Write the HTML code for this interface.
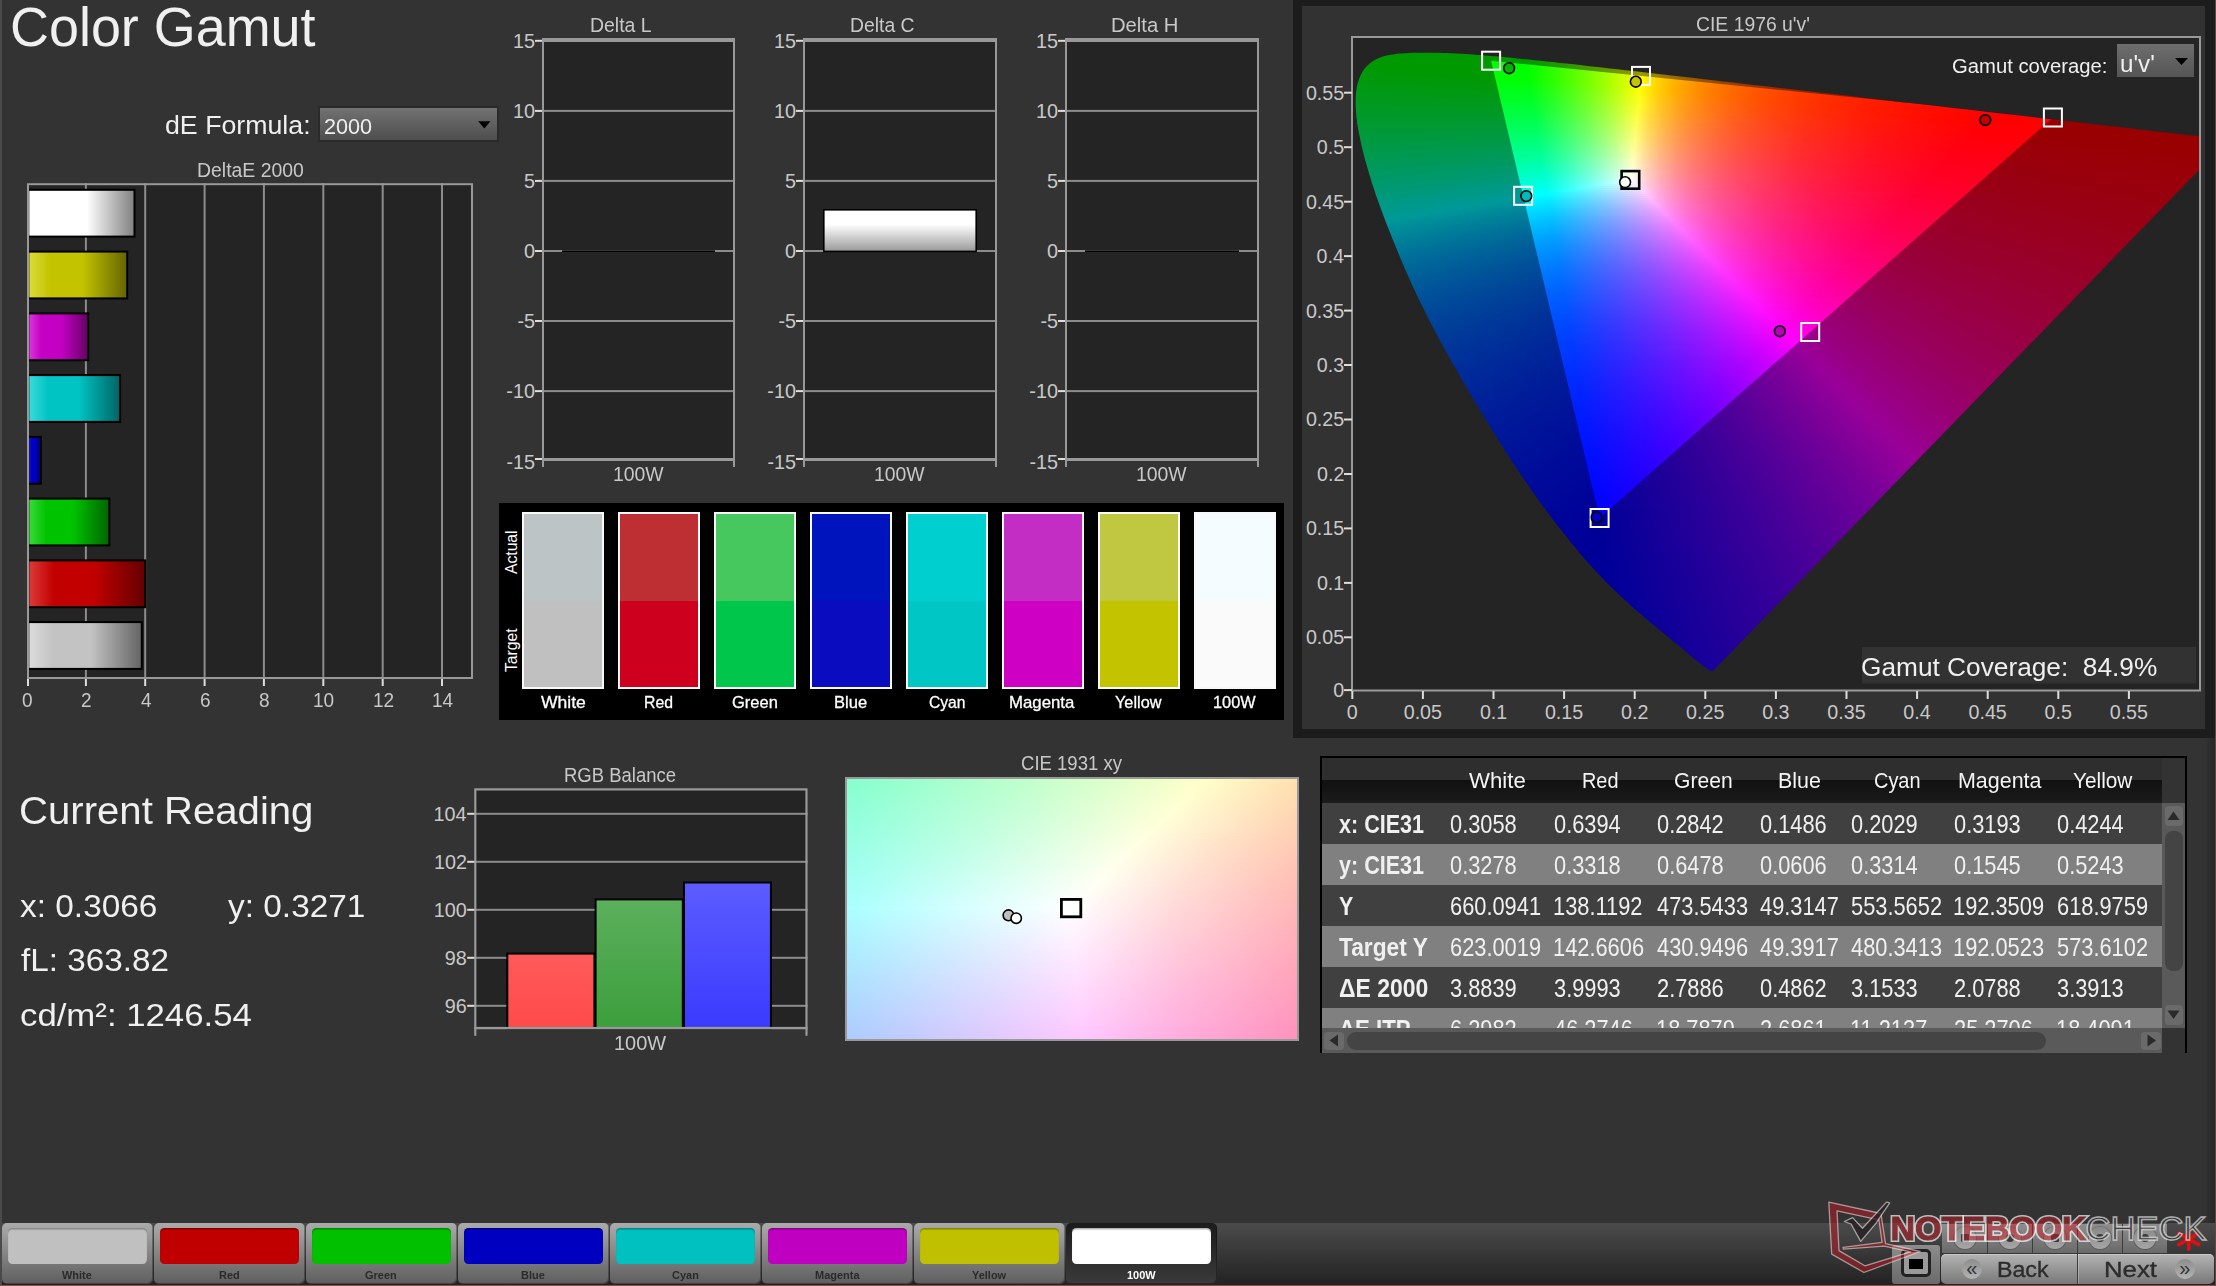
<!DOCTYPE html>
<html><head><meta charset="utf-8"><title>Color Gamut</title>
<style>
html,body{margin:0;padding:0;background:#333;}
body{width:2216px;height:1286px;overflow:hidden;position:relative;font-family:"Liberation Sans",sans-serif;}
.t{position:absolute;white-space:nowrap;line-height:1;transform-origin:0 0;}
.b{position:absolute;box-sizing:border-box;}
svg{position:absolute;left:0;top:0;overflow:visible;}
</style></head><body>
<div class="b" style="left:0px;top:0px;width:1.6px;height:1286px;background:#4a4a4a;"></div>
<div class="t" style="left:10.3px;top:0px;font-size:55.0px;color:#f0f0f0;transform:scaleX(0.980);">Color Gamut</div>
<div class="t" style="left:164.7px;top:112px;font-size:26.4px;color:#f0f0f0;transform:scaleX(1.013);">dE Formula:</div>
<div class="b" style="left:318px;top:106px;width:180.5px;height:36px;background:linear-gradient(#727272,#4e4e4e);border:2px solid #2a2a2a;"></div>
<div class="t" style="left:324.4px;top:116px;font-size:22.6px;color:#f0f0f0;transform:scaleX(0.956);">2000</div>
<svg width="2216" height="1286"><path d="M478.2 121.3h12.2l-6.1 7.2z" fill="#000"/></svg>
<div class="t" style="left:196.8px;top:161px;font-size:19.6px;color:#c8c8c8;transform:scaleX(0.991);">DeltaE 2000</div>
<svg width="2216" height="1286"><rect x="27.0" y="183.2" width="445.0" height="493.8" fill="#242424"/><rect x="84.9" y="183.2" width="2" height="493.8" fill="#8c8c8c"/><rect x="144.2" y="183.2" width="2" height="493.8" fill="#8c8c8c"/><rect x="203.6" y="183.2" width="2" height="493.8" fill="#8c8c8c"/><rect x="262.9" y="183.2" width="2" height="493.8" fill="#8c8c8c"/><rect x="322.3" y="183.2" width="2" height="493.8" fill="#8c8c8c"/><rect x="381.7" y="183.2" width="2" height="493.8" fill="#8c8c8c"/><rect x="441.0" y="183.2" width="2" height="493.8" fill="#8c8c8c"/><rect x="27.0" y="678.0" width="2" height="8" fill="#ddd"/><rect x="84.9" y="678.0" width="2" height="8" fill="#ddd"/><rect x="144.2" y="678.0" width="2" height="8" fill="#ddd"/><rect x="203.6" y="678.0" width="2" height="8" fill="#ddd"/><rect x="262.9" y="678.0" width="2" height="8" fill="#ddd"/><rect x="322.3" y="678.0" width="2" height="8" fill="#ddd"/><rect x="381.7" y="678.0" width="2" height="8" fill="#ddd"/><rect x="441.0" y="678.0" width="2" height="8" fill="#ddd"/><defs><linearGradient id="bg0"><stop offset="0" stop-color="#ffffff"/><stop offset=".22" stop-color="#ffffff"/><stop offset=".55" stop-color="#ffffff"/><stop offset="1" stop-color="#808080"/></linearGradient><linearGradient id="bg1"><stop offset="0" stop-color="#dcdc3c"/><stop offset=".22" stop-color="#c3c300"/><stop offset=".55" stop-color="#c3c300"/><stop offset="1" stop-color="#646400"/></linearGradient><linearGradient id="bg2"><stop offset="0" stop-color="#dc3cdc"/><stop offset=".22" stop-color="#c300c3"/><stop offset=".55" stop-color="#c300c3"/><stop offset="1" stop-color="#640064"/></linearGradient><linearGradient id="bg3"><stop offset="0" stop-color="#3cdcdc"/><stop offset=".22" stop-color="#00c3c3"/><stop offset=".55" stop-color="#00c3c3"/><stop offset="1" stop-color="#006464"/></linearGradient><linearGradient id="bg4"><stop offset="0" stop-color="#3c3cdc"/><stop offset=".22" stop-color="#0000c3"/><stop offset=".55" stop-color="#0000c3"/><stop offset="1" stop-color="#000064"/></linearGradient><linearGradient id="bg5"><stop offset="0" stop-color="#3cdc3c"/><stop offset=".22" stop-color="#00c300"/><stop offset=".55" stop-color="#00c300"/><stop offset="1" stop-color="#006400"/></linearGradient><linearGradient id="bg6"><stop offset="0" stop-color="#dc3c3c"/><stop offset=".22" stop-color="#c30000"/><stop offset=".55" stop-color="#c30000"/><stop offset="1" stop-color="#640000"/></linearGradient><linearGradient id="bg7"><stop offset="0" stop-color="#dcdcdc"/><stop offset=".22" stop-color="#c3c3c3"/><stop offset=".55" stop-color="#c3c3c3"/><stop offset="1" stop-color="#646464"/></linearGradient></defs><rect x="28.3" y="189.8" width="106.2" height="46.8" fill="url(#bg0)" stroke="#000" stroke-width="2"/><rect x="28.3" y="251.6" width="98.9" height="46.8" fill="url(#bg1)" stroke="#000" stroke-width="2"/><rect x="28.3" y="313.4" width="59.9" height="46.8" fill="url(#bg2)" stroke="#000" stroke-width="2"/><rect x="28.3" y="375.1" width="91.8" height="46.8" fill="url(#bg3)" stroke="#000" stroke-width="2"/><rect x="28.3" y="436.9" width="12.6" height="46.8" fill="url(#bg4)" stroke="#000" stroke-width="2"/><rect x="28.3" y="498.6" width="81.0" height="46.8" fill="url(#bg5)" stroke="#000" stroke-width="2"/><rect x="28.3" y="560.4" width="116.9" height="46.8" fill="url(#bg6)" stroke="#000" stroke-width="2"/><rect x="28.3" y="622.1" width="113.5" height="46.8" fill="url(#bg7)" stroke="#000" stroke-width="2"/><rect x="28.0" y="184.2" width="444.0" height="493.8" fill="none" stroke="#999" stroke-width="2"/></svg>
<div class="t" style="left:22.0px;top:690px;font-size:20.0px;color:#c8c8c8;transform:scaleX(0.950);">0</div>
<div class="t" style="left:81.4px;top:690px;font-size:20.0px;color:#c8c8c8;transform:scaleX(0.950);">2</div>
<div class="t" style="left:140.8px;top:690px;font-size:20.0px;color:#c8c8c8;transform:scaleX(0.950);">4</div>
<div class="t" style="left:200.0px;top:690px;font-size:20.0px;color:#c8c8c8;transform:scaleX(0.950);">6</div>
<div class="t" style="left:259.4px;top:690px;font-size:20.0px;color:#c8c8c8;transform:scaleX(0.950);">8</div>
<div class="t" style="left:313.2px;top:690px;font-size:20.0px;color:#c8c8c8;transform:scaleX(0.950);">10</div>
<div class="t" style="left:372.7px;top:690px;font-size:20.0px;color:#c8c8c8;transform:scaleX(0.950);">12</div>
<div class="t" style="left:431.8px;top:690px;font-size:20.0px;color:#c8c8c8;transform:scaleX(0.950);">14</div>
<svg width="2216" height="1286"><rect x="542.0" y="38.0" width="193.0" height="423.0" fill="#242424"/><rect x="535.0" y="39.8" width="8" height="2" fill="#ddd"/><rect x="542.0" y="109.9" width="193.0" height="2" fill="#8c8c8c"/><rect x="535.0" y="109.9" width="8" height="2" fill="#ddd"/><rect x="542.0" y="179.9" width="193.0" height="2" fill="#8c8c8c"/><rect x="535.0" y="179.9" width="8" height="2" fill="#ddd"/><rect x="542.0" y="250.0" width="193.0" height="2" fill="#8c8c8c"/><rect x="535.0" y="250.0" width="8" height="2" fill="#ddd"/><rect x="542.0" y="320.0" width="193.0" height="2" fill="#8c8c8c"/><rect x="535.0" y="320.0" width="8" height="2" fill="#ddd"/><rect x="542.0" y="390.1" width="193.0" height="2" fill="#8c8c8c"/><rect x="535.0" y="390.1" width="8" height="2" fill="#ddd"/><rect x="535.0" y="458.0" width="8" height="2" fill="#ddd"/><rect x="562.0" y="250.4" width="153.0" height="1.6" fill="#000"/><path d="M543.0 467.0V40.0H734.0V467.0" fill="none" stroke="#999" stroke-width="2"/><rect x="542.0" y="38.0" width="193.0" height="4" fill="#999"/><rect x="542.0" y="458.0" width="193.0" height="3" fill="#999"/></svg>
<div class="t" style="left:589.9px;top:16px;font-size:19.7px;color:#c8c8c8;transform:scaleX(0.988);">Delta L</div>
<div class="t" style="left:612.5px;top:464px;font-size:20.0px;color:#c8c8c8;transform:scaleX(0.970);">100W</div>
<div class="t" style="left:513.0px;top:32px;font-size:19.8px;color:#c8c8c8;">15</div>
<div class="t" style="left:512.9px;top:102px;font-size:19.8px;color:#c8c8c8;">10</div>
<div class="t" style="left:524.0px;top:172px;font-size:19.8px;color:#c8c8c8;">5</div>
<div class="t" style="left:523.9px;top:242px;font-size:19.8px;color:#c8c8c8;">0</div>
<div class="t" style="left:517.4px;top:312px;font-size:19.8px;color:#c8c8c8;">-5</div>
<div class="t" style="left:506.3px;top:382px;font-size:19.8px;color:#c8c8c8;">-10</div>
<div class="t" style="left:506.4px;top:453px;font-size:19.8px;color:#c8c8c8;">-15</div>
<svg width="2216" height="1286"><rect x="803.0" y="38.0" width="194.0" height="423.0" fill="#242424"/><rect x="796.0" y="39.8" width="8" height="2" fill="#ddd"/><rect x="803.0" y="109.9" width="194.0" height="2" fill="#8c8c8c"/><rect x="796.0" y="109.9" width="8" height="2" fill="#ddd"/><rect x="803.0" y="179.9" width="194.0" height="2" fill="#8c8c8c"/><rect x="796.0" y="179.9" width="8" height="2" fill="#ddd"/><rect x="803.0" y="250.0" width="194.0" height="2" fill="#8c8c8c"/><rect x="796.0" y="250.0" width="8" height="2" fill="#ddd"/><rect x="803.0" y="320.0" width="194.0" height="2" fill="#8c8c8c"/><rect x="796.0" y="320.0" width="8" height="2" fill="#ddd"/><rect x="803.0" y="390.1" width="194.0" height="2" fill="#8c8c8c"/><rect x="796.0" y="390.1" width="8" height="2" fill="#ddd"/><rect x="796.0" y="458.0" width="8" height="2" fill="#ddd"/><defs><linearGradient id="dcg" x1="0" y1="0" x2="0" y2="1"><stop offset="0" stop-color="#fff"/><stop offset=".35" stop-color="#fff"/><stop offset="1" stop-color="#999"/></linearGradient></defs><rect x="823.8" y="209.8" width="152.4" height="41.6" fill="url(#dcg)" stroke="#000" stroke-width="1.6"/><path d="M804.0 467.0V40.0H996.0V467.0" fill="none" stroke="#999" stroke-width="2"/><rect x="803.0" y="38.0" width="194.0" height="4" fill="#999"/><rect x="803.0" y="458.0" width="194.0" height="3" fill="#999"/></svg>
<div class="t" style="left:850.1px;top:16px;font-size:19.7px;color:#c8c8c8;transform:scaleX(0.982);">Delta C</div>
<div class="t" style="left:874.0px;top:464px;font-size:20.0px;color:#c8c8c8;transform:scaleX(0.970);">100W</div>
<div class="t" style="left:774.0px;top:32px;font-size:19.8px;color:#c8c8c8;">15</div>
<div class="t" style="left:773.9px;top:102px;font-size:19.8px;color:#c8c8c8;">10</div>
<div class="t" style="left:785.0px;top:172px;font-size:19.8px;color:#c8c8c8;">5</div>
<div class="t" style="left:784.9px;top:242px;font-size:19.8px;color:#c8c8c8;">0</div>
<div class="t" style="left:778.4px;top:312px;font-size:19.8px;color:#c8c8c8;">-5</div>
<div class="t" style="left:767.3px;top:382px;font-size:19.8px;color:#c8c8c8;">-10</div>
<div class="t" style="left:767.4px;top:453px;font-size:19.8px;color:#c8c8c8;">-15</div>
<svg width="2216" height="1286"><rect x="1065.0" y="38.0" width="194.0" height="423.0" fill="#242424"/><rect x="1058.0" y="39.8" width="8" height="2" fill="#ddd"/><rect x="1065.0" y="109.9" width="194.0" height="2" fill="#8c8c8c"/><rect x="1058.0" y="109.9" width="8" height="2" fill="#ddd"/><rect x="1065.0" y="179.9" width="194.0" height="2" fill="#8c8c8c"/><rect x="1058.0" y="179.9" width="8" height="2" fill="#ddd"/><rect x="1065.0" y="250.0" width="194.0" height="2" fill="#8c8c8c"/><rect x="1058.0" y="250.0" width="8" height="2" fill="#ddd"/><rect x="1065.0" y="320.0" width="194.0" height="2" fill="#8c8c8c"/><rect x="1058.0" y="320.0" width="8" height="2" fill="#ddd"/><rect x="1065.0" y="390.1" width="194.0" height="2" fill="#8c8c8c"/><rect x="1058.0" y="390.1" width="8" height="2" fill="#ddd"/><rect x="1058.0" y="458.0" width="8" height="2" fill="#ddd"/><rect x="1085.0" y="250.4" width="154.0" height="1.6" fill="#000"/><path d="M1066.0 467.0V40.0H1258.0V467.0" fill="none" stroke="#999" stroke-width="2"/><rect x="1065.0" y="38.0" width="194.0" height="4" fill="#999"/><rect x="1065.0" y="458.0" width="194.0" height="3" fill="#999"/></svg>
<div class="t" style="left:1111.0px;top:16px;font-size:19.7px;color:#c8c8c8;transform:scaleX(1.028);">Delta H</div>
<div class="t" style="left:1136.0px;top:464px;font-size:20.0px;color:#c8c8c8;transform:scaleX(0.970);">100W</div>
<div class="t" style="left:1036.0px;top:32px;font-size:19.8px;color:#c8c8c8;">15</div>
<div class="t" style="left:1035.9px;top:102px;font-size:19.8px;color:#c8c8c8;">10</div>
<div class="t" style="left:1047.0px;top:172px;font-size:19.8px;color:#c8c8c8;">5</div>
<div class="t" style="left:1046.9px;top:242px;font-size:19.8px;color:#c8c8c8;">0</div>
<div class="t" style="left:1040.4px;top:312px;font-size:19.8px;color:#c8c8c8;">-5</div>
<div class="t" style="left:1029.3px;top:382px;font-size:19.8px;color:#c8c8c8;">-10</div>
<div class="t" style="left:1029.4px;top:453px;font-size:19.8px;color:#c8c8c8;">-15</div>
<div class="b" style="left:499px;top:503px;width:785px;height:216.5px;background:#000;"></div>
<div class="b" style="left:522.0px;top:512px;width:82.3px;height:177px;background:linear-gradient(#bdc4c6 0,#bdc4c6 50.3%,#c0c0c0 50.3%,#c0c0c0 100%);border:2px solid #f8f8f8;"></div>
<div class="t" style="left:541.0px;top:694px;font-size:17.0px;color:#fff;transform:scaleX(1.031);-webkit-text-stroke:.3px #fff;">White</div>
<div class="b" style="left:617.9px;top:512px;width:82.3px;height:177px;background:linear-gradient(#be2f34 0,#be2f34 50.3%,#cd001e 50.3%,#cd001e 100%);border:2px solid #f8f8f8;"></div>
<div class="t" style="left:644.3px;top:694px;font-size:17.0px;color:#fff;transform:scaleX(0.930);-webkit-text-stroke:.3px #fff;">Red</div>
<div class="b" style="left:713.9px;top:512px;width:82.3px;height:177px;background:linear-gradient(#46c85f 0,#46c85f 50.3%,#00c64b 50.3%,#00c64b 100%);border:2px solid #f8f8f8;"></div>
<div class="t" style="left:732.1px;top:694px;font-size:17.0px;color:#fff;transform:scaleX(0.970);-webkit-text-stroke:.3px #fff;">Green</div>
<div class="b" style="left:809.8px;top:512px;width:82.3px;height:177px;background:linear-gradient(#0014be 0,#0014be 50.3%,#0a0cc0 50.3%,#0a0cc0 100%);border:2px solid #f8f8f8;"></div>
<div class="t" style="left:833.9px;top:694px;font-size:17.0px;color:#fff;transform:scaleX(0.975);-webkit-text-stroke:.3px #fff;">Blue</div>
<div class="b" style="left:905.7px;top:512px;width:82.3px;height:177px;background:linear-gradient(#00cfcf 0,#00cfcf 50.3%,#00c6c6 50.3%,#00c6c6 100%);border:2px solid #f8f8f8;"></div>
<div class="t" style="left:928.6px;top:694px;font-size:17.0px;color:#fff;transform:scaleX(0.920);-webkit-text-stroke:.3px #fff;">Cyan</div>
<div class="b" style="left:1001.7px;top:512px;width:82.3px;height:177px;background:linear-gradient(#c32dc3 0,#c32dc3 50.3%,#cd00c3 50.3%,#cd00c3 100%);border:2px solid #f8f8f8;"></div>
<div class="t" style="left:1009.3px;top:694px;font-size:17.0px;color:#fff;transform:scaleX(0.988);-webkit-text-stroke:.3px #fff;">Magenta</div>
<div class="b" style="left:1097.6px;top:512px;width:82.3px;height:177px;background:linear-gradient(#c0c841 0,#c0c841 50.3%,#c3c300 50.3%,#c3c300 100%);border:2px solid #f8f8f8;"></div>
<div class="t" style="left:1115.1px;top:694px;font-size:17.0px;color:#fff;transform:scaleX(0.957);-webkit-text-stroke:.3px #fff;">Yellow</div>
<div class="b" style="left:1193.5px;top:512px;width:82.3px;height:177px;background:linear-gradient(#f5fcff 0,#f5fcff 50.3%,#fafafa 50.3%,#fafafa 100%);border:2px solid #f8f8f8;"></div>
<div class="t" style="left:1212.6px;top:694px;font-size:17.0px;color:#fff;transform:scaleX(0.959);-webkit-text-stroke:.3px #fff;">100W</div>
<div class="t" style="left:0.0px;top:-14px;font-size:16.5px;color:#fff;transform:scaleX(0.950);left:502.5px;top:573.5px;transform:rotate(-90deg) scaleX(.95);transform-origin:0 0;">Actual</div>
<div class="t" style="left:-0.3px;top:-14px;font-size:16.5px;color:#fff;transform:scaleX(0.950);left:502.5px;top:671.5px;transform:rotate(-90deg) scaleX(.95);transform-origin:0 0;">Target</div>
<div class="b" style="left:1293px;top:0px;width:921.5px;height:737.5px;background:#1c1c1c;"></div>
<div class="b" style="left:1302px;top:6px;width:903px;height:722.5px;background:#323232;"></div>
<div class="b" style="left:2205px;top:737.5px;width:9.5px;height:486px;background:linear-gradient(90deg,#333,#262626);"></div>
<div class="b" style="left:2214.5px;top:0px;width:1.5px;height:1286px;background:#74403a;"></div>
<svg width="2216" height="1286"><rect x="1351" y="36" width="850" height="655" fill="#242424"/><defs><clipPath id="uvc"><rect x="1353" y="38" width="846" height="651"/></clipPath><clipPath id="uvl" clip-path="url(#uvc)"><polygon points="1714.5,671.9 1714.5,671.8 1714.4,671.8 1714.4,671.8 1714.3,671.9 1714.3,672.0 1714.2,672.0 1714.2,672.1 1714.1,672.2 1714.0,672.3 1713.9,672.3 1713.8,672.3 1713.7,672.3 1713.6,672.3 1713.5,672.3 1713.4,672.3 1713.3,672.4 1713.2,672.5 1713.1,672.6 1712.9,672.7 1712.8,672.7 1712.7,672.7 1712.5,672.7 1712.3,672.7 1712.2,672.6 1712.0,672.6 1711.8,672.6 1711.6,672.6 1711.3,672.7 1711.1,672.7 1710.9,672.7 1710.6,672.7 1710.4,672.7 1710.1,672.6 1709.7,672.5 1709.3,672.3 1708.8,672.1 1708.3,671.7 1707.6,671.4 1706.9,670.9 1706.1,670.4 1705.3,669.8 1704.4,669.2 1703.5,668.5 1702.5,667.8 1701.5,667.0 1700.3,666.1 1699.1,665.1 1697.7,664.0 1696.2,662.8 1694.6,661.5 1693.0,660.1 1691.2,658.6 1689.4,657.1 1687.5,655.5 1685.5,653.7 1683.4,652.0 1681.3,650.1 1679.0,648.2 1676.5,646.2 1673.9,644.1 1671.2,641.8 1668.2,639.4 1665.1,636.8 1661.8,634.1 1658.4,631.3 1654.9,628.4 1651.2,625.4 1647.5,622.3 1643.5,618.9 1639.4,615.4 1635.0,611.6 1630.4,607.5 1625.7,603.2 1620.7,598.7 1615.7,593.9 1610.5,588.9 1605.0,583.5 1599.3,577.6 1593.2,571.0 1586.6,563.7 1579.5,555.6 1572.1,546.6 1564.2,536.9 1556.1,526.5 1547.7,515.5 1539.0,503.7 1530.1,491.2 1520.9,478.0 1511.6,464.0 1502.1,449.4 1492.5,434.1 1482.8,418.3 1473.0,402.2 1463.3,385.7 1453.7,369.0 1444.2,352.2 1435.1,335.3 1426.4,318.5 1418.1,301.9 1410.4,285.4 1403.2,269.3 1396.5,253.5 1390.3,238.3 1384.5,223.6 1379.3,209.6 1374.5,196.3 1370.3,183.7 1366.7,171.8 1363.5,160.8 1360.8,150.5 1358.7,141.0 1356.9,132.2 1355.5,124.0 1354.6,116.5 1354.0,109.5 1353.8,103.1 1353.9,97.2 1354.3,91.7 1355.1,86.6 1356.2,81.9 1357.6,77.7 1359.3,73.8 1361.3,70.3 1363.5,67.1 1366.0,64.3 1368.8,61.8 1371.7,59.7 1374.8,57.9 1378.1,56.3 1381.5,55.1 1385.1,54.0 1388.9,53.2 1392.7,52.6 1396.6,52.0 1400.7,51.7 1404.8,51.4 1409.0,51.2 1413.3,51.0 1417.5,50.9 1421.8,50.9 1426.1,50.8 1430.4,50.9 1434.7,50.9 1439.1,51.0 1443.4,51.1 1447.8,51.3 1452.3,51.5 1456.8,51.7 1461.4,51.9 1466.0,52.2 1470.8,52.5 1475.6,52.9 1480.5,53.3 1485.5,53.7 1490.6,54.1 1495.7,54.5 1501.0,55.0 1506.4,55.5 1511.9,56.0 1517.4,56.6 1523.1,57.2 1529.0,57.8 1534.9,58.4 1541.0,59.0 1547.3,59.7 1553.6,60.3 1560.1,61.1 1566.8,61.8 1573.6,62.5 1580.5,63.3 1587.6,64.1 1594.9,64.9 1602.3,65.8 1609.9,66.6 1617.6,67.5 1625.5,68.4 1633.6,69.3 1641.9,70.2 1650.3,71.2 1658.8,72.2 1667.6,73.2 1676.5,74.2 1685.6,75.3 1694.8,76.3 1704.3,77.4 1713.8,78.5 1723.6,79.7 1733.5,80.8 1743.6,82.0 1753.8,83.1 1764.1,84.3 1774.6,85.5 1785.2,86.8 1795.9,88.0 1806.7,89.2 1817.7,90.5 1828.7,91.8 1839.8,93.0 1850.9,94.3 1861.9,95.6 1872.9,96.9 1883.7,98.1 1894.4,99.4 1905.1,100.6 1915.7,101.8 1926.4,103.0 1936.9,104.3 1947.5,105.5 1957.8,106.7 1968.0,107.8 1978.0,109.0 1987.7,110.1 1997.1,111.2 2006.3,112.2 2015.3,113.2 2024.1,114.3 2032.6,115.2 2040.9,116.2 2049.0,117.1 2056.7,118.0 2064.2,118.9 2071.4,119.7 2078.3,120.5 2085.0,121.3 2091.5,122.1 2097.7,122.8 2103.6,123.4 2109.3,124.1 2114.9,124.7 2120.2,125.3 2125.3,125.9 2130.3,126.5 2135.1,127.1 2139.7,127.6 2144.3,128.1 2148.7,128.6 2153.0,129.1 2157.1,129.6 2161.1,130.1 2164.9,130.5 2168.6,131.0 2172.2,131.4 2175.5,131.7 2178.8,132.1 2181.9,132.5 2184.8,132.8 2187.6,133.1 2190.2,133.4 2192.7,133.7 2195.1,134.0 2197.3,134.2 2199.4,134.5 2201.4,134.7 2203.3,134.9 2205.1,135.1 2206.8,135.3 2208.5,135.5 2210.0,135.7 2211.4,135.9 2212.8,136.0 2214.0,136.2 2215.1,136.3 2216.0,136.4 2216.9,136.5 2217.7,136.6 2218.5,136.7 2219.3,136.8 2220.1,136.9 2220.8,136.9 2221.5,137.0 2222.1,137.1 2222.8,137.2 2223.3,137.2 2223.9,137.3 2224.4,137.4 2225.0,137.4 2225.5,137.5 2226.1,137.6 2226.7,137.6 2227.2,137.7 2227.8,137.8 2228.3,137.8 2228.8,137.9 2229.3,137.9 2229.7,138.0 2230.1,138.0 2230.4,138.1 2230.8,138.1 2231.0,138.1 2231.3,138.2 2231.5,138.2 2231.7,138.2 2231.8,138.2 2231.9,138.2 2232.0,138.2 2232.1,138.3 2232.2,138.3 2232.3,138.3 2232.3,138.3"/></clipPath><linearGradient id="u0" gradientUnits="userSpaceOnUse" x1="1396" x2="1464" y1="0" y2="0"><stop offset="0" stop-color="#0f0"/><stop offset="1" stop-color="#0f0"/></linearGradient><linearGradient id="u1" gradientUnits="userSpaceOnUse" x1="1384" x2="1491" y1="0" y2="0"><stop offset="0" stop-color="#0f0"/><stop offset="1" stop-color="#0f0"/></linearGradient><linearGradient id="u2" gradientUnits="userSpaceOnUse" x1="1378" x2="1513" y1="0" y2="0"><stop offset="0" stop-color="#0f0"/><stop offset="1" stop-color="#0f0"/></linearGradient><linearGradient id="u3" gradientUnits="userSpaceOnUse" x1="1373" x2="1533" y1="0" y2="0"><stop offset="0" stop-color="#0f0"/><stop offset="0.95" stop-color="#0f0"/><stop offset="1" stop-color="#0eff00"/></linearGradient><linearGradient id="u4" gradientUnits="userSpaceOnUse" x1="1370" x2="1552" y1="0" y2="0"><stop offset="0" stop-color="#0f0"/><stop offset="0.852" stop-color="#0f0"/><stop offset="1" stop-color="#2fff00"/></linearGradient><linearGradient id="u5" gradientUnits="userSpaceOnUse" x1="1367" x2="1570" y1="0" y2="0"><stop offset="0" stop-color="#0f0"/><stop offset="0.778" stop-color="#0f0"/><stop offset="0.872" stop-color="#20ff00"/><stop offset="1" stop-color="#52ff00"/></linearGradient><linearGradient id="u6" gradientUnits="userSpaceOnUse" x1="1365" x2="1588" y1="0" y2="0"><stop offset="0" stop-color="#00ff01"/><stop offset="0.722" stop-color="#0f0"/><stop offset="0.865" stop-color="#3aff00"/><stop offset="1" stop-color="#78ff00"/></linearGradient><linearGradient id="u7" gradientUnits="userSpaceOnUse" x1="1363" x2="1606" y1="0" y2="0"><stop offset="0" stop-color="#00ff04"/><stop offset="0.144" stop-color="#0f0"/><stop offset="0.671" stop-color="#0f0"/><stop offset="0.84" stop-color="#4bff00"/><stop offset="1" stop-color="#a1ff00"/></linearGradient><linearGradient id="u8" gradientUnits="userSpaceOnUse" x1="1361" x2="1624" y1="0" y2="0"><stop offset="0" stop-color="#00ff07"/><stop offset="0.221" stop-color="#0f0"/><stop offset="0.631" stop-color="#01ff00"/><stop offset="0.73" stop-color="#30ff00"/><stop offset="0.825" stop-color="#62ff00"/><stop offset="0.916" stop-color="#98ff00"/><stop offset="1" stop-color="#ceff00"/></linearGradient><linearGradient id="u9" gradientUnits="userSpaceOnUse" x1="1360" x2="1641" y1="0" y2="0"><stop offset="0" stop-color="#00ff09"/><stop offset="0.285" stop-color="#0f0"/><stop offset="0.594" stop-color="#0f0"/><stop offset="0.705" stop-color="#39ff00"/><stop offset="0.811" stop-color="#78ff00"/><stop offset="0.907" stop-color="#b7ff00"/><stop offset="1" stop-color="#fdff00"/></linearGradient><linearGradient id="u10" gradientUnits="userSpaceOnUse" x1="1359" x2="1659" y1="0" y2="0"><stop offset="0" stop-color="#00ff0c"/><stop offset="0.343" stop-color="#0f0"/><stop offset="0.56" stop-color="#0f0"/><stop offset="0.66" stop-color="#37ff00"/><stop offset="0.76" stop-color="#75ff00"/><stop offset="0.853" stop-color="#b8ff00"/><stop offset="0.94" stop-color="#feff00"/><stop offset="1" stop-color="#ffd300"/></linearGradient><linearGradient id="u11" gradientUnits="userSpaceOnUse" x1="1358" x2="1676" y1="0" y2="0"><stop offset="0" stop-color="#00ff0e"/><stop offset="0.393" stop-color="#0f0"/><stop offset="0.535" stop-color="#01ff00"/><stop offset="0.632" stop-color="#3aff00"/><stop offset="0.723" stop-color="#7f0"/><stop offset="0.808" stop-color="#b8ff00"/><stop offset="0.89" stop-color="#feff00"/><stop offset="0.943" stop-color="#ffd500"/><stop offset="1" stop-color="#ffb200"/></linearGradient><linearGradient id="u12" gradientUnits="userSpaceOnUse" x1="1357" x2="1693" y1="0" y2="0"><stop offset="0" stop-color="#0f1"/><stop offset="0.509" stop-color="#0f0"/><stop offset="0.601" stop-color="#3aff00"/><stop offset="0.688" stop-color="#7f0"/><stop offset="0.768" stop-color="#b8ff00"/><stop offset="0.845" stop-color="#ff0"/><stop offset="0.881" stop-color="#ffe000"/><stop offset="0.917" stop-color="#ffc600"/><stop offset="1" stop-color="#ff9800"/></linearGradient><linearGradient id="u13" gradientUnits="userSpaceOnUse" x1="1356" x2="1711" y1="0" y2="0"><stop offset="0" stop-color="#00ff13"/><stop offset="0.485" stop-color="#0f0"/><stop offset="0.566" stop-color="#35ff00"/><stop offset="0.651" stop-color="#75ff00"/><stop offset="0.727" stop-color="#b6ff00"/><stop offset="0.803" stop-color="#ff0"/><stop offset="0.845" stop-color="#ffd800"/><stop offset="0.89" stop-color="#ffb800"/><stop offset="0.941" stop-color="#ff9b00"/><stop offset="1" stop-color="#ff8100"/></linearGradient><linearGradient id="u14" gradientUnits="userSpaceOnUse" x1="1355" x2="1728" y1="0" y2="0"><stop offset="0" stop-color="#00ff16"/><stop offset="0.466" stop-color="#01ff03"/><stop offset="0.547" stop-color="#39ff00"/><stop offset="0.625" stop-color="#7f0"/><stop offset="0.694" stop-color="#b6ff00"/><stop offset="0.767" stop-color="#fffe00"/><stop offset="0.812" stop-color="#ffd300"/><stop offset="0.866" stop-color="#ffad00"/><stop offset="0.928" stop-color="#ff8c00"/><stop offset="1" stop-color="#ff6f00"/></linearGradient><linearGradient id="u15" gradientUnits="userSpaceOnUse" x1="1355" x2="1745" y1="0" y2="0"><stop offset="0" stop-color="#00ff18"/><stop offset="0.446" stop-color="#00ff06"/><stop offset="0.523" stop-color="#39ff02"/><stop offset="0.597" stop-color="#7f0"/><stop offset="0.667" stop-color="#b9ff00"/><stop offset="0.731" stop-color="#feff00"/><stop offset="0.787" stop-color="#ffca00"/><stop offset="0.846" stop-color="#ffa100"/><stop offset="0.918" stop-color="#ff7e00"/><stop offset="1" stop-color="#ff6000"/></linearGradient><linearGradient id="u16" gradientUnits="userSpaceOnUse" x1="1354" x2="1763" y1="0" y2="0"><stop offset="0" stop-color="#00ff1b"/><stop offset="0.428" stop-color="#00ff09"/><stop offset="0.499" stop-color="#36ff05"/><stop offset="0.572" stop-color="#7f0"/><stop offset="0.638" stop-color="#b9ff00"/><stop offset="0.699" stop-color="#feff00"/><stop offset="0.758" stop-color="#ffc500"/><stop offset="0.824" stop-color="#ff9800"/><stop offset="0.905" stop-color="#ff7200"/><stop offset="1" stop-color="#ff5200"/></linearGradient><linearGradient id="u17" gradientUnits="userSpaceOnUse" x1="1354" x2="1780" y1="0" y2="0"><stop offset="0" stop-color="#00ff1e"/><stop offset="0.413" stop-color="#01ff0d"/><stop offset="0.484" stop-color="#3aff08"/><stop offset="0.549" stop-color="#77ff04"/><stop offset="0.613" stop-color="#b9ff00"/><stop offset="0.671" stop-color="#ff0"/><stop offset="0.7" stop-color="#ffdf00"/><stop offset="0.73" stop-color="#ffc300"/><stop offset="0.765" stop-color="#ffa800"/><stop offset="0.803" stop-color="#ff9100"/><stop offset="0.892" stop-color="#ff6800"/><stop offset="1" stop-color="#ff4700"/></linearGradient><linearGradient id="u18" gradientUnits="userSpaceOnUse" x1="1353" x2="1798" y1="0" y2="0"><stop offset="0" stop-color="#00ff20"/><stop offset="0.398" stop-color="#00ff10"/><stop offset="0.465" stop-color="#3aff0c"/><stop offset="0.528" stop-color="#76ff08"/><stop offset="0.587" stop-color="#b6ff03"/><stop offset="0.645" stop-color="#ff0"/><stop offset="0.674" stop-color="#ffdc00"/><stop offset="0.708" stop-color="#ffbc00"/><stop offset="0.744" stop-color="#ffa100"/><stop offset="0.784" stop-color="#f80"/><stop offset="0.881" stop-color="#ff5e00"/><stop offset="1" stop-color="#ff3d00"/></linearGradient><linearGradient id="u19" gradientUnits="userSpaceOnUse" x1="1353" x2="1815" y1="0" y2="0"><stop offset="0" stop-color="#00ff23"/><stop offset="0.383" stop-color="#00ff13"/><stop offset="0.446" stop-color="#37ff10"/><stop offset="0.509" stop-color="#76ff0c"/><stop offset="0.565" stop-color="#b7ff07"/><stop offset="0.619" stop-color="#fdff03"/><stop offset="0.654" stop-color="#ffd700"/><stop offset="0.686" stop-color="#ffb800"/><stop offset="0.723" stop-color="#ff9c00"/><stop offset="0.766" stop-color="#ff8200"/><stop offset="0.816" stop-color="#ff6b00"/><stop offset="0.87" stop-color="#ff5600"/><stop offset="1" stop-color="#ff3500"/></linearGradient><linearGradient id="u20" gradientUnits="userSpaceOnUse" x1="1353" x2="1832" y1="0" y2="0"><stop offset="0" stop-color="#00ff25"/><stop offset="0.372" stop-color="#01ff17"/><stop offset="0.432" stop-color="#39ff13"/><stop offset="0.491" stop-color="#76ff10"/><stop offset="0.545" stop-color="#b7ff0c"/><stop offset="0.597" stop-color="#fdff07"/><stop offset="0.633" stop-color="#ffd403"/><stop offset="0.666" stop-color="#ffb400"/><stop offset="0.706" stop-color="#ff9600"/><stop offset="0.749" stop-color="#ff7c00"/><stop offset="0.8" stop-color="#ff6500"/><stop offset="0.858" stop-color="#ff5000"/><stop offset="1" stop-color="#ff2d00"/></linearGradient><linearGradient id="u21" gradientUnits="userSpaceOnUse" x1="1353" x2="1850" y1="0" y2="0"><stop offset="0" stop-color="#00ff28"/><stop offset="0.358" stop-color="#00ff1a"/><stop offset="0.416" stop-color="#38ff17"/><stop offset="0.473" stop-color="#76ff13"/><stop offset="0.525" stop-color="#b7ff10"/><stop offset="0.575" stop-color="#feff0c"/><stop offset="0.61" stop-color="#ffd307"/><stop offset="0.644" stop-color="#ffb104"/><stop offset="0.686" stop-color="#ff9100"/><stop offset="0.732" stop-color="#ff7600"/><stop offset="0.787" stop-color="#ff5e00"/><stop offset="0.849" stop-color="#ff4800"/><stop offset="1" stop-color="#ff2600"/></linearGradient><linearGradient id="u22" gradientUnits="userSpaceOnUse" x1="1353" x2="1867" y1="0" y2="0"><stop offset="0" stop-color="#00ff2a"/><stop offset="0.346" stop-color="#00ff1e"/><stop offset="0.403" stop-color="#38ff1b"/><stop offset="0.457" stop-color="#76ff17"/><stop offset="0.508" stop-color="#b7ff14"/><stop offset="0.556" stop-color="#feff10"/><stop offset="0.589" stop-color="#ffd30b"/><stop offset="0.626" stop-color="#ffad07"/><stop offset="0.669" stop-color="#ff8c03"/><stop offset="0.718" stop-color="#ff7000"/><stop offset="0.774" stop-color="#ff5800"/><stop offset="0.839" stop-color="#ff4300"/><stop offset="1" stop-color="#ff2000"/></linearGradient><linearGradient id="u23" gradientUnits="userSpaceOnUse" x1="1353" x2="1884" y1="0" y2="0"><stop offset="0" stop-color="#00ff2d"/><stop offset="0.337" stop-color="#01ff21"/><stop offset="0.392" stop-color="#3aff1e"/><stop offset="0.444" stop-color="#78ff1b"/><stop offset="0.493" stop-color="#baff18"/><stop offset="0.539" stop-color="#ffff15"/><stop offset="0.571" stop-color="#ffd20f"/><stop offset="0.608" stop-color="#ffab0a"/><stop offset="0.652" stop-color="#ff8905"/><stop offset="0.702" stop-color="#ff6c01"/><stop offset="0.761" stop-color="#ff5300"/><stop offset="0.829" stop-color="#ff3d00"/><stop offset="0.908" stop-color="#ff2b00"/><stop offset="1" stop-color="#ff1b00"/></linearGradient><linearGradient id="u24" gradientUnits="userSpaceOnUse" x1="1353" x2="1901" y1="0" y2="0"><stop offset="0" stop-color="#00ff30"/><stop offset="0.327" stop-color="#00ff25"/><stop offset="0.38" stop-color="#39ff22"/><stop offset="0.429" stop-color="#76ff1f"/><stop offset="0.474" stop-color="#b5ff1d"/><stop offset="0.522" stop-color="#fffe19"/><stop offset="0.555" stop-color="#ffcf12"/><stop offset="0.593" stop-color="#ffa70c"/><stop offset="0.637" stop-color="#ff8508"/><stop offset="0.69" stop-color="#ff6703"/><stop offset="0.75" stop-color="#ff4e00"/><stop offset="0.821" stop-color="#ff3800"/><stop offset="0.903" stop-color="#ff2600"/><stop offset="1" stop-color="#ff1600"/></linearGradient><linearGradient id="u25" gradientUnits="userSpaceOnUse" x1="1353" x2="1919" y1="0" y2="0"><stop offset="0" stop-color="#00ff32"/><stop offset="0.316" stop-color="#00ff28"/><stop offset="0.366" stop-color="#37ff26"/><stop offset="0.415" stop-color="#76ff23"/><stop offset="0.459" stop-color="#b5ff21"/><stop offset="0.505" stop-color="#fffe1e"/><stop offset="0.537" stop-color="#ffcf16"/><stop offset="0.576" stop-color="#ffa50f"/><stop offset="0.622" stop-color="#ff810a"/><stop offset="0.675" stop-color="#ff6305"/><stop offset="0.737" stop-color="#ff4901"/><stop offset="0.811" stop-color="#f30"/><stop offset="0.898" stop-color="#ff2100"/><stop offset="1" stop-color="#f10"/></linearGradient><linearGradient id="u26" gradientUnits="userSpaceOnUse" x1="1353" x2="1936" y1="0" y2="0"><stop offset="0" stop-color="#00ff35"/><stop offset="0.307" stop-color="#00ff2c"/><stop offset="0.352" stop-color="#32ff2a"/><stop offset="0.401" stop-color="#73ff28"/><stop offset="0.443" stop-color="#b0ff25"/><stop offset="0.491" stop-color="#fffd22"/><stop offset="0.523" stop-color="#ffcc1a"/><stop offset="0.563" stop-color="#ffa112"/><stop offset="0.609" stop-color="#ff7d0c"/><stop offset="0.664" stop-color="#ff5e07"/><stop offset="0.729" stop-color="#ff4402"/><stop offset="0.804" stop-color="#ff2f00"/><stop offset="0.894" stop-color="#ff1c00"/><stop offset="1" stop-color="#ff0d00"/></linearGradient><linearGradient id="u27" gradientUnits="userSpaceOnUse" x1="1353" x2="1954" y1="0" y2="0"><stop offset="0" stop-color="#00ff38"/><stop offset="0.3" stop-color="#00ff30"/><stop offset="0.346" stop-color="#38ff2e"/><stop offset="0.389" stop-color="#73ff2c"/><stop offset="0.429" stop-color="#b0ff2a"/><stop offset="0.476" stop-color="#fffd27"/><stop offset="0.509" stop-color="#ffc91d"/><stop offset="0.549" stop-color="#ff9d15"/><stop offset="0.596" stop-color="#ff790e"/><stop offset="0.651" stop-color="#ff5a08"/><stop offset="0.717" stop-color="#ff4004"/><stop offset="0.795" stop-color="#ff2b00"/><stop offset="0.889" stop-color="#ff1800"/><stop offset="1" stop-color="#ff0900"/></linearGradient><linearGradient id="u28" gradientUnits="userSpaceOnUse" x1="1353" x2="1971" y1="0" y2="0"><stop offset="0" stop-color="#00ff3a"/><stop offset="0.291" stop-color="#0f3"/><stop offset="0.337" stop-color="#38ff32"/><stop offset="0.382" stop-color="#78ff30"/><stop offset="0.422" stop-color="#b8ff2e"/><stop offset="0.461" stop-color="#ffff2c"/><stop offset="0.495" stop-color="#ffc821"/><stop offset="0.534" stop-color="#ff9c18"/><stop offset="0.581" stop-color="#f71"/><stop offset="0.638" stop-color="#ff580a"/><stop offset="0.706" stop-color="#ff3d05"/><stop offset="0.786" stop-color="#ff2700"/><stop offset="0.883" stop-color="#ff1500"/><stop offset="1" stop-color="#ff0500"/></linearGradient><linearGradient id="u29" gradientUnits="userSpaceOnUse" x1="1353" x2="1988" y1="0" y2="0"><stop offset="0" stop-color="#00ff3d"/><stop offset="0.283" stop-color="#00ff37"/><stop offset="0.326" stop-color="#35ff36"/><stop offset="0.37" stop-color="#75ff34"/><stop offset="0.409" stop-color="#b6ff32"/><stop offset="0.449" stop-color="#ffff31"/><stop offset="0.465" stop-color="#ffe22a"/><stop offset="0.482" stop-color="#ffc825"/><stop offset="0.521" stop-color="#ff9a1b"/><stop offset="0.569" stop-color="#ff7413"/><stop offset="0.627" stop-color="#ff540c"/><stop offset="0.696" stop-color="#ff3a06"/><stop offset="0.78" stop-color="#ff2301"/><stop offset="0.88" stop-color="#f10"/><stop offset="1" stop-color="#ff0200"/></linearGradient><linearGradient id="u30" gradientUnits="userSpaceOnUse" x1="1353" x2="2006" y1="0" y2="0"><stop offset="0" stop-color="#00ff40"/><stop offset="0.277" stop-color="#00ff3b"/><stop offset="0.32" stop-color="#39ff3a"/><stop offset="0.36" stop-color="#75ff38"/><stop offset="0.397" stop-color="#b3ff37"/><stop offset="0.436" stop-color="#fffe35"/><stop offset="0.452" stop-color="#ffe12f"/><stop offset="0.47" stop-color="#ffc528"/><stop offset="0.51" stop-color="#ff971d"/><stop offset="0.559" stop-color="#ff7014"/><stop offset="0.617" stop-color="#ff500d"/><stop offset="0.689" stop-color="#ff3507"/><stop offset="0.776" stop-color="#ff1f02"/><stop offset="0.89" stop-color="#ff0c00"/><stop offset="1" stop-color="#f00"/></linearGradient><linearGradient id="u31" gradientUnits="userSpaceOnUse" x1="1353" x2="2023" y1="0" y2="0"><stop offset="0" stop-color="#00ff43"/><stop offset="0.27" stop-color="#00ff3f"/><stop offset="0.31" stop-color="#37ff3e"/><stop offset="0.351" stop-color="#75ff3d"/><stop offset="0.387" stop-color="#b3ff3c"/><stop offset="0.425" stop-color="#fffd3a"/><stop offset="0.442" stop-color="#ffde32"/><stop offset="0.46" stop-color="#ffc22b"/><stop offset="0.5" stop-color="#ff9320"/><stop offset="0.549" stop-color="#ff6c16"/><stop offset="0.609" stop-color="#ff4c0f"/><stop offset="0.687" stop-color="#ff3008"/><stop offset="0.781" stop-color="#ff1a02"/><stop offset="0.927" stop-color="#ff0400"/><stop offset="1" stop-color="#f00"/></linearGradient><linearGradient id="u32" gradientUnits="userSpaceOnUse" x1="1353" x2="2041" y1="0" y2="0"><stop offset="0" stop-color="#00ff45"/><stop offset="0.263" stop-color="#00ff42"/><stop offset="0.301" stop-color="#34ff42"/><stop offset="0.34" stop-color="#72ff41"/><stop offset="0.374" stop-color="#aeff40"/><stop offset="0.414" stop-color="#fffd3f"/><stop offset="0.43" stop-color="#ffdd37"/><stop offset="0.448" stop-color="#ffc12f"/><stop offset="0.468" stop-color="#ffa728"/><stop offset="0.49" stop-color="#ff9022"/><stop offset="0.541" stop-color="#ff6818"/><stop offset="0.602" stop-color="#ff4810"/><stop offset="0.685" stop-color="#ff2b08"/><stop offset="0.786" stop-color="#ff1402"/><stop offset="0.93" stop-color="#f00"/><stop offset="1" stop-color="#f00"/></linearGradient><linearGradient id="u33" gradientUnits="userSpaceOnUse" x1="1353" x2="2058" y1="0" y2="0"><stop offset="0" stop-color="#00ff48"/><stop offset="0.258" stop-color="#00ff46"/><stop offset="0.296" stop-color="#38ff46"/><stop offset="0.333" stop-color="#74ff45"/><stop offset="0.365" stop-color="#aeff45"/><stop offset="0.403" stop-color="#ff4"/><stop offset="0.404" stop-color="#fffc44"/><stop offset="0.42" stop-color="#ffdd3b"/><stop offset="0.438" stop-color="#ffbf33"/><stop offset="0.458" stop-color="#ffa52b"/><stop offset="0.479" stop-color="#ff8e25"/><stop offset="0.53" stop-color="#ff651a"/><stop offset="0.593" stop-color="#ff4511"/><stop offset="0.679" stop-color="#ff2809"/><stop offset="0.789" stop-color="#ff1003"/><stop offset="0.906" stop-color="#f00"/><stop offset="1" stop-color="#f00"/></linearGradient><linearGradient id="u34" gradientUnits="userSpaceOnUse" x1="1353" x2="2075" y1="0" y2="0"><stop offset="0" stop-color="#00ff4b"/><stop offset="0.252" stop-color="#00ff4a"/><stop offset="0.289" stop-color="#38ff4a"/><stop offset="0.327" stop-color="#77ff4a"/><stop offset="0.36" stop-color="#b7ff4a"/><stop offset="0.393" stop-color="#ffff49"/><stop offset="0.409" stop-color="#ffdf40"/><stop offset="0.427" stop-color="#ffc037"/><stop offset="0.446" stop-color="#ffa62f"/><stop offset="0.468" stop-color="#ff8d28"/><stop offset="0.519" stop-color="#ff641c"/><stop offset="0.584" stop-color="#ff4212"/><stop offset="0.676" stop-color="#ff240a"/><stop offset="0.792" stop-color="#ff0c03"/><stop offset="0.882" stop-color="#f00"/><stop offset="1" stop-color="#f00"/></linearGradient><linearGradient id="u35" gradientUnits="userSpaceOnUse" x1="1354" x2="2093" y1="0" y2="0"><stop offset="0" stop-color="#00ff4e"/><stop offset="0.245" stop-color="#00ff4e"/><stop offset="0.28" stop-color="#35ff4e"/><stop offset="0.317" stop-color="#74ff4e"/><stop offset="0.349" stop-color="#b4ff4e"/><stop offset="0.383" stop-color="#fffe4e"/><stop offset="0.399" stop-color="#ffdc44"/><stop offset="0.417" stop-color="#ffbd3a"/><stop offset="0.437" stop-color="#ffa232"/><stop offset="0.459" stop-color="#ff8a2b"/><stop offset="0.512" stop-color="#ff601e"/><stop offset="0.576" stop-color="#ff3f13"/><stop offset="0.674" stop-color="#ff200a"/><stop offset="0.798" stop-color="#ff0803"/><stop offset="0.858" stop-color="#f00"/><stop offset="1" stop-color="#f00"/></linearGradient><linearGradient id="u36" gradientUnits="userSpaceOnUse" x1="1354" x2="2110" y1="0" y2="0"><stop offset="0" stop-color="#00ff51"/><stop offset="0.241" stop-color="#00ff52"/><stop offset="0.276" stop-color="#39ff52"/><stop offset="0.311" stop-color="#77ff53"/><stop offset="0.341" stop-color="#b4ff53"/><stop offset="0.374" stop-color="#fffe53"/><stop offset="0.39" stop-color="#ffdb48"/><stop offset="0.407" stop-color="#ffbd3e"/><stop offset="0.427" stop-color="#ffa135"/><stop offset="0.45" stop-color="#ff882d"/><stop offset="0.503" stop-color="#ff5d20"/><stop offset="0.569" stop-color="#ff3c15"/><stop offset="0.671" stop-color="#ff1c0b"/><stop offset="0.803" stop-color="#ff0403"/><stop offset="0.836" stop-color="#ff0001"/><stop offset="1" stop-color="#f00"/></linearGradient><linearGradient id="u37" gradientUnits="userSpaceOnUse" x1="1354" x2="2127" y1="0" y2="0"><stop offset="0" stop-color="#00ff53"/><stop offset="0.235" stop-color="#00ff56"/><stop offset="0.27" stop-color="#39ff57"/><stop offset="0.303" stop-color="#74ff57"/><stop offset="0.332" stop-color="#b2ff58"/><stop offset="0.366" stop-color="#fffd58"/><stop offset="0.382" stop-color="#ffda4c"/><stop offset="0.4" stop-color="#ffba41"/><stop offset="0.42" stop-color="#ff9d38"/><stop offset="0.442" stop-color="#ff842f"/><stop offset="0.495" stop-color="#ff5a21"/><stop offset="0.563" stop-color="#ff3916"/><stop offset="0.669" stop-color="#ff190b"/><stop offset="0.809" stop-color="#ff0103"/><stop offset="1" stop-color="#f00"/></linearGradient><linearGradient id="u38" gradientUnits="userSpaceOnUse" x1="1354" x2="2145" y1="0" y2="0"><stop offset="0" stop-color="#00ff56"/><stop offset="0.23" stop-color="#00ff5a"/><stop offset="0.262" stop-color="#34ff5b"/><stop offset="0.295" stop-color="#71ff5c"/><stop offset="0.322" stop-color="#acff5d"/><stop offset="0.357" stop-color="#feff5e"/><stop offset="0.358" stop-color="#fffc5d"/><stop offset="0.374" stop-color="#ffd750"/><stop offset="0.392" stop-color="#ffb745"/><stop offset="0.412" stop-color="#ff9b3b"/><stop offset="0.434" stop-color="#ff8332"/><stop offset="0.487" stop-color="#ff5823"/><stop offset="0.555" stop-color="#ff3617"/><stop offset="0.659" stop-color="#ff170c"/><stop offset="0.794" stop-color="#ff0004"/><stop offset="1" stop-color="#f00"/></linearGradient><linearGradient id="u39" gradientUnits="userSpaceOnUse" x1="1355" x2="2162" y1="0" y2="0"><stop offset="0" stop-color="#00ff59"/><stop offset="0.226" stop-color="#01ff5e"/><stop offset="0.259" stop-color="#3aff5f"/><stop offset="0.291" stop-color="#79ff61"/><stop offset="0.321" stop-color="#bbff62"/><stop offset="0.348" stop-color="#ffff63"/><stop offset="0.364" stop-color="#ffd955"/><stop offset="0.382" stop-color="#ffb949"/><stop offset="0.401" stop-color="#ff9c3f"/><stop offset="0.424" stop-color="#ff8235"/><stop offset="0.45" stop-color="#ff6a2c"/><stop offset="0.478" stop-color="#ff5625"/><stop offset="0.546" stop-color="#ff3418"/><stop offset="0.646" stop-color="#ff170d"/><stop offset="0.774" stop-color="#ff0005"/><stop offset="1" stop-color="#f00"/></linearGradient><linearGradient id="u40" gradientUnits="userSpaceOnUse" x1="1355" x2="2179" y1="0" y2="0"><stop offset="0" stop-color="#00ff5c"/><stop offset="0.221" stop-color="#00ff62"/><stop offset="0.254" stop-color="#3aff64"/><stop offset="0.284" stop-color="#76ff65"/><stop offset="0.312" stop-color="#b5ff67"/><stop offset="0.341" stop-color="#fffe68"/><stop offset="0.357" stop-color="#ffd85a"/><stop offset="0.374" stop-color="#ffb84d"/><stop offset="0.393" stop-color="#ff9b42"/><stop offset="0.416" stop-color="#ff8038"/><stop offset="0.442" stop-color="#ff692f"/><stop offset="0.471" stop-color="#ff5427"/><stop offset="0.54" stop-color="#ff3219"/><stop offset="0.635" stop-color="#ff160f"/><stop offset="0.756" stop-color="#ff0006"/><stop offset="1" stop-color="#f00"/></linearGradient><linearGradient id="u41" gradientUnits="userSpaceOnUse" x1="1355" x2="2197" y1="0" y2="0"><stop offset="0" stop-color="#00ff5f"/><stop offset="0.216" stop-color="#00ff67"/><stop offset="0.246" stop-color="#35ff68"/><stop offset="0.277" stop-color="#73ff6a"/><stop offset="0.304" stop-color="#b2ff6c"/><stop offset="0.334" stop-color="#fffe6e"/><stop offset="0.349" stop-color="#ffd85e"/><stop offset="0.367" stop-color="#ffb550"/><stop offset="0.387" stop-color="#ff9744"/><stop offset="0.41" stop-color="#ff7d3a"/><stop offset="0.436" stop-color="#ff6530"/><stop offset="0.464" stop-color="#ff5128"/><stop offset="0.534" stop-color="#ff2f1a"/><stop offset="0.624" stop-color="#ff1510"/><stop offset="0.738" stop-color="#ff0007"/><stop offset="1" stop-color="#f00"/></linearGradient><linearGradient id="u42" gradientUnits="userSpaceOnUse" x1="1356" x2="2199" y1="0" y2="0"><stop offset="0" stop-color="#00ff62"/><stop offset="0.216" stop-color="#01ff6b"/><stop offset="0.247" stop-color="#39ff6d"/><stop offset="0.276" stop-color="#76ff6f"/><stop offset="0.302" stop-color="#b2ff71"/><stop offset="0.332" stop-color="#fffd73"/><stop offset="0.348" stop-color="#ffd763"/><stop offset="0.365" stop-color="#ffb554"/><stop offset="0.386" stop-color="#ff9748"/><stop offset="0.408" stop-color="#ff7c3d"/><stop offset="0.434" stop-color="#ff6533"/><stop offset="0.463" stop-color="#ff512a"/><stop offset="0.533" stop-color="#ff2f1c"/><stop offset="0.62" stop-color="#ff1511"/><stop offset="0.733" stop-color="#ff0009"/><stop offset="1" stop-color="#f00"/></linearGradient><linearGradient id="u43" gradientUnits="userSpaceOnUse" x1="1356" x2="2199" y1="0" y2="0"><stop offset="0" stop-color="#00ff65"/><stop offset="0.216" stop-color="#00ff6f"/><stop offset="0.247" stop-color="#38ff71"/><stop offset="0.275" stop-color="#73ff74"/><stop offset="0.301" stop-color="#b0ff76"/><stop offset="0.332" stop-color="#fffc78"/><stop offset="0.348" stop-color="#ffd667"/><stop offset="0.365" stop-color="#ffb458"/><stop offset="0.386" stop-color="#ff964b"/><stop offset="0.408" stop-color="#ff7c40"/><stop offset="0.434" stop-color="#ff6435"/><stop offset="0.463" stop-color="#ff502d"/><stop offset="0.533" stop-color="#ff2e1e"/><stop offset="0.619" stop-color="#ff1413"/><stop offset="0.731" stop-color="#ff000a"/><stop offset="1" stop-color="#f00"/></linearGradient><linearGradient id="u44" gradientUnits="userSpaceOnUse" x1="1357" x2="2199" y1="0" y2="0"><stop offset="0" stop-color="#00ff68"/><stop offset="0.215" stop-color="#00ff73"/><stop offset="0.245" stop-color="#36ff76"/><stop offset="0.276" stop-color="#75ff79"/><stop offset="0.304" stop-color="#b9ff7c"/><stop offset="0.33" stop-color="#ffff7f"/><stop offset="0.346" stop-color="#ffd86d"/><stop offset="0.363" stop-color="#ffb55d"/><stop offset="0.382" stop-color="#ff9850"/><stop offset="0.405" stop-color="#ff7d44"/><stop offset="0.431" stop-color="#ff6539"/><stop offset="0.46" stop-color="#ff5130"/><stop offset="0.53" stop-color="#ff2e20"/><stop offset="0.616" stop-color="#ff1514"/><stop offset="0.728" stop-color="#ff000b"/><stop offset="1" stop-color="#f00"/></linearGradient><linearGradient id="u45" gradientUnits="userSpaceOnUse" x1="1357" x2="2199" y1="0" y2="0"><stop offset="0" stop-color="#00ff6b"/><stop offset="0.216" stop-color="#01ff78"/><stop offset="0.247" stop-color="#3aff7b"/><stop offset="0.277" stop-color="#78ff7e"/><stop offset="0.304" stop-color="#b9ff81"/><stop offset="0.33" stop-color="#ffff84"/><stop offset="0.346" stop-color="#ffd872"/><stop offset="0.363" stop-color="#ffb561"/><stop offset="0.382" stop-color="#ff9854"/><stop offset="0.405" stop-color="#ff7d47"/><stop offset="0.431" stop-color="#ff653c"/><stop offset="0.46" stop-color="#ff5032"/><stop offset="0.53" stop-color="#ff2e22"/><stop offset="0.616" stop-color="#ff1416"/><stop offset="0.726" stop-color="#ff000c"/><stop offset="1" stop-color="#f00"/></linearGradient><linearGradient id="u46" gradientUnits="userSpaceOnUse" x1="1357" x2="2199" y1="0" y2="0"><stop offset="0" stop-color="#00ff6e"/><stop offset="0.216" stop-color="#00ff7c"/><stop offset="0.247" stop-color="#39ff7f"/><stop offset="0.276" stop-color="#75ff83"/><stop offset="0.302" stop-color="#b3ff86"/><stop offset="0.33" stop-color="#fffe89"/><stop offset="0.346" stop-color="#ffd776"/><stop offset="0.363" stop-color="#ffb465"/><stop offset="0.382" stop-color="#ff9757"/><stop offset="0.405" stop-color="#ff7c4a"/><stop offset="0.431" stop-color="#ff643e"/><stop offset="0.46" stop-color="#ff5035"/><stop offset="0.53" stop-color="#ff2e24"/><stop offset="0.615" stop-color="#ff1417"/><stop offset="0.723" stop-color="#ff000e"/><stop offset="1" stop-color="#ff0001"/></linearGradient><linearGradient id="u47" gradientUnits="userSpaceOnUse" x1="1358" x2="2199" y1="0" y2="0"><stop offset="0" stop-color="#00ff71"/><stop offset="0.215" stop-color="#00ff81"/><stop offset="0.244" stop-color="#34ff84"/><stop offset="0.273" stop-color="#72ff87"/><stop offset="0.3" stop-color="#b0ff8b"/><stop offset="0.329" stop-color="#fffd8f"/><stop offset="0.345" stop-color="#ffd67b"/><stop offset="0.363" stop-color="#ffb369"/><stop offset="0.382" stop-color="#ff965b"/><stop offset="0.404" stop-color="#ff7c4d"/><stop offset="0.43" stop-color="#ff6441"/><stop offset="0.459" stop-color="#ff4f37"/><stop offset="0.529" stop-color="#ff2d26"/><stop offset="0.614" stop-color="#ff1419"/><stop offset="0.721" stop-color="#ff000f"/><stop offset="1" stop-color="#ff0002"/></linearGradient><linearGradient id="u48" gradientUnits="userSpaceOnUse" x1="1358" x2="2199" y1="0" y2="0"><stop offset="0" stop-color="#00ff74"/><stop offset="0.216" stop-color="#01ff85"/><stop offset="0.246" stop-color="#38ff89"/><stop offset="0.275" stop-color="#75ff8d"/><stop offset="0.3" stop-color="#b0ff91"/><stop offset="0.329" stop-color="#fffd94"/><stop offset="0.345" stop-color="#ffd580"/><stop offset="0.363" stop-color="#ffb36e"/><stop offset="0.382" stop-color="#ff965e"/><stop offset="0.404" stop-color="#ff7b50"/><stop offset="0.43" stop-color="#ff6344"/><stop offset="0.459" stop-color="#ff4f39"/><stop offset="0.529" stop-color="#ff2d28"/><stop offset="0.612" stop-color="#ff141b"/><stop offset="0.718" stop-color="#ff0010"/><stop offset="1" stop-color="#ff0002"/></linearGradient><linearGradient id="u49" gradientUnits="userSpaceOnUse" x1="1359" x2="2199" y1="0" y2="0"><stop offset="0" stop-color="#00ff78"/><stop offset="0.215" stop-color="#00ff8a"/><stop offset="0.245" stop-color="#38ff8e"/><stop offset="0.273" stop-color="#72ff92"/><stop offset="0.298" stop-color="#aeff96"/><stop offset="0.327" stop-color="#ffff9b"/><stop offset="0.329" stop-color="#fffc9a"/><stop offset="0.344" stop-color="#ffd585"/><stop offset="0.362" stop-color="#ffb272"/><stop offset="0.381" stop-color="#ff9562"/><stop offset="0.404" stop-color="#ff7a54"/><stop offset="0.43" stop-color="#ff6247"/><stop offset="0.458" stop-color="#ff4e3c"/><stop offset="0.529" stop-color="#ff2c29"/><stop offset="0.611" stop-color="#ff141c"/><stop offset="0.715" stop-color="#ff0012"/><stop offset="1" stop-color="#ff0003"/></linearGradient><linearGradient id="u50" gradientUnits="userSpaceOnUse" x1="1359" x2="2199" y1="0" y2="0"><stop offset="0" stop-color="#00ff7b"/><stop offset="0.215" stop-color="#00ff8e"/><stop offset="0.244" stop-color="#35ff92"/><stop offset="0.274" stop-color="#75ff97"/><stop offset="0.301" stop-color="#b7ff9c"/><stop offset="0.327" stop-color="#ffffa1"/><stop offset="0.343" stop-color="#ffd78b"/><stop offset="0.36" stop-color="#ffb578"/><stop offset="0.38" stop-color="#ff9667"/><stop offset="0.402" stop-color="#ff7b57"/><stop offset="0.429" stop-color="#ff634a"/><stop offset="0.457" stop-color="#ff4e3f"/><stop offset="0.527" stop-color="#ff2c2b"/><stop offset="0.61" stop-color="#ff131e"/><stop offset="0.713" stop-color="#ff0013"/><stop offset="1" stop-color="#ff0004"/></linearGradient><linearGradient id="u51" gradientUnits="userSpaceOnUse" x1="1360" x2="2199" y1="0" y2="0"><stop offset="0" stop-color="#00ff7e"/><stop offset="0.216" stop-color="#01ff93"/><stop offset="0.246" stop-color="#39ff98"/><stop offset="0.274" stop-color="#77ff9d"/><stop offset="0.3" stop-color="#b7ffa2"/><stop offset="0.327" stop-color="#fffea7"/><stop offset="0.342" stop-color="#ffd690"/><stop offset="0.359" stop-color="#ffb57c"/><stop offset="0.379" stop-color="#ff956a"/><stop offset="0.402" stop-color="#ff7a5b"/><stop offset="0.427" stop-color="#ff634d"/><stop offset="0.455" stop-color="#ff4e41"/><stop offset="0.526" stop-color="#ff2c2e"/><stop offset="0.607" stop-color="#ff1420"/><stop offset="0.71" stop-color="#ff0014"/><stop offset="1" stop-color="#ff0005"/></linearGradient><linearGradient id="u52" gradientUnits="userSpaceOnUse" x1="1360" x2="2199" y1="0" y2="0"><stop offset="0" stop-color="#00ff81"/><stop offset="0.216" stop-color="#00ff98"/><stop offset="0.246" stop-color="#39ff9d"/><stop offset="0.273" stop-color="#74ffa2"/><stop offset="0.298" stop-color="#b1ffa7"/><stop offset="0.327" stop-color="#fffdad"/><stop offset="0.342" stop-color="#ffd595"/><stop offset="0.359" stop-color="#ffb481"/><stop offset="0.379" stop-color="#ff946e"/><stop offset="0.402" stop-color="#ff795e"/><stop offset="0.427" stop-color="#ff6250"/><stop offset="0.455" stop-color="#ff4e44"/><stop offset="0.526" stop-color="#ff2b2f"/><stop offset="0.607" stop-color="#ff1321"/><stop offset="0.708" stop-color="#ff0016"/><stop offset="1" stop-color="#ff0005"/></linearGradient><linearGradient id="u53" gradientUnits="userSpaceOnUse" x1="1361" x2="2199" y1="0" y2="0"><stop offset="0" stop-color="#00ff84"/><stop offset="0.215" stop-color="#00ff9d"/><stop offset="0.243" stop-color="#36ffa1"/><stop offset="0.272" stop-color="#74ffa7"/><stop offset="0.297" stop-color="#b1ffad"/><stop offset="0.326" stop-color="#fffdb2"/><stop offset="0.341" stop-color="#ffd59a"/><stop offset="0.358" stop-color="#ffb385"/><stop offset="0.377" stop-color="#ff9573"/><stop offset="0.4" stop-color="#ff7a62"/><stop offset="0.426" stop-color="#ff6253"/><stop offset="0.455" stop-color="#ff4d46"/><stop offset="0.525" stop-color="#ff2b31"/><stop offset="0.606" stop-color="#ff1323"/><stop offset="0.706" stop-color="#ff0017"/><stop offset="1" stop-color="#ff0006"/></linearGradient><linearGradient id="u54" gradientUnits="userSpaceOnUse" x1="1361" x2="2199" y1="0" y2="0"><stop offset="0" stop-color="#0f8"/><stop offset="0.216" stop-color="#01ffa2"/><stop offset="0.245" stop-color="#38ffa7"/><stop offset="0.272" stop-color="#74ffad"/><stop offset="0.296" stop-color="#aeffb2"/><stop offset="0.325" stop-color="#feffba"/><stop offset="0.326" stop-color="#fffcb8"/><stop offset="0.341" stop-color="#ffd49f"/><stop offset="0.358" stop-color="#ffb289"/><stop offset="0.377" stop-color="#ff9577"/><stop offset="0.4" stop-color="#ff7965"/><stop offset="0.426" stop-color="#ff6156"/><stop offset="0.455" stop-color="#ff4d49"/><stop offset="0.525" stop-color="#ff2a33"/><stop offset="0.605" stop-color="#ff1324"/><stop offset="0.704" stop-color="#ff0018"/><stop offset="1" stop-color="#ff0007"/></linearGradient><linearGradient id="u55" gradientUnits="userSpaceOnUse" x1="1362" x2="2199" y1="0" y2="0"><stop offset="0" stop-color="#00ff8b"/><stop offset="0.117" stop-color="#00ff97"/><stop offset="0.215" stop-color="#00ffa6"/><stop offset="0.245" stop-color="#3affac"/><stop offset="0.272" stop-color="#77ffb2"/><stop offset="0.299" stop-color="#b8ffb9"/><stop offset="0.324" stop-color="#ffffc0"/><stop offset="0.339" stop-color="#ffd6a5"/><stop offset="0.356" stop-color="#ffb48f"/><stop offset="0.375" stop-color="#ff967b"/><stop offset="0.398" stop-color="#ff7a69"/><stop offset="0.423" stop-color="#ff625a"/><stop offset="0.453" stop-color="#ff4d4c"/><stop offset="0.523" stop-color="#ff2a35"/><stop offset="0.602" stop-color="#ff1326"/><stop offset="0.701" stop-color="#ff001a"/><stop offset="1" stop-color="#ff0008"/></linearGradient><linearGradient id="u56" gradientUnits="userSpaceOnUse" x1="1362" x2="2199" y1="0" y2="0"><stop offset="0" stop-color="#00ff8e"/><stop offset="0.117" stop-color="#00ff9b"/><stop offset="0.215" stop-color="#00ffab"/><stop offset="0.244" stop-color="#37ffb1"/><stop offset="0.272" stop-color="#76ffb8"/><stop offset="0.297" stop-color="#b5ffbf"/><stop offset="0.324" stop-color="#fffec6"/><stop offset="0.339" stop-color="#ffd5aa"/><stop offset="0.356" stop-color="#ffb394"/><stop offset="0.375" stop-color="#ff957f"/><stop offset="0.398" stop-color="#ff796d"/><stop offset="0.423" stop-color="#ff625d"/><stop offset="0.453" stop-color="#ff4c4e"/><stop offset="0.523" stop-color="#ff2a37"/><stop offset="0.601" stop-color="#ff1328"/><stop offset="0.699" stop-color="#ff001b"/><stop offset="1" stop-color="#ff0008"/></linearGradient><linearGradient id="u57" gradientUnits="userSpaceOnUse" x1="1363" x2="2199" y1="0" y2="0"><stop offset="0" stop-color="#00ff92"/><stop offset="0.117" stop-color="#00ff9f"/><stop offset="0.214" stop-color="#00ffb0"/><stop offset="0.24" stop-color="#32ffb6"/><stop offset="0.27" stop-color="#73ffbd"/><stop offset="0.295" stop-color="#b2ffc4"/><stop offset="0.323" stop-color="#fffecc"/><stop offset="0.339" stop-color="#ffd5b0"/><stop offset="0.355" stop-color="#ffb298"/><stop offset="0.374" stop-color="#ff9483"/><stop offset="0.397" stop-color="#ff7970"/><stop offset="0.422" stop-color="#ff6160"/><stop offset="0.452" stop-color="#ff4c51"/><stop offset="0.523" stop-color="#ff2939"/><stop offset="0.6" stop-color="#ff1229"/><stop offset="0.696" stop-color="#ff001d"/><stop offset="1" stop-color="#ff0009"/></linearGradient><linearGradient id="u58" gradientUnits="userSpaceOnUse" x1="1363" x2="2199" y1="0" y2="0"><stop offset="0" stop-color="#00ff95"/><stop offset="0.117" stop-color="#00ffa4"/><stop offset="0.215" stop-color="#00ffb5"/><stop offset="0.244" stop-color="#39ffbc"/><stop offset="0.27" stop-color="#73ffc3"/><stop offset="0.294" stop-color="#afffca"/><stop offset="0.323" stop-color="#fffdd2"/><stop offset="0.339" stop-color="#ffd4b5"/><stop offset="0.355" stop-color="#ffb29c"/><stop offset="0.374" stop-color="#ff9387"/><stop offset="0.397" stop-color="#ff7873"/><stop offset="0.422" stop-color="#ff6063"/><stop offset="0.451" stop-color="#ff4c54"/><stop offset="0.522" stop-color="#ff293b"/><stop offset="0.598" stop-color="#ff122b"/><stop offset="0.694" stop-color="#ff001e"/><stop offset="0.828" stop-color="#ff0013"/><stop offset="1" stop-color="#ff000a"/></linearGradient><linearGradient id="u59" gradientUnits="userSpaceOnUse" x1="1364" x2="2199" y1="0" y2="0"><stop offset="0" stop-color="#00ff98"/><stop offset="0.117" stop-color="#00ffa8"/><stop offset="0.214" stop-color="#00ffba"/><stop offset="0.242" stop-color="#36ffc1"/><stop offset="0.269" stop-color="#73ffc9"/><stop offset="0.292" stop-color="#acffd0"/><stop offset="0.321" stop-color="#feffda"/><stop offset="0.322" stop-color="#fffcd8"/><stop offset="0.338" stop-color="#ffd3ba"/><stop offset="0.354" stop-color="#ffb1a1"/><stop offset="0.374" stop-color="#ff938b"/><stop offset="0.396" stop-color="#f77"/><stop offset="0.422" stop-color="#ff6066"/><stop offset="0.45" stop-color="#ff4b56"/><stop offset="0.521" stop-color="#ff293d"/><stop offset="0.596" stop-color="#ff122d"/><stop offset="0.691" stop-color="#ff0020"/><stop offset="0.826" stop-color="#ff0014"/><stop offset="1" stop-color="#ff000a"/></linearGradient><linearGradient id="u60" gradientUnits="userSpaceOnUse" x1="1365" x2="2199" y1="0" y2="0"><stop offset="0" stop-color="#00ff9c"/><stop offset="0.116" stop-color="#00ffac"/><stop offset="0.213" stop-color="#00ffbf"/><stop offset="0.24" stop-color="#33ffc6"/><stop offset="0.27" stop-color="#76ffcf"/><stop offset="0.296" stop-color="#b9ffd8"/><stop offset="0.32" stop-color="#ffffe1"/><stop offset="0.336" stop-color="#ffd5c1"/><stop offset="0.353" stop-color="#ffb2a7"/><stop offset="0.372" stop-color="#ff9490"/><stop offset="0.394" stop-color="#ff787b"/><stop offset="0.42" stop-color="#ff6069"/><stop offset="0.448" stop-color="#ff4b5a"/><stop offset="0.519" stop-color="#ff2940"/><stop offset="0.595" stop-color="#ff122f"/><stop offset="0.688" stop-color="#ff0021"/><stop offset="0.825" stop-color="#ff0015"/><stop offset="1" stop-color="#ff000b"/></linearGradient><linearGradient id="u61" gradientUnits="userSpaceOnUse" x1="1365" x2="2199" y1="0" y2="0"><stop offset="0" stop-color="#00ff9f"/><stop offset="0.118" stop-color="#00ffb0"/><stop offset="0.215" stop-color="#00ffc5"/><stop offset="0.243" stop-color="#3affcd"/><stop offset="0.27" stop-color="#76ffd5"/><stop offset="0.295" stop-color="#b6ffdd"/><stop offset="0.32" stop-color="#ffffe7"/><stop offset="0.336" stop-color="#ffd4c6"/><stop offset="0.353" stop-color="#ffb2ac"/><stop offset="0.372" stop-color="#ff9394"/><stop offset="0.394" stop-color="#ff777e"/><stop offset="0.42" stop-color="#ff5f6c"/><stop offset="0.448" stop-color="#ff4b5c"/><stop offset="0.519" stop-color="#ff2842"/><stop offset="0.594" stop-color="#ff1230"/><stop offset="0.686" stop-color="#ff0023"/><stop offset="0.823" stop-color="#ff0016"/><stop offset="1" stop-color="#ff000c"/></linearGradient><linearGradient id="u62" gradientUnits="userSpaceOnUse" x1="1366" x2="2199" y1="0" y2="0"><stop offset="0" stop-color="#00ffa3"/><stop offset="0.116" stop-color="#00ffb5"/><stop offset="0.214" stop-color="#00ffca"/><stop offset="0.241" stop-color="#37ffd2"/><stop offset="0.269" stop-color="#75ffdb"/><stop offset="0.293" stop-color="#b3ffe3"/><stop offset="0.319" stop-color="#fffeed"/><stop offset="0.335" stop-color="#ffd4cc"/><stop offset="0.352" stop-color="#ffb1b0"/><stop offset="0.371" stop-color="#ff9298"/><stop offset="0.393" stop-color="#ff7883"/><stop offset="0.418" stop-color="#ff6070"/><stop offset="0.448" stop-color="#ff4a5f"/><stop offset="0.519" stop-color="#ff2844"/><stop offset="0.592" stop-color="#ff1232"/><stop offset="0.683" stop-color="#ff0024"/><stop offset="0.821" stop-color="#ff0017"/><stop offset="1" stop-color="#ff000d"/></linearGradient><linearGradient id="u63" gradientUnits="userSpaceOnUse" x1="1366" x2="2197" y1="0" y2="0"><stop offset="0" stop-color="#00ffa6"/><stop offset="0.117" stop-color="#00ffb9"/><stop offset="0.214" stop-color="#00ffcf"/><stop offset="0.239" stop-color="#31ffd7"/><stop offset="0.268" stop-color="#72ffe0"/><stop offset="0.292" stop-color="#b0ffe9"/><stop offset="0.32" stop-color="#fffdf3"/><stop offset="0.335" stop-color="#ffd6d3"/><stop offset="0.351" stop-color="#ffb2b7"/><stop offset="0.371" stop-color="#ff939d"/><stop offset="0.394" stop-color="#ff7786"/><stop offset="0.419" stop-color="#ff5f73"/><stop offset="0.448" stop-color="#ff4a62"/><stop offset="0.519" stop-color="#ff2846"/><stop offset="0.592" stop-color="#ff1234"/><stop offset="0.682" stop-color="#ff0026"/><stop offset="0.821" stop-color="#ff0018"/><stop offset="1" stop-color="#ff000d"/></linearGradient><linearGradient id="u64" gradientUnits="userSpaceOnUse" x1="1367" x2="2195" y1="0" y2="0"><stop offset="0" stop-color="#0fa"/><stop offset="0.117" stop-color="#00ffbd"/><stop offset="0.215" stop-color="#00ffd5"/><stop offset="0.243" stop-color="#38ffdd"/><stop offset="0.269" stop-color="#75ffe7"/><stop offset="0.292" stop-color="#b0fff0"/><stop offset="0.32" stop-color="#fffcfa"/><stop offset="0.335" stop-color="#ffd5d9"/><stop offset="0.351" stop-color="#ffb2bb"/><stop offset="0.371" stop-color="#ff92a1"/><stop offset="0.394" stop-color="#ff768a"/><stop offset="0.419" stop-color="#ff5e76"/><stop offset="0.448" stop-color="#ff4a65"/><stop offset="0.519" stop-color="#ff2748"/><stop offset="0.592" stop-color="#ff1136"/><stop offset="0.681" stop-color="#ff0027"/><stop offset="0.82" stop-color="#ff0019"/><stop offset="1" stop-color="#ff000e"/></linearGradient><linearGradient id="u65" gradientUnits="userSpaceOnUse" x1="1368" x2="2193" y1="0" y2="0"><stop offset="0" stop-color="#00ffae"/><stop offset="0.118" stop-color="#00ffc2"/><stop offset="0.215" stop-color="#00ffda"/><stop offset="0.24" stop-color="#33ffe2"/><stop offset="0.265" stop-color="#6cffec"/><stop offset="0.288" stop-color="#a6fff5"/><stop offset="0.31" stop-color="#e4ffff"/><stop offset="0.321" stop-color="#fff8fd"/><stop offset="0.337" stop-color="#ffcfda"/><stop offset="0.354" stop-color="#ffacbc"/><stop offset="0.373" stop-color="#ff8ea3"/><stop offset="0.395" stop-color="#ff748c"/><stop offset="0.421" stop-color="#ff5d78"/><stop offset="0.45" stop-color="#ff4867"/><stop offset="0.521" stop-color="#ff2649"/><stop offset="0.593" stop-color="#ff1137"/><stop offset="0.68" stop-color="#ff0029"/><stop offset="0.819" stop-color="#ff001a"/><stop offset="1" stop-color="#ff000f"/></linearGradient><linearGradient id="u66" gradientUnits="userSpaceOnUse" x1="1368" x2="2191" y1="0" y2="0"><stop offset="0" stop-color="#00ffb1"/><stop offset="0.118" stop-color="#00ffc6"/><stop offset="0.215" stop-color="#00ffe0"/><stop offset="0.236" stop-color="#28ffe6"/><stop offset="0.26" stop-color="#5effef"/><stop offset="0.296" stop-color="#bff"/><stop offset="0.324" stop-color="#fff0fd"/><stop offset="0.34" stop-color="#ffc8da"/><stop offset="0.357" stop-color="#ffa7bd"/><stop offset="0.377" stop-color="#ff8aa4"/><stop offset="0.399" stop-color="#ff718e"/><stop offset="0.424" stop-color="#ff5a79"/><stop offset="0.453" stop-color="#ff4668"/><stop offset="0.525" stop-color="#ff254b"/><stop offset="0.594" stop-color="#ff1139"/><stop offset="0.679" stop-color="#ff002a"/><stop offset="0.819" stop-color="#ff001b"/><stop offset="1" stop-color="#ff0010"/></linearGradient><linearGradient id="u67" gradientUnits="userSpaceOnUse" x1="1369" x2="2189" y1="0" y2="0"><stop offset="0" stop-color="#00ffb5"/><stop offset="0.118" stop-color="#00ffcb"/><stop offset="0.216" stop-color="#01ffe5"/><stop offset="0.25" stop-color="#47fff2"/><stop offset="0.282" stop-color="#93ffff"/><stop offset="0.327" stop-color="#ffe9fd"/><stop offset="0.343" stop-color="#ffc2db"/><stop offset="0.36" stop-color="#ffa3be"/><stop offset="0.379" stop-color="#ff86a5"/><stop offset="0.402" stop-color="#ff6d8e"/><stop offset="0.428" stop-color="#ff577a"/><stop offset="0.457" stop-color="#ff4369"/><stop offset="0.529" stop-color="#ff234b"/><stop offset="0.596" stop-color="#ff103a"/><stop offset="0.678" stop-color="#ff002c"/><stop offset="0.818" stop-color="#ff001d"/><stop offset="1" stop-color="#f01"/></linearGradient><linearGradient id="u68" gradientUnits="userSpaceOnUse" x1="1370" x2="2188" y1="0" y2="0"><stop offset="0" stop-color="#00ffb9"/><stop offset="0.117" stop-color="#00ffcf"/><stop offset="0.215" stop-color="#00ffeb"/><stop offset="0.241" stop-color="#34fff4"/><stop offset="0.267" stop-color="#6effff"/><stop offset="0.329" stop-color="#ffe1fd"/><stop offset="0.345" stop-color="#ffbcdb"/><stop offset="0.362" stop-color="#ff9ebf"/><stop offset="0.381" stop-color="#ff83a6"/><stop offset="0.405" stop-color="#ff6a8f"/><stop offset="0.432" stop-color="#ff537a"/><stop offset="0.461" stop-color="#ff4169"/><stop offset="0.533" stop-color="#ff214c"/><stop offset="0.598" stop-color="#ff0f3c"/><stop offset="0.676" stop-color="#ff002e"/><stop offset="0.817" stop-color="#ff001e"/><stop offset="1" stop-color="#ff0012"/></linearGradient><linearGradient id="u69" gradientUnits="userSpaceOnUse" x1="1370" x2="2186" y1="0" y2="0"><stop offset="0" stop-color="#00ffbc"/><stop offset="0.118" stop-color="#00ffd4"/><stop offset="0.216" stop-color="#00fff1"/><stop offset="0.254" stop-color="#4effff"/><stop offset="0.332" stop-color="#ffdafd"/><stop offset="0.348" stop-color="#ffb7dc"/><stop offset="0.366" stop-color="#ff97be"/><stop offset="0.386" stop-color="#ff7da6"/><stop offset="0.409" stop-color="#ff658f"/><stop offset="0.436" stop-color="#ff507b"/><stop offset="0.466" stop-color="#ff3e6a"/><stop offset="0.538" stop-color="#ff1f4d"/><stop offset="0.6" stop-color="#ff0e3d"/><stop offset="0.675" stop-color="#ff002f"/><stop offset="0.816" stop-color="#ff001f"/><stop offset="1" stop-color="#ff0013"/></linearGradient><linearGradient id="u70" gradientUnits="userSpaceOnUse" x1="1371" x2="2184" y1="0" y2="0"><stop offset="0" stop-color="#00ffc0"/><stop offset="0.118" stop-color="#00ffd9"/><stop offset="0.216" stop-color="#01fff7"/><stop offset="0.239" stop-color="#2dffff"/><stop offset="0.282" stop-color="#89edff"/><stop offset="0.335" stop-color="#ffd3fd"/><stop offset="0.351" stop-color="#ffb1dd"/><stop offset="0.369" stop-color="#ff93bf"/><stop offset="0.39" stop-color="#ff79a6"/><stop offset="0.413" stop-color="#ff628f"/><stop offset="0.47" stop-color="#ff3b6a"/><stop offset="0.542" stop-color="#ff1e4e"/><stop offset="0.603" stop-color="#ff0e3e"/><stop offset="0.674" stop-color="#ff0031"/><stop offset="0.815" stop-color="#ff0020"/><stop offset="1" stop-color="#ff0013"/></linearGradient><linearGradient id="u71" gradientUnits="userSpaceOnUse" x1="1372" x2="2182" y1="0" y2="0"><stop offset="0" stop-color="#00ffc4"/><stop offset="0.119" stop-color="#00ffde"/><stop offset="0.216" stop-color="#00fffc"/><stop offset="0.273" stop-color="#73eaff"/><stop offset="0.337" stop-color="#ffcdfd"/><stop offset="0.353" stop-color="#ffacdd"/><stop offset="0.372" stop-color="#ff8fc0"/><stop offset="0.393" stop-color="#ff75a7"/><stop offset="0.416" stop-color="#ff5f90"/><stop offset="0.473" stop-color="#ff396c"/><stop offset="0.546" stop-color="#ff1d4f"/><stop offset="0.674" stop-color="#f03"/><stop offset="0.815" stop-color="#ff0021"/><stop offset="1" stop-color="#ff0014"/></linearGradient><linearGradient id="u72" gradientUnits="userSpaceOnUse" x1="1372" x2="2180" y1="0" y2="0"><stop offset="0" stop-color="#00ffc8"/><stop offset="0.103" stop-color="#00ffde"/><stop offset="0.208" stop-color="#0ff"/><stop offset="0.217" stop-color="#00fcff"/><stop offset="0.272" stop-color="#6ee5ff"/><stop offset="0.34" stop-color="#ffc6fd"/><stop offset="0.356" stop-color="#ffa7de"/><stop offset="0.375" stop-color="#ff8bc1"/><stop offset="0.396" stop-color="#ff72a8"/><stop offset="0.42" stop-color="#ff5c92"/><stop offset="0.476" stop-color="#ff386d"/><stop offset="0.551" stop-color="#ff1b50"/><stop offset="0.673" stop-color="#ff0034"/><stop offset="0.814" stop-color="#ff0023"/><stop offset="1" stop-color="#ff0015"/></linearGradient><linearGradient id="u73" gradientUnits="userSpaceOnUse" x1="1373" x2="2178" y1="0" y2="0"><stop offset="0" stop-color="#0fc"/><stop offset="0.104" stop-color="#00ffe3"/><stop offset="0.193" stop-color="#0ff"/><stop offset="0.217" stop-color="#01f6ff"/><stop offset="0.277" stop-color="#75deff"/><stop offset="0.343" stop-color="#ffc0fd"/><stop offset="0.359" stop-color="#ffa2de"/><stop offset="0.378" stop-color="#ff87c2"/><stop offset="0.399" stop-color="#ff6ea9"/><stop offset="0.424" stop-color="#ff5892"/><stop offset="0.481" stop-color="#ff356d"/><stop offset="0.555" stop-color="#ff1950"/><stop offset="0.672" stop-color="#ff0036"/><stop offset="0.814" stop-color="#ff0024"/><stop offset="1" stop-color="#ff0016"/></linearGradient><linearGradient id="u74" gradientUnits="userSpaceOnUse" x1="1374" x2="2176" y1="0" y2="0"><stop offset="0" stop-color="#00ffd0"/><stop offset="0.095" stop-color="#00ffe5"/><stop offset="0.177" stop-color="#0ff"/><stop offset="0.217" stop-color="#00f0ff"/><stop offset="0.278" stop-color="#75d8ff"/><stop offset="0.345" stop-color="#ffbafd"/><stop offset="0.363" stop-color="#ff9bdc"/><stop offset="0.382" stop-color="#ff81c1"/><stop offset="0.403" stop-color="#ff6aa8"/><stop offset="0.426" stop-color="#ff5693"/><stop offset="0.485" stop-color="#ff336e"/><stop offset="0.56" stop-color="#ff1851"/><stop offset="0.671" stop-color="#ff0038"/><stop offset="0.813" stop-color="#ff0025"/><stop offset="1" stop-color="#ff0017"/></linearGradient><linearGradient id="u75" gradientUnits="userSpaceOnUse" x1="1374" x2="2174" y1="0" y2="0"><stop offset="0" stop-color="#00ffd4"/><stop offset="0.087" stop-color="#00ffe8"/><stop offset="0.163" stop-color="#0ff"/><stop offset="0.217" stop-color="#00ebff"/><stop offset="0.278" stop-color="#6fd4ff"/><stop offset="0.349" stop-color="#ffb4fe"/><stop offset="0.366" stop-color="#ff96dd"/><stop offset="0.385" stop-color="#ff7dc2"/><stop offset="0.406" stop-color="#ff67a9"/><stop offset="0.431" stop-color="#ff5293"/><stop offset="0.49" stop-color="#ff316e"/><stop offset="0.564" stop-color="#ff1752"/><stop offset="0.67" stop-color="#ff003a"/><stop offset="0.812" stop-color="#ff0026"/><stop offset="1" stop-color="#ff0018"/></linearGradient><linearGradient id="u76" gradientUnits="userSpaceOnUse" x1="1375" x2="2172" y1="0" y2="0"><stop offset="0" stop-color="#00ffd8"/><stop offset="0.147" stop-color="#0ff"/><stop offset="0.218" stop-color="#01e6ff"/><stop offset="0.281" stop-color="#74cdff"/><stop offset="0.351" stop-color="#ffaffe"/><stop offset="0.369" stop-color="#ff92dd"/><stop offset="0.388" stop-color="#ff7ac2"/><stop offset="0.409" stop-color="#ff64aa"/><stop offset="0.434" stop-color="#ff5094"/><stop offset="0.493" stop-color="#ff2f6f"/><stop offset="0.568" stop-color="#ff1553"/><stop offset="0.669" stop-color="#ff003b"/><stop offset="0.812" stop-color="#ff0028"/><stop offset="1" stop-color="#ff0019"/></linearGradient><linearGradient id="u77" gradientUnits="userSpaceOnUse" x1="1376" x2="2170" y1="0" y2="0"><stop offset="0" stop-color="#00ffdc"/><stop offset="0.131" stop-color="#0ff"/><stop offset="0.218" stop-color="#00e1ff"/><stop offset="0.282" stop-color="#74c8ff"/><stop offset="0.354" stop-color="#ffa9fe"/><stop offset="0.369" stop-color="#ff91e2"/><stop offset="0.387" stop-color="#ff7ac8"/><stop offset="0.428" stop-color="#ff549c"/><stop offset="0.48" stop-color="#ff3579"/><stop offset="0.544" stop-color="#ff1c5d"/><stop offset="0.601" stop-color="#ff0d4c"/><stop offset="0.668" stop-color="#ff003d"/><stop offset="0.811" stop-color="#ff0029"/><stop offset="1" stop-color="#ff001a"/></linearGradient><linearGradient id="u78" gradientUnits="userSpaceOnUse" x1="1376" x2="2168" y1="0" y2="0"><stop offset="0" stop-color="#00ffe0"/><stop offset="0.116" stop-color="#0ff"/><stop offset="0.218" stop-color="#00dcff"/><stop offset="0.283" stop-color="#71c4ff"/><stop offset="0.357" stop-color="#ffa4fe"/><stop offset="0.372" stop-color="#ff8de2"/><stop offset="0.39" stop-color="#ff77c9"/><stop offset="0.432" stop-color="#ff519d"/><stop offset="0.484" stop-color="#ff337a"/><stop offset="0.548" stop-color="#ff1a5e"/><stop offset="0.667" stop-color="#ff003f"/><stop offset="0.811" stop-color="#ff002a"/><stop offset="1" stop-color="#ff001b"/></linearGradient><linearGradient id="u79" gradientUnits="userSpaceOnUse" x1="1377" x2="2166" y1="0" y2="0"><stop offset="0" stop-color="#00ffe4"/><stop offset="0.1" stop-color="#0ff"/><stop offset="0.219" stop-color="#01d7ff"/><stop offset="0.286" stop-color="#75beff"/><stop offset="0.36" stop-color="#ff9ffe"/><stop offset="0.376" stop-color="#ff87e1"/><stop offset="0.394" stop-color="#ff72c8"/><stop offset="0.436" stop-color="#ff4e9d"/><stop offset="0.488" stop-color="#ff307a"/><stop offset="0.551" stop-color="#ff195f"/><stop offset="0.665" stop-color="#ff0041"/><stop offset="0.81" stop-color="#ff002c"/><stop offset="1" stop-color="#ff001c"/></linearGradient><linearGradient id="u80" gradientUnits="userSpaceOnUse" x1="1378" x2="2164" y1="0" y2="0"><stop offset="0" stop-color="#00ffe8"/><stop offset="0.084" stop-color="#0ff"/><stop offset="0.219" stop-color="#00d3ff"/><stop offset="0.288" stop-color="#75b9ff"/><stop offset="0.363" stop-color="#ff9afe"/><stop offset="0.378" stop-color="#ff84e3"/><stop offset="0.396" stop-color="#ff70ca"/><stop offset="0.438" stop-color="#ff4c9f"/><stop offset="0.49" stop-color="#ff2f7c"/><stop offset="0.553" stop-color="#ff1860"/><stop offset="0.664" stop-color="#ff0043"/><stop offset="0.809" stop-color="#ff002d"/><stop offset="1" stop-color="#ff001d"/></linearGradient><linearGradient id="u81" gradientUnits="userSpaceOnUse" x1="1379" x2="2162" y1="0" y2="0"><stop offset="0" stop-color="#00ffed"/><stop offset="0.068" stop-color="#0ff"/><stop offset="0.218" stop-color="#00ceff"/><stop offset="0.287" stop-color="#73b5ff"/><stop offset="0.365" stop-color="#ff95fe"/><stop offset="0.382" stop-color="#ff7fe2"/><stop offset="0.4" stop-color="#ff6bc9"/><stop offset="0.442" stop-color="#ff499f"/><stop offset="0.493" stop-color="#ff2e7d"/><stop offset="0.557" stop-color="#ff1761"/><stop offset="0.663" stop-color="#ff0045"/><stop offset="0.807" stop-color="#ff002e"/><stop offset="1" stop-color="#ff001e"/></linearGradient><linearGradient id="u82" gradientUnits="userSpaceOnUse" x1="1379" x2="2160" y1="0" y2="0"><stop offset="0" stop-color="#00fff1"/><stop offset="0.052" stop-color="#0ff"/><stop offset="0.22" stop-color="#01caff"/><stop offset="0.292" stop-color="#77b0ff"/><stop offset="0.369" stop-color="#ff91fe"/><stop offset="0.385" stop-color="#ff7be2"/><stop offset="0.403" stop-color="#ff68ca"/><stop offset="0.446" stop-color="#ff46a0"/><stop offset="0.497" stop-color="#ff2c7e"/><stop offset="0.561" stop-color="#ff1662"/><stop offset="0.662" stop-color="#ff0047"/><stop offset="0.807" stop-color="#ff0030"/><stop offset="1" stop-color="#ff001e"/></linearGradient><linearGradient id="u83" gradientUnits="userSpaceOnUse" x1="1380" x2="2158" y1="0" y2="0"><stop offset="0" stop-color="#00fff5"/><stop offset="0.036" stop-color="#0ff"/><stop offset="0.22" stop-color="#00c6ff"/><stop offset="0.293" stop-color="#76abff"/><stop offset="0.371" stop-color="#ff8cfe"/><stop offset="0.388" stop-color="#ff77e2"/><stop offset="0.406" stop-color="#ff64ca"/><stop offset="0.449" stop-color="#ff44a1"/><stop offset="0.5" stop-color="#ff2a7f"/><stop offset="0.564" stop-color="#ff1563"/><stop offset="0.661" stop-color="#ff0049"/><stop offset="0.806" stop-color="#ff0031"/><stop offset="1" stop-color="#ff001f"/></linearGradient><linearGradient id="u84" gradientUnits="userSpaceOnUse" x1="1381" x2="2156" y1="0" y2="0"><stop offset="0" stop-color="#00fffa"/><stop offset="0.026" stop-color="#00fdff"/><stop offset="0.219" stop-color="#00c2ff"/><stop offset="0.292" stop-color="#72a8ff"/><stop offset="0.374" stop-color="#ff88fe"/><stop offset="0.391" stop-color="#ff73e3"/><stop offset="0.409" stop-color="#ff61cb"/><stop offset="0.452" stop-color="#ff42a2"/><stop offset="0.503" stop-color="#ff2980"/><stop offset="0.566" stop-color="#ff1465"/><stop offset="0.659" stop-color="#ff004b"/><stop offset="0.805" stop-color="#f03"/><stop offset="1" stop-color="#ff0020"/></linearGradient><linearGradient id="u85" gradientUnits="userSpaceOnUse" x1="1382" x2="2155" y1="0" y2="0"><stop offset="0" stop-color="#00fffe"/><stop offset="0.22" stop-color="#01bdff"/><stop offset="0.295" stop-color="#76a3ff"/><stop offset="0.376" stop-color="#ff84fe"/><stop offset="0.393" stop-color="#ff70e3"/><stop offset="0.411" stop-color="#ff5ecc"/><stop offset="0.454" stop-color="#ff40a3"/><stop offset="0.506" stop-color="#ff2781"/><stop offset="0.569" stop-color="#ff1366"/><stop offset="0.657" stop-color="#ff004d"/><stop offset="0.803" stop-color="#ff0034"/><stop offset="1" stop-color="#ff0021"/></linearGradient><linearGradient id="u86" gradientUnits="userSpaceOnUse" x1="1382" x2="2153" y1="0" y2="0"><stop offset="0" stop-color="#00fcff"/><stop offset="0.22" stop-color="#00baff"/><stop offset="0.297" stop-color="#769fff"/><stop offset="0.38" stop-color="#ff7ffe"/><stop offset="0.415" stop-color="#ff5bcc"/><stop offset="0.458" stop-color="#ff3ea3"/><stop offset="0.51" stop-color="#ff2582"/><stop offset="0.573" stop-color="#ff1167"/><stop offset="0.656" stop-color="#ff004f"/><stop offset="0.803" stop-color="#ff0035"/><stop offset="1" stop-color="#f02"/></linearGradient><linearGradient id="u87" gradientUnits="userSpaceOnUse" x1="1383" x2="2151" y1="0" y2="0"><stop offset="0" stop-color="#00f7ff"/><stop offset="0.22" stop-color="#00b6ff"/><stop offset="0.297" stop-color="#739cff"/><stop offset="0.383" stop-color="#ff7bfe"/><stop offset="0.418" stop-color="#ff58cd"/><stop offset="0.461" stop-color="#ff3ba4"/><stop offset="0.513" stop-color="#ff2483"/><stop offset="0.577" stop-color="#ff1068"/><stop offset="0.655" stop-color="#ff0051"/><stop offset="0.747" stop-color="#ff003f"/><stop offset="0.862" stop-color="#ff0030"/><stop offset="1" stop-color="#ff0023"/></linearGradient><linearGradient id="u88" gradientUnits="userSpaceOnUse" x1="1384" x2="2149" y1="0" y2="0"><stop offset="0" stop-color="#00f3ff"/><stop offset="0.221" stop-color="#01b2ff"/><stop offset="0.301" stop-color="#7797ff"/><stop offset="0.386" stop-color="#ff77fe"/><stop offset="0.421" stop-color="#ff55cd"/><stop offset="0.464" stop-color="#ff39a5"/><stop offset="0.516" stop-color="#ff2284"/><stop offset="0.579" stop-color="#ff0f69"/><stop offset="0.654" stop-color="#ff0053"/><stop offset="0.749" stop-color="#ff0040"/><stop offset="0.863" stop-color="#ff0031"/><stop offset="1" stop-color="#ff0024"/></linearGradient><linearGradient id="u89" gradientUnits="userSpaceOnUse" x1="1385" x2="2147" y1="0" y2="0"><stop offset="0" stop-color="#00efff"/><stop offset="0.22" stop-color="#00afff"/><stop offset="0.302" stop-color="#7793ff"/><stop offset="0.388" stop-color="#ff74fe"/><stop offset="0.424" stop-color="#ff53ce"/><stop offset="0.467" stop-color="#ff37a6"/><stop offset="0.52" stop-color="#ff2185"/><stop offset="0.583" stop-color="#ff0e6a"/><stop offset="0.652" stop-color="#f05"/><stop offset="0.752" stop-color="#ff0041"/><stop offset="0.864" stop-color="#ff0032"/><stop offset="1" stop-color="#ff0025"/></linearGradient><linearGradient id="u90" gradientUnits="userSpaceOnUse" x1="1386" x2="2145" y1="0" y2="0"><stop offset="0" stop-color="#00eaff"/><stop offset="0.22" stop-color="#00abff"/><stop offset="0.302" stop-color="#7590ff"/><stop offset="0.391" stop-color="#ff70fe"/><stop offset="0.427" stop-color="#ff50ce"/><stop offset="0.47" stop-color="#ff35a7"/><stop offset="0.522" stop-color="#ff2086"/><stop offset="0.585" stop-color="#ff0d6b"/><stop offset="0.651" stop-color="#ff0057"/><stop offset="0.754" stop-color="#ff0042"/><stop offset="0.866" stop-color="#f03"/><stop offset="1" stop-color="#ff0026"/></linearGradient><linearGradient id="u91" gradientUnits="userSpaceOnUse" x1="1386" x2="2143" y1="0" y2="0"><stop offset="0" stop-color="#00e7ff"/><stop offset="0.222" stop-color="#01a8ff"/><stop offset="0.306" stop-color="#788cff"/><stop offset="0.395" stop-color="#ff6cfe"/><stop offset="0.431" stop-color="#ff4dcf"/><stop offset="0.474" stop-color="#ff33a7"/><stop offset="0.526" stop-color="#ff1e87"/><stop offset="0.589" stop-color="#ff0c6c"/><stop offset="0.65" stop-color="#ff005a"/><stop offset="0.757" stop-color="#ff0043"/><stop offset="0.867" stop-color="#ff0034"/><stop offset="1" stop-color="#ff0027"/></linearGradient><linearGradient id="u92" gradientUnits="userSpaceOnUse" x1="1387" x2="2141" y1="0" y2="0"><stop offset="0" stop-color="#00e3ff"/><stop offset="0.221" stop-color="#00a4ff"/><stop offset="0.308" stop-color="#7889ff"/><stop offset="0.398" stop-color="#ff69fe"/><stop offset="0.434" stop-color="#ff4bcf"/><stop offset="0.477" stop-color="#ff31a8"/><stop offset="0.529" stop-color="#ff1d88"/><stop offset="0.592" stop-color="#ff0b6e"/><stop offset="0.649" stop-color="#ff005c"/><stop offset="0.759" stop-color="#ff0045"/><stop offset="0.869" stop-color="#ff0035"/><stop offset="1" stop-color="#ff0028"/></linearGradient><linearGradient id="u93" gradientUnits="userSpaceOnUse" x1="1388" x2="2139" y1="0" y2="0"><stop offset="0" stop-color="#00dfff"/><stop offset="0.221" stop-color="#00a1ff"/><stop offset="0.308" stop-color="#7686ff"/><stop offset="0.401" stop-color="#ff65fe"/><stop offset="0.437" stop-color="#ff48d0"/><stop offset="0.481" stop-color="#ff2fa9"/><stop offset="0.533" stop-color="#ff1b89"/><stop offset="0.595" stop-color="#ff0a6e"/><stop offset="0.648" stop-color="#ff005e"/><stop offset="0.76" stop-color="#ff0046"/><stop offset="0.87" stop-color="#ff0036"/><stop offset="1" stop-color="#ff0029"/></linearGradient><linearGradient id="u94" gradientUnits="userSpaceOnUse" x1="1389" x2="2137" y1="0" y2="0"><stop offset="0" stop-color="#00dbff"/><stop offset="0.221" stop-color="#009eff"/><stop offset="0.306" stop-color="#7284ff"/><stop offset="0.404" stop-color="#ff62fe"/><stop offset="0.44" stop-color="#ff46d0"/><stop offset="0.484" stop-color="#ff2daa"/><stop offset="0.536" stop-color="#ff1a8a"/><stop offset="0.598" stop-color="#ff0a70"/><stop offset="0.647" stop-color="#ff0060"/><stop offset="0.762" stop-color="#ff0047"/><stop offset="0.87" stop-color="#ff0037"/><stop offset="1" stop-color="#ff002b"/></linearGradient><linearGradient id="u95" gradientUnits="userSpaceOnUse" x1="1389" x2="2135" y1="0" y2="0"><stop offset="0" stop-color="#00d8ff"/><stop offset="0.223" stop-color="#009bff"/><stop offset="0.312" stop-color="#777fff"/><stop offset="0.408" stop-color="#ff5ffe"/><stop offset="0.444" stop-color="#ff43d1"/><stop offset="0.488" stop-color="#ff2caa"/><stop offset="0.54" stop-color="#ff188b"/><stop offset="0.602" stop-color="#ff0871"/><stop offset="0.646" stop-color="#ff0063"/><stop offset="0.765" stop-color="#ff0048"/><stop offset="0.873" stop-color="#ff0038"/><stop offset="1" stop-color="#ff002c"/></linearGradient><linearGradient id="u96" gradientUnits="userSpaceOnUse" x1="1390" x2="2133" y1="0" y2="0"><stop offset="0" stop-color="#00d4ff"/><stop offset="0.222" stop-color="#0098ff"/><stop offset="0.314" stop-color="#777cff"/><stop offset="0.41" stop-color="#ff5bfe"/><stop offset="0.447" stop-color="#ff41d1"/><stop offset="0.49" stop-color="#ff2aac"/><stop offset="0.542" stop-color="#ff178c"/><stop offset="0.604" stop-color="#ff0872"/><stop offset="0.645" stop-color="#ff0065"/><stop offset="0.767" stop-color="#ff0049"/><stop offset="0.873" stop-color="#ff003a"/><stop offset="1" stop-color="#ff002d"/></linearGradient><linearGradient id="u97" gradientUnits="userSpaceOnUse" x1="1391" x2="2131" y1="0" y2="0"><stop offset="0" stop-color="#00d1ff"/><stop offset="0.222" stop-color="#0095ff"/><stop offset="0.312" stop-color="#737aff"/><stop offset="0.414" stop-color="#ff58fe"/><stop offset="0.45" stop-color="#ff3ed2"/><stop offset="0.493" stop-color="#ff29ad"/><stop offset="0.546" stop-color="#ff168d"/><stop offset="0.608" stop-color="#ff0773"/><stop offset="0.643" stop-color="#ff0067"/><stop offset="0.77" stop-color="#ff004a"/><stop offset="1" stop-color="#ff002e"/></linearGradient><linearGradient id="u98" gradientUnits="userSpaceOnUse" x1="1392" x2="2129" y1="0" y2="0"><stop offset="0" stop-color="#00cdff"/><stop offset="0.223" stop-color="#0092ff"/><stop offset="0.318" stop-color="#7876ff"/><stop offset="0.417" stop-color="#ff55fe"/><stop offset="0.453" stop-color="#ff3cd2"/><stop offset="0.497" stop-color="#ff27ae"/><stop offset="0.548" stop-color="#ff158f"/><stop offset="0.611" stop-color="#ff0674"/><stop offset="0.642" stop-color="#ff006a"/><stop offset="0.772" stop-color="#ff004b"/><stop offset="1" stop-color="#ff002f"/></linearGradient><linearGradient id="u99" gradientUnits="userSpaceOnUse" x1="1393" x2="2127" y1="0" y2="0"><stop offset="0" stop-color="#00caff"/><stop offset="0.222" stop-color="#0090ff"/><stop offset="0.319" stop-color="#7873ff"/><stop offset="0.42" stop-color="#ff52fe"/><stop offset="0.456" stop-color="#ff3ad3"/><stop offset="0.5" stop-color="#ff25ae"/><stop offset="0.552" stop-color="#ff148f"/><stop offset="0.614" stop-color="#ff0575"/><stop offset="0.64" stop-color="#ff006c"/><stop offset="0.775" stop-color="#ff004c"/><stop offset="1" stop-color="#ff0030"/></linearGradient><linearGradient id="u100" gradientUnits="userSpaceOnUse" x1="1394" x2="2125" y1="0" y2="0"><stop offset="0" stop-color="#00c7ff"/><stop offset="0.222" stop-color="#008dff"/><stop offset="0.317" stop-color="#7471ff"/><stop offset="0.423" stop-color="#ff4ffe"/><stop offset="0.46" stop-color="#ff37d3"/><stop offset="0.503" stop-color="#ff23af"/><stop offset="0.555" stop-color="#ff1290"/><stop offset="0.617" stop-color="#ff0476"/><stop offset="0.639" stop-color="#ff006f"/><stop offset="0.776" stop-color="#ff004e"/><stop offset="1" stop-color="#ff0031"/></linearGradient><linearGradient id="u101" gradientUnits="userSpaceOnUse" x1="1394" x2="2123" y1="0" y2="0"><stop offset="0" stop-color="#00c4ff"/><stop offset="0.224" stop-color="#008aff"/><stop offset="0.324" stop-color="#796dff"/><stop offset="0.427" stop-color="#ff4cfe"/><stop offset="0.464" stop-color="#ff35d4"/><stop offset="0.508" stop-color="#ff22b0"/><stop offset="0.56" stop-color="#ff1191"/><stop offset="0.62" stop-color="#ff0377"/><stop offset="0.693" stop-color="#ff0062"/><stop offset="0.778" stop-color="#ff004f"/><stop offset="1" stop-color="#ff0032"/></linearGradient><linearGradient id="u102" gradientUnits="userSpaceOnUse" x1="1395" x2="2122" y1="0" y2="0"><stop offset="0" stop-color="#00c0ff"/><stop offset="0.223" stop-color="#08f"/><stop offset="0.323" stop-color="#776bff"/><stop offset="0.429" stop-color="#ff4afe"/><stop offset="0.466" stop-color="#ff33d4"/><stop offset="0.51" stop-color="#ff20b0"/><stop offset="0.563" stop-color="#ff1092"/><stop offset="0.623" stop-color="#ff0278"/><stop offset="0.695" stop-color="#ff0063"/><stop offset="0.78" stop-color="#ff0050"/><stop offset="1" stop-color="#f03"/></linearGradient><linearGradient id="u103" gradientUnits="userSpaceOnUse" x1="1396" x2="2120" y1="0" y2="0"><stop offset="0" stop-color="#00bdff"/><stop offset="0.222" stop-color="#0085ff"/><stop offset="0.323" stop-color="#7569ff"/><stop offset="0.432" stop-color="#ff47fe"/><stop offset="0.47" stop-color="#ff31d4"/><stop offset="0.514" stop-color="#ff1eb1"/><stop offset="0.565" stop-color="#ff0f93"/><stop offset="0.626" stop-color="#ff017a"/><stop offset="0.698" stop-color="#ff0064"/><stop offset="0.782" stop-color="#ff0051"/><stop offset="1" stop-color="#ff0034"/></linearGradient><linearGradient id="u104" gradientUnits="userSpaceOnUse" x1="1397" x2="2118" y1="0" y2="0"><stop offset="0" stop-color="#00baff"/><stop offset="0.223" stop-color="#0083ff"/><stop offset="0.327" stop-color="#7865ff"/><stop offset="0.436" stop-color="#ff44fe"/><stop offset="0.473" stop-color="#ff2fd5"/><stop offset="0.517" stop-color="#ff1db1"/><stop offset="0.569" stop-color="#ff0e94"/><stop offset="0.63" stop-color="#ff007a"/><stop offset="0.7" stop-color="#ff0065"/><stop offset="0.785" stop-color="#ff0052"/><stop offset="1" stop-color="#ff0035"/></linearGradient><linearGradient id="u105" gradientUnits="userSpaceOnUse" x1="1398" x2="2116" y1="0" y2="0"><stop offset="0" stop-color="#00b7ff"/><stop offset="0.223" stop-color="#0080ff"/><stop offset="0.329" stop-color="#7863ff"/><stop offset="0.439" stop-color="#ff42fe"/><stop offset="0.476" stop-color="#ff2dd5"/><stop offset="0.519" stop-color="#ff1cb3"/><stop offset="0.571" stop-color="#ff0d95"/><stop offset="0.632" stop-color="#ff007c"/><stop offset="0.703" stop-color="#f06"/><stop offset="0.787" stop-color="#ff0054"/><stop offset="1" stop-color="#ff0037"/></linearGradient><linearGradient id="u106" gradientUnits="userSpaceOnUse" x1="1399" x2="2114" y1="0" y2="0"><stop offset="0" stop-color="#00b4ff"/><stop offset="0.222" stop-color="#007eff"/><stop offset="0.327" stop-color="#7461ff"/><stop offset="0.442" stop-color="#ff3ffe"/><stop offset="0.48" stop-color="#ff2bd6"/><stop offset="0.523" stop-color="#ff1ab4"/><stop offset="0.575" stop-color="#ff0b96"/><stop offset="0.635" stop-color="#ff007d"/><stop offset="0.706" stop-color="#ff0067"/><stop offset="0.789" stop-color="#f05"/><stop offset="1" stop-color="#ff0038"/></linearGradient><linearGradient id="u107" gradientUnits="userSpaceOnUse" x1="1399" x2="2112" y1="0" y2="0"><stop offset="0" stop-color="#00b2ff"/><stop offset="0.224" stop-color="#007bff"/><stop offset="0.334" stop-color="#795eff"/><stop offset="0.446" stop-color="#ff3cfe"/><stop offset="0.484" stop-color="#ff29d6"/><stop offset="0.527" stop-color="#ff19b4"/><stop offset="0.579" stop-color="#ff0a97"/><stop offset="0.64" stop-color="#ff007e"/><stop offset="0.71" stop-color="#ff0068"/><stop offset="0.792" stop-color="#ff0056"/><stop offset="1" stop-color="#ff0039"/></linearGradient><linearGradient id="u108" gradientUnits="userSpaceOnUse" x1="1400" x2="2110" y1="0" y2="0"><stop offset="0" stop-color="#00afff"/><stop offset="0.224" stop-color="#0079ff"/><stop offset="0.335" stop-color="#795bff"/><stop offset="0.449" stop-color="#ff3afe"/><stop offset="0.487" stop-color="#ff27d6"/><stop offset="0.531" stop-color="#ff17b5"/><stop offset="0.582" stop-color="#ff0998"/><stop offset="0.642" stop-color="#ff007f"/><stop offset="0.713" stop-color="#ff0069"/><stop offset="0.794" stop-color="#ff0057"/><stop offset="1" stop-color="#ff003a"/></linearGradient><linearGradient id="u109" gradientUnits="userSpaceOnUse" x1="1401" x2="2108" y1="0" y2="0"><stop offset="0" stop-color="#00acff"/><stop offset="0.223" stop-color="#07f"/><stop offset="0.334" stop-color="#755aff"/><stop offset="0.453" stop-color="#ff38fe"/><stop offset="0.491" stop-color="#ff25d7"/><stop offset="0.535" stop-color="#ff15b5"/><stop offset="0.586" stop-color="#ff0899"/><stop offset="0.625" stop-color="#ff0087"/><stop offset="0.645" stop-color="#ff0080"/><stop offset="0.714" stop-color="#ff006b"/><stop offset="0.795" stop-color="#ff0059"/><stop offset="1" stop-color="#ff003b"/></linearGradient><linearGradient id="u110" gradientUnits="userSpaceOnUse" x1="1402" x2="2106" y1="0" y2="0"><stop offset="0" stop-color="#00a9ff"/><stop offset="0.224" stop-color="#0075ff"/><stop offset="0.339" stop-color="#7a57ff"/><stop offset="0.456" stop-color="#ff35fe"/><stop offset="0.493" stop-color="#ff24d8"/><stop offset="0.537" stop-color="#ff14b7"/><stop offset="0.578" stop-color="#ff099f"/><stop offset="0.624" stop-color="#ff008a"/><stop offset="0.648" stop-color="#ff0081"/><stop offset="0.717" stop-color="#ff006c"/><stop offset="0.797" stop-color="#ff005a"/><stop offset="1" stop-color="#ff003c"/></linearGradient><linearGradient id="u111" gradientUnits="userSpaceOnUse" x1="1403" x2="2104" y1="0" y2="0"><stop offset="0" stop-color="#00a7ff"/><stop offset="0.224" stop-color="#0073ff"/><stop offset="0.341" stop-color="#7a54ff"/><stop offset="0.459" stop-color="#ff33fe"/><stop offset="0.496" stop-color="#ff22d9"/><stop offset="0.541" stop-color="#ff13b7"/><stop offset="0.622" stop-color="#ff008d"/><stop offset="0.652" stop-color="#ff0082"/><stop offset="0.72" stop-color="#ff006d"/><stop offset="0.8" stop-color="#ff005b"/><stop offset="1" stop-color="#ff003e"/></linearGradient><linearGradient id="u112" gradientUnits="userSpaceOnUse" x1="1404" x2="2102" y1="0" y2="0"><stop offset="0" stop-color="#00a4ff"/><stop offset="0.223" stop-color="#0071ff"/><stop offset="0.34" stop-color="#7653ff"/><stop offset="0.463" stop-color="#ff31fe"/><stop offset="0.5" stop-color="#ff20d9"/><stop offset="0.544" stop-color="#ff12b8"/><stop offset="0.62" stop-color="#ff0090"/><stop offset="0.655" stop-color="#ff0083"/><stop offset="0.723" stop-color="#ff006e"/><stop offset="0.802" stop-color="#ff005c"/><stop offset="1" stop-color="#ff003f"/></linearGradient><linearGradient id="u113" gradientUnits="userSpaceOnUse" x1="1405" x2="2100" y1="0" y2="0"><stop offset="0" stop-color="#00a1ff"/><stop offset="0.224" stop-color="#006fff"/><stop offset="0.344" stop-color="#7950ff"/><stop offset="0.466" stop-color="#ff2efe"/><stop offset="0.504" stop-color="#ff1ed9"/><stop offset="0.548" stop-color="#ff10b8"/><stop offset="0.619" stop-color="#ff0094"/><stop offset="0.658" stop-color="#ff0084"/><stop offset="0.725" stop-color="#ff006f"/><stop offset="0.804" stop-color="#ff005d"/><stop offset="1" stop-color="#ff0040"/></linearGradient><linearGradient id="u114" gradientUnits="userSpaceOnUse" x1="1406" x2="2098" y1="0" y2="0"><stop offset="0" stop-color="#009fff"/><stop offset="0.224" stop-color="#006dff"/><stop offset="0.345" stop-color="#794eff"/><stop offset="0.47" stop-color="#ff2cfe"/><stop offset="0.507" stop-color="#ff1dda"/><stop offset="0.552" stop-color="#ff0fb9"/><stop offset="0.617" stop-color="#ff0097"/><stop offset="0.66" stop-color="#ff0086"/><stop offset="0.728" stop-color="#ff0071"/><stop offset="0.806" stop-color="#ff005e"/><stop offset="1" stop-color="#ff0041"/></linearGradient><linearGradient id="u115" gradientUnits="userSpaceOnUse" x1="1406" x2="2096" y1="0" y2="0"><stop offset="0" stop-color="#009dff"/><stop offset="0.225" stop-color="#006bff"/><stop offset="0.346" stop-color="#774dff"/><stop offset="0.474" stop-color="#ff2afe"/><stop offset="0.512" stop-color="#ff1bda"/><stop offset="0.555" stop-color="#ff0eba"/><stop offset="0.616" stop-color="#ff009a"/><stop offset="0.664" stop-color="#ff0087"/><stop offset="0.73" stop-color="#ff0072"/><stop offset="0.809" stop-color="#ff0060"/><stop offset="1" stop-color="#ff0043"/></linearGradient><linearGradient id="u116" gradientUnits="userSpaceOnUse" x1="1407" x2="2094" y1="0" y2="0"><stop offset="0" stop-color="#009aff"/><stop offset="0.226" stop-color="#0169ff"/><stop offset="0.351" stop-color="#7a4aff"/><stop offset="0.477" stop-color="#ff28fe"/><stop offset="0.515" stop-color="#ff19da"/><stop offset="0.559" stop-color="#ff0cbb"/><stop offset="0.614" stop-color="#ff009d"/><stop offset="0.667" stop-color="#f08"/><stop offset="0.734" stop-color="#ff0073"/><stop offset="0.811" stop-color="#ff0061"/><stop offset="1" stop-color="#f04"/></linearGradient><linearGradient id="u117" gradientUnits="userSpaceOnUse" x1="1408" x2="2092" y1="0" y2="0"><stop offset="0" stop-color="#0098ff"/><stop offset="0.225" stop-color="#0067ff"/><stop offset="0.352" stop-color="#7a48ff"/><stop offset="0.481" stop-color="#ff26fe"/><stop offset="0.519" stop-color="#ff18db"/><stop offset="0.563" stop-color="#ff0bbb"/><stop offset="0.613" stop-color="#ff00a1"/><stop offset="0.671" stop-color="#ff0089"/><stop offset="0.737" stop-color="#ff0074"/><stop offset="0.813" stop-color="#ff0062"/><stop offset="1" stop-color="#ff0045"/></linearGradient><linearGradient id="u118" gradientUnits="userSpaceOnUse" x1="1409" x2="2091" y1="0" y2="0"><stop offset="0" stop-color="#0095ff"/><stop offset="0.224" stop-color="#0065ff"/><stop offset="0.352" stop-color="#7847ff"/><stop offset="0.484" stop-color="#ff24fe"/><stop offset="0.522" stop-color="#ff16db"/><stop offset="0.566" stop-color="#ff0abc"/><stop offset="0.611" stop-color="#ff00a3"/><stop offset="0.673" stop-color="#ff008a"/><stop offset="0.739" stop-color="#ff0075"/><stop offset="0.814" stop-color="#ff0064"/><stop offset="1" stop-color="#ff0046"/></linearGradient><linearGradient id="u119" gradientUnits="userSpaceOnUse" x1="1410" x2="2089" y1="0" y2="0"><stop offset="0" stop-color="#0093ff"/><stop offset="0.225" stop-color="#0163ff"/><stop offset="0.356" stop-color="#7b44ff"/><stop offset="0.487" stop-color="#ff22fe"/><stop offset="0.526" stop-color="#ff14db"/><stop offset="0.568" stop-color="#ff09bd"/><stop offset="0.61" stop-color="#ff00a7"/><stop offset="0.676" stop-color="#ff008b"/><stop offset="0.741" stop-color="#f07"/><stop offset="0.816" stop-color="#ff0065"/><stop offset="1" stop-color="#ff0048"/></linearGradient><linearGradient id="u120" gradientUnits="userSpaceOnUse" x1="1411" x2="2087" y1="0" y2="0"><stop offset="0" stop-color="#0091ff"/><stop offset="0.225" stop-color="#0061ff"/><stop offset="0.358" stop-color="#7a42ff"/><stop offset="0.491" stop-color="#ff20ff"/><stop offset="0.53" stop-color="#ff13dc"/><stop offset="0.572" stop-color="#ff07be"/><stop offset="0.608" stop-color="#f0a"/><stop offset="0.679" stop-color="#ff008c"/><stop offset="0.744" stop-color="#ff0078"/><stop offset="0.818" stop-color="#f06"/><stop offset="1" stop-color="#ff0049"/></linearGradient><linearGradient id="u121" gradientUnits="userSpaceOnUse" x1="1412" x2="2085" y1="0" y2="0"><stop offset="0" stop-color="#008fff"/><stop offset="0.224" stop-color="#0060ff"/><stop offset="0.358" stop-color="#7941ff"/><stop offset="0.495" stop-color="#ff1eff"/><stop offset="0.533" stop-color="#ff11dc"/><stop offset="0.577" stop-color="#ff06be"/><stop offset="0.606" stop-color="#ff00ae"/><stop offset="0.682" stop-color="#ff008d"/><stop offset="0.82" stop-color="#ff0067"/><stop offset="1" stop-color="#ff004a"/></linearGradient><linearGradient id="u122" gradientUnits="userSpaceOnUse" x1="1413" x2="2083" y1="0" y2="0"><stop offset="0" stop-color="#008cff"/><stop offset="0.225" stop-color="#015eff"/><stop offset="0.361" stop-color="#7a3fff"/><stop offset="0.499" stop-color="#ff1cff"/><stop offset="0.536" stop-color="#ff10dd"/><stop offset="0.579" stop-color="#ff05c0"/><stop offset="0.604" stop-color="#ff00b1"/><stop offset="0.685" stop-color="#ff008e"/><stop offset="0.822" stop-color="#ff0069"/><stop offset="1" stop-color="#ff004c"/></linearGradient><linearGradient id="u123" gradientUnits="userSpaceOnUse" x1="1414" x2="2081" y1="0" y2="0"><stop offset="0" stop-color="#008aff"/><stop offset="0.225" stop-color="#005cff"/><stop offset="0.363" stop-color="#7a3dff"/><stop offset="0.502" stop-color="#ff1bff"/><stop offset="0.54" stop-color="#ff0fde"/><stop offset="0.583" stop-color="#ff04c0"/><stop offset="0.603" stop-color="#ff00b5"/><stop offset="0.688" stop-color="#ff0090"/><stop offset="0.825" stop-color="#ff006a"/><stop offset="1" stop-color="#ff004d"/></linearGradient><linearGradient id="u124" gradientUnits="userSpaceOnUse" x1="1415" x2="2079" y1="0" y2="0"><stop offset="0" stop-color="#08f"/><stop offset="0.224" stop-color="#005bff"/><stop offset="0.363" stop-color="#783cff"/><stop offset="0.506" stop-color="#ff19ff"/><stop offset="0.544" stop-color="#ff0dde"/><stop offset="0.587" stop-color="#ff03c0"/><stop offset="0.636" stop-color="#ff00a7"/><stop offset="0.691" stop-color="#ff0091"/><stop offset="0.827" stop-color="#ff006b"/><stop offset="1" stop-color="#ff004e"/></linearGradient><linearGradient id="u125" gradientUnits="userSpaceOnUse" x1="1416" x2="2077" y1="0" y2="0"><stop offset="0" stop-color="#0086ff"/><stop offset="0.225" stop-color="#0159ff"/><stop offset="0.368" stop-color="#7b39ff"/><stop offset="0.51" stop-color="#ff17ff"/><stop offset="0.548" stop-color="#ff0cde"/><stop offset="0.59" stop-color="#ff02c2"/><stop offset="0.638" stop-color="#ff00a9"/><stop offset="0.694" stop-color="#ff0092"/><stop offset="0.828" stop-color="#ff006d"/><stop offset="1" stop-color="#ff0050"/></linearGradient><linearGradient id="u126" gradientUnits="userSpaceOnUse" x1="1417" x2="2075" y1="0" y2="0"><stop offset="0" stop-color="#0084ff"/><stop offset="0.225" stop-color="#0057ff"/><stop offset="0.369" stop-color="#7a38ff"/><stop offset="0.514" stop-color="#ff15ff"/><stop offset="0.552" stop-color="#ff0ade"/><stop offset="0.594" stop-color="#ff01c2"/><stop offset="0.643" stop-color="#ff00a9"/><stop offset="0.698" stop-color="#ff0093"/><stop offset="0.83" stop-color="#ff006e"/><stop offset="1" stop-color="#ff0051"/></linearGradient><linearGradient id="u127" gradientUnits="userSpaceOnUse" x1="1418" x2="2073" y1="0" y2="0"><stop offset="0" stop-color="#0082ff"/><stop offset="0.224" stop-color="#0056ff"/><stop offset="0.369" stop-color="#7936ff"/><stop offset="0.518" stop-color="#ff14ff"/><stop offset="0.556" stop-color="#ff09df"/><stop offset="0.598" stop-color="#ff00c3"/><stop offset="0.646" stop-color="#f0a"/><stop offset="0.701" stop-color="#ff0094"/><stop offset="0.832" stop-color="#ff006f"/><stop offset="1" stop-color="#ff0052"/></linearGradient><linearGradient id="u128" gradientUnits="userSpaceOnUse" x1="1419" x2="2071" y1="0" y2="0"><stop offset="0" stop-color="#0080ff"/><stop offset="0.225" stop-color="#0154ff"/><stop offset="0.374" stop-color="#7b34ff"/><stop offset="0.521" stop-color="#ff12ff"/><stop offset="0.558" stop-color="#ff08e0"/><stop offset="0.601" stop-color="#ff00c4"/><stop offset="0.649" stop-color="#ff00ac"/><stop offset="0.704" stop-color="#ff0095"/><stop offset="0.834" stop-color="#ff0071"/><stop offset="1" stop-color="#ff0054"/></linearGradient><linearGradient id="u129" gradientUnits="userSpaceOnUse" x1="1420" x2="2069" y1="0" y2="0"><stop offset="0" stop-color="#007eff"/><stop offset="0.225" stop-color="#0053ff"/><stop offset="0.376" stop-color="#7b33ff"/><stop offset="0.525" stop-color="#ff10ff"/><stop offset="0.562" stop-color="#ff06e0"/><stop offset="0.606" stop-color="#ff00c4"/><stop offset="0.653" stop-color="#ff00ac"/><stop offset="0.707" stop-color="#ff0096"/><stop offset="0.837" stop-color="#ff0072"/><stop offset="1" stop-color="#f05"/></linearGradient><linearGradient id="u130" gradientUnits="userSpaceOnUse" x1="1421" x2="2067" y1="0" y2="0"><stop offset="0" stop-color="#007cff"/><stop offset="0.224" stop-color="#0051ff"/><stop offset="0.376" stop-color="#7a31ff"/><stop offset="0.529" stop-color="#ff0fff"/><stop offset="0.59" stop-color="#ff00d1"/><stop offset="0.61" stop-color="#ff00c5"/><stop offset="0.658" stop-color="#ff00ad"/><stop offset="0.711" stop-color="#ff0097"/><stop offset="0.839" stop-color="#ff0073"/><stop offset="1" stop-color="#ff0057"/></linearGradient><linearGradient id="u131" gradientUnits="userSpaceOnUse" x1="1422" x2="2065" y1="0" y2="0"><stop offset="0" stop-color="#007aff"/><stop offset="0.226" stop-color="#0150ff"/><stop offset="0.379" stop-color="#7b30ff"/><stop offset="0.533" stop-color="#ff0dff"/><stop offset="0.588" stop-color="#ff00d5"/><stop offset="0.613" stop-color="#ff00c6"/><stop offset="0.661" stop-color="#ff00ae"/><stop offset="0.714" stop-color="#f09"/><stop offset="0.84" stop-color="#ff0075"/><stop offset="1" stop-color="#ff0058"/></linearGradient><linearGradient id="u132" gradientUnits="userSpaceOnUse" x1="1423" x2="2063" y1="0" y2="0"><stop offset="0" stop-color="#0078ff"/><stop offset="0.225" stop-color="#004eff"/><stop offset="0.381" stop-color="#7a2eff"/><stop offset="0.537" stop-color="#ff0bff"/><stop offset="0.586" stop-color="#ff00da"/><stop offset="0.617" stop-color="#ff00c6"/><stop offset="0.664" stop-color="#ff00af"/><stop offset="0.717" stop-color="#ff009a"/><stop offset="0.842" stop-color="#ff0076"/><stop offset="1" stop-color="#ff0059"/></linearGradient><linearGradient id="u133" gradientUnits="userSpaceOnUse" x1="1424" x2="2061" y1="0" y2="0"><stop offset="0" stop-color="#0076ff"/><stop offset="0.224" stop-color="#004dff"/><stop offset="0.383" stop-color="#7a2dff"/><stop offset="0.542" stop-color="#ff0aff"/><stop offset="0.584" stop-color="#ff00de"/><stop offset="0.622" stop-color="#ff00c7"/><stop offset="0.721" stop-color="#ff009b"/><stop offset="0.845" stop-color="#f07"/><stop offset="1" stop-color="#ff005b"/></linearGradient><linearGradient id="u134" gradientUnits="userSpaceOnUse" x1="1425" x2="2059" y1="0" y2="0"><stop offset="0" stop-color="#0074ff"/><stop offset="0.226" stop-color="#014bff"/><stop offset="0.386" stop-color="#7b2bff"/><stop offset="0.546" stop-color="#ff08ff"/><stop offset="0.582" stop-color="#ff00e3"/><stop offset="0.625" stop-color="#ff00c8"/><stop offset="0.724" stop-color="#ff009c"/><stop offset="0.847" stop-color="#ff0079"/><stop offset="1" stop-color="#ff005c"/></linearGradient><linearGradient id="u135" gradientUnits="userSpaceOnUse" x1="1426" x2="2058" y1="0" y2="0"><stop offset="0" stop-color="#0073ff"/><stop offset="0.225" stop-color="#004aff"/><stop offset="0.388" stop-color="#7b2aff"/><stop offset="0.549" stop-color="#ff07ff"/><stop offset="0.579" stop-color="#ff00e7"/><stop offset="0.628" stop-color="#ff00c8"/><stop offset="0.726" stop-color="#ff009d"/><stop offset="0.848" stop-color="#ff007a"/><stop offset="1" stop-color="#ff005e"/></linearGradient><linearGradient id="u136" gradientUnits="userSpaceOnUse" x1="1427" x2="2056" y1="0" y2="0"><stop offset="0" stop-color="#0071ff"/><stop offset="0.224" stop-color="#0049ff"/><stop offset="0.39" stop-color="#7b28ff"/><stop offset="0.553" stop-color="#ff05ff"/><stop offset="0.577" stop-color="#ff00ec"/><stop offset="0.633" stop-color="#ff00c9"/><stop offset="0.73" stop-color="#ff009e"/><stop offset="0.851" stop-color="#ff007b"/><stop offset="1" stop-color="#ff005f"/></linearGradient><linearGradient id="u137" gradientUnits="userSpaceOnUse" x1="1428" x2="2054" y1="0" y2="0"><stop offset="0" stop-color="#006fff"/><stop offset="0.225" stop-color="#0147ff"/><stop offset="0.393" stop-color="#7c27ff"/><stop offset="0.558" stop-color="#ff04ff"/><stop offset="0.577" stop-color="#ff00f0"/><stop offset="0.636" stop-color="#ff00ca"/><stop offset="0.733" stop-color="#ff009f"/><stop offset="0.853" stop-color="#ff007d"/><stop offset="1" stop-color="#ff0061"/></linearGradient><linearGradient id="u138" gradientUnits="userSpaceOnUse" x1="1429" x2="2052" y1="0" y2="0"><stop offset="0" stop-color="#006dff"/><stop offset="0.225" stop-color="#0046ff"/><stop offset="0.395" stop-color="#7c25ff"/><stop offset="0.562" stop-color="#ff03ff"/><stop offset="0.599" stop-color="#ff00e3"/><stop offset="0.64" stop-color="#ff00ca"/><stop offset="0.737" stop-color="#ff00a0"/><stop offset="0.856" stop-color="#ff007e"/><stop offset="1" stop-color="#ff0062"/></linearGradient><linearGradient id="u139" gradientUnits="userSpaceOnUse" x1="1430" x2="2050" y1="0" y2="0"><stop offset="0" stop-color="#006cff"/><stop offset="0.224" stop-color="#0045ff"/><stop offset="0.397" stop-color="#7b24ff"/><stop offset="0.566" stop-color="#ff01ff"/><stop offset="0.603" stop-color="#ff00e4"/><stop offset="0.644" stop-color="#f0c"/><stop offset="0.739" stop-color="#ff00a2"/><stop offset="0.856" stop-color="#ff0080"/><stop offset="1" stop-color="#ff0064"/></linearGradient><linearGradient id="u140" gradientUnits="userSpaceOnUse" x1="1431" x2="2048" y1="0" y2="0"><stop offset="0" stop-color="#006aff"/><stop offset="0.225" stop-color="#0143ff"/><stop offset="0.399" stop-color="#7b23ff"/><stop offset="0.571" stop-color="#f0f"/><stop offset="0.608" stop-color="#ff00e4"/><stop offset="0.648" stop-color="#f0c"/><stop offset="0.742" stop-color="#ff00a3"/><stop offset="0.859" stop-color="#ff0081"/><stop offset="1" stop-color="#ff0065"/></linearGradient><linearGradient id="u141" gradientUnits="userSpaceOnUse" x1="1432" x2="2046" y1="0" y2="0"><stop offset="0" stop-color="#0068ff"/><stop offset="0.225" stop-color="#0042ff"/><stop offset="0.401" stop-color="#7b22ff"/><stop offset="0.575" stop-color="#f0f"/><stop offset="0.651" stop-color="#ff00cd"/><stop offset="0.746" stop-color="#ff00a4"/><stop offset="0.86" stop-color="#ff0083"/><stop offset="1" stop-color="#ff0067"/></linearGradient><linearGradient id="u142" gradientUnits="userSpaceOnUse" x1="1433" x2="2044" y1="0" y2="0"><stop offset="0" stop-color="#0067ff"/><stop offset="0.224" stop-color="#0041ff"/><stop offset="0.403" stop-color="#7b20ff"/><stop offset="0.565" stop-color="#f400ff"/><stop offset="0.579" stop-color="#f0f"/><stop offset="0.656" stop-color="#ff00cd"/><stop offset="0.75" stop-color="#ff00a5"/><stop offset="0.863" stop-color="#ff0084"/><stop offset="1" stop-color="#ff0069"/></linearGradient><linearGradient id="u143" gradientUnits="userSpaceOnUse" x1="1434" x2="2042" y1="0" y2="0"><stop offset="0" stop-color="#0065ff"/><stop offset="0.225" stop-color="#0140ff"/><stop offset="0.406" stop-color="#7c1fff"/><stop offset="0.562" stop-color="#ef00ff"/><stop offset="0.584" stop-color="#f0f"/><stop offset="0.66" stop-color="#ff00cf"/><stop offset="0.752" stop-color="#ff00a7"/><stop offset="0.863" stop-color="#ff0086"/><stop offset="1" stop-color="#ff006a"/></linearGradient><linearGradient id="u144" gradientUnits="userSpaceOnUse" x1="1435" x2="2040" y1="0" y2="0"><stop offset="0" stop-color="#0064ff"/><stop offset="0.225" stop-color="#003fff"/><stop offset="0.408" stop-color="#7c1eff"/><stop offset="0.56" stop-color="#ea00ff"/><stop offset="0.588" stop-color="#f0f"/><stop offset="0.664" stop-color="#ff00cf"/><stop offset="0.755" stop-color="#ff00a8"/><stop offset="0.866" stop-color="#ff0087"/><stop offset="1" stop-color="#ff006c"/></linearGradient><linearGradient id="u145" gradientUnits="userSpaceOnUse" x1="1436" x2="2038" y1="0" y2="0"><stop offset="0" stop-color="#0062ff"/><stop offset="0.224" stop-color="#003eff"/><stop offset="0.394" stop-color="#7020ff"/><stop offset="0.558" stop-color="#e500ff"/><stop offset="0.593" stop-color="#f0f"/><stop offset="0.668" stop-color="#ff00d0"/><stop offset="0.759" stop-color="#ff00a9"/><stop offset="0.869" stop-color="#f08"/><stop offset="1" stop-color="#ff006d"/></linearGradient><linearGradient id="u146" gradientUnits="userSpaceOnUse" x1="1437" x2="2036" y1="0" y2="0"><stop offset="0" stop-color="#0060ff"/><stop offset="0.224" stop-color="#003cff"/><stop offset="0.389" stop-color="#6b20ff"/><stop offset="0.556" stop-color="#e100ff"/><stop offset="0.598" stop-color="#f0f"/><stop offset="0.673" stop-color="#ff00d0"/><stop offset="0.763" stop-color="#f0a"/><stop offset="0.871" stop-color="#ff008a"/><stop offset="1" stop-color="#ff006f"/></linearGradient><linearGradient id="u147" gradientUnits="userSpaceOnUse" x1="1438" x2="2034" y1="0" y2="0"><stop offset="0" stop-color="#005fff"/><stop offset="0.225" stop-color="#003bff"/><stop offset="0.393" stop-color="#6c1eff"/><stop offset="0.554" stop-color="#dc00ff"/><stop offset="0.602" stop-color="#f0f"/><stop offset="0.676" stop-color="#ff00d2"/><stop offset="0.765" stop-color="#ff00ab"/><stop offset="0.872" stop-color="#ff008b"/><stop offset="1" stop-color="#ff0071"/></linearGradient><linearGradient id="u148" gradientUnits="userSpaceOnUse" x1="1439" x2="2032" y1="0" y2="0"><stop offset="0" stop-color="#005dff"/><stop offset="0.224" stop-color="#003aff"/><stop offset="0.391" stop-color="#6a1eff"/><stop offset="0.553" stop-color="#d900ff"/><stop offset="0.607" stop-color="#f0f"/><stop offset="0.681" stop-color="#ff00d2"/><stop offset="0.769" stop-color="#ff00ac"/><stop offset="0.874" stop-color="#ff008d"/><stop offset="1" stop-color="#ff0073"/></linearGradient><linearGradient id="u149" gradientUnits="userSpaceOnUse" x1="1440" x2="2030" y1="0" y2="0"><stop offset="0" stop-color="#005cff"/><stop offset="0.224" stop-color="#0039ff"/><stop offset="0.386" stop-color="#661eff"/><stop offset="0.551" stop-color="#d400ff"/><stop offset="0.612" stop-color="#f0f"/><stop offset="0.685" stop-color="#ff00d3"/><stop offset="0.773" stop-color="#ff00ae"/><stop offset="0.876" stop-color="#ff008e"/><stop offset="1" stop-color="#ff0074"/></linearGradient><linearGradient id="u150" gradientUnits="userSpaceOnUse" x1="1442" x2="2028" y1="0" y2="0"><stop offset="0" stop-color="#005aff"/><stop offset="0.224" stop-color="#0038ff"/><stop offset="0.389" stop-color="#671cff"/><stop offset="0.548" stop-color="#d000ff"/><stop offset="0.616" stop-color="#f0f"/><stop offset="0.689" stop-color="#ff00d3"/><stop offset="0.776" stop-color="#ff00af"/><stop offset="0.879" stop-color="#ff0090"/><stop offset="1" stop-color="#ff0076"/></linearGradient><linearGradient id="u151" gradientUnits="userSpaceOnUse" x1="1443" x2="2026" y1="0" y2="0"><stop offset="0" stop-color="#0059ff"/><stop offset="0.223" stop-color="#0037ff"/><stop offset="0.388" stop-color="#651cff"/><stop offset="0.545" stop-color="#cb00ff"/><stop offset="0.621" stop-color="#f0f"/><stop offset="0.693" stop-color="#ff00d4"/><stop offset="0.779" stop-color="#ff00b0"/><stop offset="0.88" stop-color="#ff0092"/><stop offset="1" stop-color="#ff0078"/></linearGradient><linearGradient id="u152" gradientUnits="userSpaceOnUse" x1="1444" x2="2025" y1="0" y2="0"><stop offset="0" stop-color="#0057ff"/><stop offset="0.222" stop-color="#0036ff"/><stop offset="0.382" stop-color="#601cff"/><stop offset="0.542" stop-color="#c700ff"/><stop offset="0.625" stop-color="#f0f"/><stop offset="0.697" stop-color="#ff00d5"/><stop offset="0.781" stop-color="#ff00b1"/><stop offset="0.881" stop-color="#ff0093"/><stop offset="1" stop-color="#ff0079"/></linearGradient><linearGradient id="u153" gradientUnits="userSpaceOnUse" x1="1445" x2="2023" y1="0" y2="0"><stop offset="0" stop-color="#0056ff"/><stop offset="0.223" stop-color="#0035ff"/><stop offset="0.384" stop-color="#601bff"/><stop offset="0.54" stop-color="#c300ff"/><stop offset="0.63" stop-color="#f0f"/><stop offset="0.701" stop-color="#ff00d6"/><stop offset="0.785" stop-color="#ff00b2"/><stop offset="0.884" stop-color="#ff0094"/><stop offset="1" stop-color="#ff007b"/></linearGradient><linearGradient id="u154" gradientUnits="userSpaceOnUse" x1="1446" x2="2021" y1="0" y2="0"><stop offset="0" stop-color="#05f"/><stop offset="0.223" stop-color="#0034ff"/><stop offset="0.383" stop-color="#5e1aff"/><stop offset="0.537" stop-color="#bf00ff"/><stop offset="0.635" stop-color="#f0f"/><stop offset="0.706" stop-color="#ff00d6"/><stop offset="0.788" stop-color="#ff00b4"/><stop offset="0.885" stop-color="#ff0096"/><stop offset="1" stop-color="#ff007d"/></linearGradient><linearGradient id="u155" gradientUnits="userSpaceOnUse" x1="1447" x2="2019" y1="0" y2="0"><stop offset="0" stop-color="#0053ff"/><stop offset="0.222" stop-color="#03f"/><stop offset="0.378" stop-color="#5a1aff"/><stop offset="0.535" stop-color="#b0f"/><stop offset="0.64" stop-color="#f0f"/><stop offset="0.71" stop-color="#ff00d7"/><stop offset="0.792" stop-color="#ff00b5"/><stop offset="0.888" stop-color="#ff0098"/><stop offset="1" stop-color="#ff007f"/></linearGradient><linearGradient id="u156" gradientUnits="userSpaceOnUse" x1="1448" x2="2017" y1="0" y2="0"><stop offset="0" stop-color="#0052ff"/><stop offset="0.223" stop-color="#0032ff"/><stop offset="0.38" stop-color="#5a19ff"/><stop offset="0.533" stop-color="#b700ff"/><stop offset="0.645" stop-color="#f0f"/><stop offset="0.715" stop-color="#ff00d7"/><stop offset="0.796" stop-color="#ff00b6"/><stop offset="0.891" stop-color="#f09"/><stop offset="1" stop-color="#ff0080"/></linearGradient><linearGradient id="u157" gradientUnits="userSpaceOnUse" x1="1449" x2="2015" y1="0" y2="0"><stop offset="0" stop-color="#0051ff"/><stop offset="0.223" stop-color="#0031ff"/><stop offset="0.378" stop-color="#5819ff"/><stop offset="0.53" stop-color="#b300ff"/><stop offset="0.65" stop-color="#f0f"/><stop offset="0.719" stop-color="#ff00d8"/><stop offset="0.799" stop-color="#ff00b8"/><stop offset="0.892" stop-color="#ff009b"/><stop offset="1" stop-color="#ff0082"/></linearGradient><linearGradient id="u158" gradientUnits="userSpaceOnUse" x1="1450" x2="2013" y1="0" y2="0"><stop offset="0" stop-color="#004fff"/><stop offset="0.222" stop-color="#0030ff"/><stop offset="0.375" stop-color="#5519ff"/><stop offset="0.528" stop-color="#af00ff"/><stop offset="0.655" stop-color="#f0f"/><stop offset="0.723" stop-color="#ff00da"/><stop offset="0.803" stop-color="#ff00b9"/><stop offset="0.893" stop-color="#ff009d"/><stop offset="1" stop-color="#ff0084"/></linearGradient><linearGradient id="u159" gradientUnits="userSpaceOnUse" x1="1452" x2="2011" y1="0" y2="0"><stop offset="0" stop-color="#004eff"/><stop offset="0.222" stop-color="#002fff"/><stop offset="0.524" stop-color="#ac00ff"/><stop offset="0.66" stop-color="#f0f"/><stop offset="0.728" stop-color="#ff00da"/><stop offset="0.805" stop-color="#ff00ba"/><stop offset="0.896" stop-color="#ff009e"/><stop offset="1" stop-color="#ff0086"/></linearGradient><linearGradient id="u160" gradientUnits="userSpaceOnUse" x1="1453" x2="2009" y1="0" y2="0"><stop offset="0" stop-color="#004dff"/><stop offset="0.221" stop-color="#002eff"/><stop offset="0.522" stop-color="#a800ff"/><stop offset="0.665" stop-color="#f0f"/><stop offset="0.732" stop-color="#ff00db"/><stop offset="0.809" stop-color="#f0b"/><stop offset="0.897" stop-color="#ff00a0"/><stop offset="1" stop-color="#f08"/></linearGradient><linearGradient id="u161" gradientUnits="userSpaceOnUse" x1="1454" x2="2007" y1="0" y2="0"><stop offset="0" stop-color="#004bff"/><stop offset="0.221" stop-color="#002dff"/><stop offset="0.519" stop-color="#a400ff"/><stop offset="0.671" stop-color="#f0f"/><stop offset="0.738" stop-color="#ff00db"/><stop offset="0.814" stop-color="#ff00bc"/><stop offset="0.901" stop-color="#ff00a1"/><stop offset="1" stop-color="#ff008a"/></linearGradient><linearGradient id="u162" gradientUnits="userSpaceOnUse" x1="1455" x2="2005" y1="0" y2="0"><stop offset="0" stop-color="#004aff"/><stop offset="0.222" stop-color="#002cff"/><stop offset="0.516" stop-color="#a100ff"/><stop offset="0.676" stop-color="#f0f"/><stop offset="0.742" stop-color="#ff00dc"/><stop offset="0.816" stop-color="#ff00be"/><stop offset="0.902" stop-color="#ff00a3"/><stop offset="1" stop-color="#ff008c"/></linearGradient><linearGradient id="u163" gradientUnits="userSpaceOnUse" x1="1456" x2="2003" y1="0" y2="0"><stop offset="0" stop-color="#0049ff"/><stop offset="0.221" stop-color="#002bff"/><stop offset="0.514" stop-color="#9d00ff"/><stop offset="0.682" stop-color="#f0f"/><stop offset="0.748" stop-color="#ff00dc"/><stop offset="0.821" stop-color="#ff00bf"/><stop offset="0.905" stop-color="#ff00a5"/><stop offset="1" stop-color="#ff008e"/></linearGradient><linearGradient id="u164" gradientUnits="userSpaceOnUse" x1="1457" x2="2001" y1="0" y2="0"><stop offset="0" stop-color="#0048ff"/><stop offset="0.221" stop-color="#002aff"/><stop offset="0.511" stop-color="#9a00ff"/><stop offset="0.688" stop-color="#f0f"/><stop offset="0.752" stop-color="#f0d"/><stop offset="0.824" stop-color="#ff00c0"/><stop offset="0.906" stop-color="#ff00a6"/><stop offset="1" stop-color="#ff0090"/></linearGradient><linearGradient id="u165" gradientUnits="userSpaceOnUse" x1="1459" x2="1999" y1="0" y2="0"><stop offset="0" stop-color="#0046ff"/><stop offset="0.22" stop-color="#0029ff"/><stop offset="0.509" stop-color="#9700ff"/><stop offset="0.693" stop-color="#f0f"/><stop offset="0.756" stop-color="#ff00de"/><stop offset="0.828" stop-color="#ff00c1"/><stop offset="0.909" stop-color="#ff00a8"/><stop offset="1" stop-color="#ff0092"/></linearGradient><linearGradient id="u166" gradientUnits="userSpaceOnUse" x1="1460" x2="1997" y1="0" y2="0"><stop offset="0" stop-color="#0045ff"/><stop offset="0.22" stop-color="#0028ff"/><stop offset="0.507" stop-color="#9400ff"/><stop offset="0.698" stop-color="#f0f"/><stop offset="0.76" stop-color="#ff00df"/><stop offset="0.831" stop-color="#ff00c3"/><stop offset="0.911" stop-color="#f0a"/><stop offset="1" stop-color="#ff0094"/></linearGradient><linearGradient id="u167" gradientUnits="userSpaceOnUse" x1="1461" x2="1995" y1="0" y2="0"><stop offset="0" stop-color="#04f"/><stop offset="0.219" stop-color="#0028ff"/><stop offset="0.504" stop-color="#9000ff"/><stop offset="0.704" stop-color="#f0f"/><stop offset="0.766" stop-color="#ff00e0"/><stop offset="0.835" stop-color="#ff00c4"/><stop offset="0.912" stop-color="#ff00ac"/><stop offset="1" stop-color="#ff0096"/></linearGradient><linearGradient id="u168" gradientUnits="userSpaceOnUse" x1="1462" x2="1993" y1="0" y2="0"><stop offset="0" stop-color="#0043ff"/><stop offset="0.22" stop-color="#0127ff"/><stop offset="0.501" stop-color="#8d00ff"/><stop offset="0.71" stop-color="#f0f"/><stop offset="0.77" stop-color="#ff00e1"/><stop offset="0.838" stop-color="#ff00c6"/><stop offset="0.915" stop-color="#ff00ad"/><stop offset="1" stop-color="#ff0098"/></linearGradient><linearGradient id="u169" gradientUnits="userSpaceOnUse" x1="1463" x2="1992" y1="0" y2="0"><stop offset="0" stop-color="#0042ff"/><stop offset="0.219" stop-color="#0026ff"/><stop offset="0.497" stop-color="#8a00ff"/><stop offset="0.715" stop-color="#f0f"/><stop offset="0.775" stop-color="#ff00e1"/><stop offset="0.841" stop-color="#ff00c7"/><stop offset="0.917" stop-color="#ff00af"/><stop offset="1" stop-color="#ff009a"/></linearGradient><linearGradient id="u170" gradientUnits="userSpaceOnUse" x1="1464" x2="1990" y1="0" y2="0"><stop offset="0" stop-color="#0040ff"/><stop offset="0.219" stop-color="#0025ff"/><stop offset="0.494" stop-color="#8700ff"/><stop offset="0.721" stop-color="#f0f"/><stop offset="0.779" stop-color="#ff00e2"/><stop offset="0.844" stop-color="#ff00c8"/><stop offset="1" stop-color="#ff009c"/></linearGradient><linearGradient id="u171" gradientUnits="userSpaceOnUse" x1="1466" x2="1988" y1="0" y2="0"><stop offset="0" stop-color="#003fff"/><stop offset="0.218" stop-color="#0124ff"/><stop offset="0.49" stop-color="#8400ff"/><stop offset="0.726" stop-color="#f0f"/><stop offset="0.784" stop-color="#ff00e3"/><stop offset="0.849" stop-color="#ff00c9"/><stop offset="1" stop-color="#ff009e"/></linearGradient><linearGradient id="u172" gradientUnits="userSpaceOnUse" x1="1467" x2="1986" y1="0" y2="0"><stop offset="0" stop-color="#003eff"/><stop offset="0.218" stop-color="#0023ff"/><stop offset="0.487" stop-color="#8100ff"/><stop offset="0.732" stop-color="#f0f"/><stop offset="0.788" stop-color="#ff00e4"/><stop offset="0.852" stop-color="#ff00cb"/><stop offset="1" stop-color="#ff00a0"/></linearGradient><linearGradient id="u173" gradientUnits="userSpaceOnUse" x1="1468" x2="1984" y1="0" y2="0"><stop offset="0" stop-color="#003dff"/><stop offset="0.217" stop-color="#0023ff"/><stop offset="0.484" stop-color="#7d00ff"/><stop offset="0.738" stop-color="#f0f"/><stop offset="0.795" stop-color="#ff00e4"/><stop offset="0.857" stop-color="#f0c"/><stop offset="1" stop-color="#ff00a2"/></linearGradient><linearGradient id="u174" gradientUnits="userSpaceOnUse" x1="1469" x2="1982" y1="0" y2="0"><stop offset="0" stop-color="#003cff"/><stop offset="0.218" stop-color="#0122ff"/><stop offset="0.481" stop-color="#7a00ff"/><stop offset="0.745" stop-color="#f0f"/><stop offset="0.86" stop-color="#ff00cd"/><stop offset="1" stop-color="#ff00a5"/></linearGradient><linearGradient id="u175" gradientUnits="userSpaceOnUse" x1="1470" x2="1980" y1="0" y2="0"><stop offset="0" stop-color="#003bff"/><stop offset="0.218" stop-color="#0021ff"/><stop offset="0.478" stop-color="#7800ff"/><stop offset="0.751" stop-color="#f0f"/><stop offset="0.863" stop-color="#ff00cf"/><stop offset="1" stop-color="#ff00a7"/></linearGradient><linearGradient id="u176" gradientUnits="userSpaceOnUse" x1="1471" x2="1978" y1="0" y2="0"><stop offset="0" stop-color="#003aff"/><stop offset="0.217" stop-color="#0020ff"/><stop offset="0.475" stop-color="#7500ff"/><stop offset="0.757" stop-color="#f0f"/><stop offset="0.868" stop-color="#ff00d0"/><stop offset="1" stop-color="#ff00a9"/></linearGradient><linearGradient id="u177" gradientUnits="userSpaceOnUse" x1="1473" x2="1976" y1="0" y2="0"><stop offset="0" stop-color="#0038ff"/><stop offset="0.217" stop-color="#011fff"/><stop offset="0.471" stop-color="#7200ff"/><stop offset="0.763" stop-color="#f0f"/><stop offset="0.871" stop-color="#ff00d2"/><stop offset="1" stop-color="#ff00ab"/></linearGradient><linearGradient id="u178" gradientUnits="userSpaceOnUse" x1="1474" x2="1974" y1="0" y2="0"><stop offset="0" stop-color="#0037ff"/><stop offset="0.216" stop-color="#001fff"/><stop offset="0.468" stop-color="#6f00ff"/><stop offset="0.77" stop-color="#f0f"/><stop offset="0.876" stop-color="#ff00d3"/><stop offset="1" stop-color="#ff00ae"/></linearGradient><linearGradient id="u179" gradientUnits="userSpaceOnUse" x1="1475" x2="1972" y1="0" y2="0"><stop offset="0" stop-color="#0036ff"/><stop offset="0.215" stop-color="#001eff"/><stop offset="0.465" stop-color="#6c00ff"/><stop offset="0.777" stop-color="#f0f"/><stop offset="0.879" stop-color="#ff00d4"/><stop offset="1" stop-color="#ff00b0"/></linearGradient><linearGradient id="u180" gradientUnits="userSpaceOnUse" x1="1476" x2="1970" y1="0" y2="0"><stop offset="0" stop-color="#0035ff"/><stop offset="0.217" stop-color="#011dff"/><stop offset="0.462" stop-color="#6900ff"/><stop offset="0.783" stop-color="#f0f"/><stop offset="0.883" stop-color="#ff00d6"/><stop offset="1" stop-color="#ff00b3"/></linearGradient><linearGradient id="u181" gradientUnits="userSpaceOnUse" x1="1477" x2="1968" y1="0" y2="0"><stop offset="0" stop-color="#0034ff"/><stop offset="0.216" stop-color="#001dff"/><stop offset="0.458" stop-color="#6700ff"/><stop offset="0.79" stop-color="#f0f"/><stop offset="0.888" stop-color="#ff00d7"/><stop offset="1" stop-color="#ff00b5"/></linearGradient><linearGradient id="u182" gradientUnits="userSpaceOnUse" x1="1479" x2="1966" y1="0" y2="0"><stop offset="0" stop-color="#03f"/><stop offset="0.214" stop-color="#001cff"/><stop offset="0.454" stop-color="#6400ff"/><stop offset="0.797" stop-color="#f0f"/><stop offset="0.891" stop-color="#ff00d8"/><stop offset="1" stop-color="#ff00b7"/></linearGradient><linearGradient id="u183" gradientUnits="userSpaceOnUse" x1="1480" x2="1964" y1="0" y2="0"><stop offset="0" stop-color="#0032ff"/><stop offset="0.215" stop-color="#011bff"/><stop offset="0.45" stop-color="#6100ff"/><stop offset="0.804" stop-color="#f0f"/><stop offset="0.895" stop-color="#ff00da"/><stop offset="1" stop-color="#ff00ba"/></linearGradient><linearGradient id="u184" gradientUnits="userSpaceOnUse" x1="1481" x2="1962" y1="0" y2="0"><stop offset="0" stop-color="#0031ff"/><stop offset="0.214" stop-color="#001aff"/><stop offset="0.449" stop-color="#6000ff"/><stop offset="0.811" stop-color="#f0f"/><stop offset="0.898" stop-color="#ff00dc"/><stop offset="1" stop-color="#ff00bc"/></linearGradient><linearGradient id="u185" gradientUnits="userSpaceOnUse" x1="1482" x2="1960" y1="0" y2="0"><stop offset="0" stop-color="#0030ff"/><stop offset="0.213" stop-color="#001aff"/><stop offset="0.446" stop-color="#5d00ff"/><stop offset="0.818" stop-color="#f0f"/><stop offset="0.904" stop-color="#f0d"/><stop offset="1" stop-color="#ff00bf"/></linearGradient><linearGradient id="u186" gradientUnits="userSpaceOnUse" x1="1484" x2="1959" y1="0" y2="0"><stop offset="0" stop-color="#002fff"/><stop offset="0.211" stop-color="#0019ff"/><stop offset="0.44" stop-color="#5a00ff"/><stop offset="0.823" stop-color="#f0f"/><stop offset="0.905" stop-color="#ff00de"/><stop offset="1" stop-color="#ff00c1"/></linearGradient><linearGradient id="u187" gradientUnits="userSpaceOnUse" x1="1485" x2="1957" y1="0" y2="0"><stop offset="0" stop-color="#002eff"/><stop offset="0.212" stop-color="#0018ff"/><stop offset="0.436" stop-color="#5800ff"/><stop offset="0.831" stop-color="#f0f"/><stop offset="0.911" stop-color="#ff00df"/><stop offset="1" stop-color="#ff00c3"/></linearGradient><linearGradient id="u188" gradientUnits="userSpaceOnUse" x1="1486" x2="1955" y1="0" y2="0"><stop offset="0" stop-color="#002dff"/><stop offset="0.211" stop-color="#0018ff"/><stop offset="0.433" stop-color="#50f"/><stop offset="0.838" stop-color="#f0f"/><stop offset="0.915" stop-color="#ff00e1"/><stop offset="1" stop-color="#ff00c6"/></linearGradient><linearGradient id="u189" gradientUnits="userSpaceOnUse" x1="1487" x2="1953" y1="0" y2="0"><stop offset="0" stop-color="#002cff"/><stop offset="0.21" stop-color="#0017ff"/><stop offset="0.429" stop-color="#5300ff"/><stop offset="0.845" stop-color="#f0f"/><stop offset="0.918" stop-color="#ff00e2"/><stop offset="1" stop-color="#ff00c9"/></linearGradient><linearGradient id="u190" gradientUnits="userSpaceOnUse" x1="1488" x2="1951" y1="0" y2="0"><stop offset="0" stop-color="#002cff"/><stop offset="0.212" stop-color="#0016ff"/><stop offset="0.425" stop-color="#5100ff"/><stop offset="0.853" stop-color="#f0f"/><stop offset="0.922" stop-color="#ff00e4"/><stop offset="1" stop-color="#ff00cb"/></linearGradient><linearGradient id="u191" gradientUnits="userSpaceOnUse" x1="1490" x2="1949" y1="0" y2="0"><stop offset="0" stop-color="#002bff"/><stop offset="0.209" stop-color="#0016ff"/><stop offset="0.42" stop-color="#4e00ff"/><stop offset="0.643" stop-color="#a500ff"/><stop offset="0.861" stop-color="#f0f"/><stop offset="1" stop-color="#ff00ce"/></linearGradient><linearGradient id="u192" gradientUnits="userSpaceOnUse" x1="1491" x2="1947" y1="0" y2="0"><stop offset="0" stop-color="#002aff"/><stop offset="0.208" stop-color="#0015ff"/><stop offset="0.417" stop-color="#4c00ff"/><stop offset="0.645" stop-color="#a400ff"/><stop offset="0.868" stop-color="#f0f"/><stop offset="1" stop-color="#ff00d1"/></linearGradient><linearGradient id="u193" gradientUnits="userSpaceOnUse" x1="1492" x2="1945" y1="0" y2="0"><stop offset="0" stop-color="#0029ff"/><stop offset="0.21" stop-color="#0015ff"/><stop offset="0.413" stop-color="#4a00ff"/><stop offset="0.649" stop-color="#a300ff"/><stop offset="0.876" stop-color="#f0f"/><stop offset="1" stop-color="#ff00d4"/></linearGradient><linearGradient id="u194" gradientUnits="userSpaceOnUse" x1="1493" x2="1943" y1="0" y2="0"><stop offset="0" stop-color="#0028ff"/><stop offset="0.209" stop-color="#0014ff"/><stop offset="0.409" stop-color="#4700ff"/><stop offset="0.651" stop-color="#a200ff"/><stop offset="0.884" stop-color="#f0f"/><stop offset="1" stop-color="#ff00d7"/></linearGradient><linearGradient id="u195" gradientUnits="userSpaceOnUse" x1="1495" x2="1941" y1="0" y2="0"><stop offset="0" stop-color="#0027ff"/><stop offset="0.206" stop-color="#0013ff"/><stop offset="0.404" stop-color="#4500ff"/><stop offset="0.652" stop-color="#a100ff"/><stop offset="0.892" stop-color="#f0f"/><stop offset="1" stop-color="#ff00d9"/></linearGradient><linearGradient id="u196" gradientUnits="userSpaceOnUse" x1="1496" x2="1939" y1="0" y2="0"><stop offset="0" stop-color="#0026ff"/><stop offset="0.208" stop-color="#0013ff"/><stop offset="0.4" stop-color="#4300ff"/><stop offset="0.655" stop-color="#a000ff"/><stop offset="0.901" stop-color="#f0f"/><stop offset="1" stop-color="#ff00dc"/></linearGradient><linearGradient id="u197" gradientUnits="userSpaceOnUse" x1="1497" x2="1937" y1="0" y2="0"><stop offset="0" stop-color="#0025ff"/><stop offset="0.207" stop-color="#0012ff"/><stop offset="0.395" stop-color="#4000ff"/><stop offset="0.657" stop-color="#9e00ff"/><stop offset="0.909" stop-color="#f0f"/><stop offset="1" stop-color="#ff00df"/></linearGradient><linearGradient id="u198" gradientUnits="userSpaceOnUse" x1="1498" x2="1935" y1="0" y2="0"><stop offset="0" stop-color="#0024ff"/><stop offset="0.206" stop-color="#0012ff"/><stop offset="0.391" stop-color="#3e00ff"/><stop offset="0.659" stop-color="#9d00ff"/><stop offset="0.918" stop-color="#f0f"/><stop offset="1" stop-color="#ff00e2"/></linearGradient><linearGradient id="u199" gradientUnits="userSpaceOnUse" x1="1500" x2="1933" y1="0" y2="0"><stop offset="0" stop-color="#0023ff"/><stop offset="0.206" stop-color="#01f"/><stop offset="0.386" stop-color="#3c00ff"/><stop offset="0.661" stop-color="#9c00ff"/><stop offset="0.926" stop-color="#f0f"/><stop offset="1" stop-color="#ff00e5"/></linearGradient><linearGradient id="u200" gradientUnits="userSpaceOnUse" x1="1501" x2="1931" y1="0" y2="0"><stop offset="0" stop-color="#0023ff"/><stop offset="0.205" stop-color="#0010ff"/><stop offset="0.381" stop-color="#3a00ff"/><stop offset="0.663" stop-color="#9b00ff"/><stop offset="0.935" stop-color="#f0f"/><stop offset="1" stop-color="#ff00e8"/></linearGradient><linearGradient id="u201" gradientUnits="userSpaceOnUse" x1="1502" x2="1929" y1="0" y2="0"><stop offset="0" stop-color="#02f"/><stop offset="0.204" stop-color="#0010ff"/><stop offset="0.377" stop-color="#3800ff"/><stop offset="0.665" stop-color="#9a00ff"/><stop offset="0.944" stop-color="#f0f"/><stop offset="1" stop-color="#ff00ec"/></linearGradient><linearGradient id="u202" gradientUnits="userSpaceOnUse" x1="1504" x2="1927" y1="0" y2="0"><stop offset="0" stop-color="#0021ff"/><stop offset="0.203" stop-color="#000fff"/><stop offset="0.374" stop-color="#3700ff"/><stop offset="0.667" stop-color="#90f"/><stop offset="0.953" stop-color="#f0f"/><stop offset="1" stop-color="#ff00ef"/></linearGradient><linearGradient id="u203" gradientUnits="userSpaceOnUse" x1="1505" x2="1926" y1="0" y2="0"><stop offset="0" stop-color="#0020ff"/><stop offset="0.202" stop-color="#000fff"/><stop offset="0.368" stop-color="#3500ff"/><stop offset="0.67" stop-color="#9800ff"/><stop offset="0.96" stop-color="#f0f"/><stop offset="1" stop-color="#ff00f1"/></linearGradient><linearGradient id="u204" gradientUnits="userSpaceOnUse" x1="1506" x2="1924" y1="0" y2="0"><stop offset="0" stop-color="#001fff"/><stop offset="0.201" stop-color="#000eff"/><stop offset="0.364" stop-color="#3200ff"/><stop offset="0.672" stop-color="#9700ff"/><stop offset="0.969" stop-color="#f0f"/><stop offset="1" stop-color="#ff00f4"/></linearGradient><linearGradient id="u205" gradientUnits="userSpaceOnUse" x1="1507" x2="1922" y1="0" y2="0"><stop offset="0" stop-color="#001eff"/><stop offset="0.202" stop-color="#000dff"/><stop offset="0.359" stop-color="#3000ff"/><stop offset="0.675" stop-color="#9600ff"/><stop offset="0.978" stop-color="#f0f"/><stop offset="1" stop-color="#ff00f8"/></linearGradient><linearGradient id="u206" gradientUnits="userSpaceOnUse" x1="1509" x2="1920" y1="0" y2="0"><stop offset="0" stop-color="#001eff"/><stop offset="0.2" stop-color="#000dff"/><stop offset="0.353" stop-color="#2e00ff"/><stop offset="0.676" stop-color="#9500ff"/><stop offset="0.988" stop-color="#f0f"/><stop offset="1" stop-color="#ff00fb"/></linearGradient><linearGradient id="u207" gradientUnits="userSpaceOnUse" x1="1510" x2="1918" y1="0" y2="0"><stop offset="0" stop-color="#001dff"/><stop offset="0.199" stop-color="#000dff"/><stop offset="0.348" stop-color="#2d00ff"/><stop offset="0.664" stop-color="#8f00ff"/><stop offset="1" stop-color="#ff00fe"/></linearGradient><linearGradient id="u208" gradientUnits="userSpaceOnUse" x1="1511" x2="1916" y1="0" y2="0"><stop offset="0" stop-color="#001cff"/><stop offset="0.2" stop-color="#000cff"/><stop offset="0.343" stop-color="#2b00ff"/><stop offset="0.677" stop-color="#9100ff"/><stop offset="1" stop-color="#fc00ff"/></linearGradient><linearGradient id="u209" gradientUnits="userSpaceOnUse" x1="1513" x2="1914" y1="0" y2="0"><stop offset="0" stop-color="#001bff"/><stop offset="0.197" stop-color="#000bff"/><stop offset="0.337" stop-color="#2900ff"/><stop offset="0.673" stop-color="#8f00ff"/><stop offset="1" stop-color="#f900ff"/></linearGradient><linearGradient id="u210" gradientUnits="userSpaceOnUse" x1="1514" x2="1912" y1="0" y2="0"><stop offset="0" stop-color="#001aff"/><stop offset="0.196" stop-color="#000bff"/><stop offset="0.332" stop-color="#2700ff"/><stop offset="0.671" stop-color="#8c00ff"/><stop offset="1" stop-color="#f600ff"/></linearGradient><linearGradient id="u211" gradientUnits="userSpaceOnUse" x1="1515" x2="1910" y1="0" y2="0"><stop offset="0" stop-color="#001aff"/><stop offset="0.197" stop-color="#000aff"/><stop offset="0.327" stop-color="#2500ff"/><stop offset="0.668" stop-color="#8a00ff"/><stop offset="1" stop-color="#f200ff"/></linearGradient><linearGradient id="u212" gradientUnits="userSpaceOnUse" x1="1517" x2="1908" y1="0" y2="0"><stop offset="0" stop-color="#0019ff"/><stop offset="0.194" stop-color="#000aff"/><stop offset="0.32" stop-color="#2300ff"/><stop offset="0.665" stop-color="#8700ff"/><stop offset="1" stop-color="#ef00ff"/></linearGradient><linearGradient id="u213" gradientUnits="userSpaceOnUse" x1="1518" x2="1906" y1="0" y2="0"><stop offset="0" stop-color="#0018ff"/><stop offset="0.193" stop-color="#0009ff"/><stop offset="0.314" stop-color="#2100ff"/><stop offset="0.662" stop-color="#8500ff"/><stop offset="1" stop-color="#ec00ff"/></linearGradient><linearGradient id="u214" gradientUnits="userSpaceOnUse" x1="1519" x2="1904" y1="0" y2="0"><stop offset="0" stop-color="#0017ff"/><stop offset="0.195" stop-color="#0009ff"/><stop offset="0.309" stop-color="#1f00ff"/><stop offset="0.66" stop-color="#8200ff"/><stop offset="1" stop-color="#e900ff"/></linearGradient><linearGradient id="u215" gradientUnits="userSpaceOnUse" x1="1521" x2="1902" y1="0" y2="0"><stop offset="0" stop-color="#0016ff"/><stop offset="0.192" stop-color="#0008ff"/><stop offset="0.302" stop-color="#1e00ff"/><stop offset="0.656" stop-color="#8000ff"/><stop offset="1" stop-color="#e600ff"/></linearGradient><linearGradient id="u216" gradientUnits="userSpaceOnUse" x1="1522" x2="1900" y1="0" y2="0"><stop offset="0" stop-color="#0016ff"/><stop offset="0.19" stop-color="#0008ff"/><stop offset="0.296" stop-color="#1c00ff"/><stop offset="0.653" stop-color="#7d00ff"/><stop offset="1" stop-color="#e300ff"/></linearGradient><linearGradient id="u217" gradientUnits="userSpaceOnUse" x1="1524" x2="1898" y1="0" y2="0"><stop offset="0" stop-color="#0015ff"/><stop offset="0.19" stop-color="#0007ff"/><stop offset="0.289" stop-color="#1a00ff"/><stop offset="0.65" stop-color="#7b00ff"/><stop offset="1" stop-color="#e000ff"/></linearGradient><linearGradient id="u218" gradientUnits="userSpaceOnUse" x1="1525" x2="1896" y1="0" y2="0"><stop offset="0" stop-color="#0014ff"/><stop offset="0.189" stop-color="#0007ff"/><stop offset="0.283" stop-color="#1800ff"/><stop offset="0.647" stop-color="#7900ff"/><stop offset="1" stop-color="#d0f"/></linearGradient><linearGradient id="u219" gradientUnits="userSpaceOnUse" x1="1526" x2="1895" y1="0" y2="0"><stop offset="0" stop-color="#0014ff"/><stop offset="0.187" stop-color="#0006ff"/><stop offset="0.276" stop-color="#1700ff"/><stop offset="0.645" stop-color="#70f"/><stop offset="1" stop-color="#da00ff"/></linearGradient><linearGradient id="u220" gradientUnits="userSpaceOnUse" x1="1528" x2="1893" y1="0" y2="0"><stop offset="0" stop-color="#0013ff"/><stop offset="0.186" stop-color="#0106ff"/><stop offset="0.268" stop-color="#1500ff"/><stop offset="0.641" stop-color="#7500ff"/><stop offset="1" stop-color="#d700ff"/></linearGradient><linearGradient id="u221" gradientUnits="userSpaceOnUse" x1="1529" x2="1891" y1="0" y2="0"><stop offset="0" stop-color="#0012ff"/><stop offset="0.185" stop-color="#0005ff"/><stop offset="0.262" stop-color="#1300ff"/><stop offset="0.638" stop-color="#7300ff"/><stop offset="1" stop-color="#d500ff"/></linearGradient><linearGradient id="u222" gradientUnits="userSpaceOnUse" x1="1531" x2="1889" y1="0" y2="0"><stop offset="0" stop-color="#01f"/><stop offset="0.182" stop-color="#0005ff"/><stop offset="0.257" stop-color="#1200ff"/><stop offset="0.634" stop-color="#7000ff"/><stop offset="1" stop-color="#d200ff"/></linearGradient><linearGradient id="u223" gradientUnits="userSpaceOnUse" x1="1532" x2="1887" y1="0" y2="0"><stop offset="0" stop-color="#01f"/><stop offset="0.183" stop-color="#0104ff"/><stop offset="0.251" stop-color="#10f"/><stop offset="0.631" stop-color="#6e00ff"/><stop offset="1" stop-color="#cf00ff"/></linearGradient><linearGradient id="u224" gradientUnits="userSpaceOnUse" x1="1533" x2="1885" y1="0" y2="0"><stop offset="0" stop-color="#0010ff"/><stop offset="0.182" stop-color="#0004ff"/><stop offset="0.244" stop-color="#0f00ff"/><stop offset="0.628" stop-color="#6c00ff"/><stop offset="1" stop-color="#c0f"/></linearGradient><linearGradient id="u225" gradientUnits="userSpaceOnUse" x1="1535" x2="1883" y1="0" y2="0"><stop offset="0" stop-color="#000fff"/><stop offset="0.178" stop-color="#0004ff"/><stop offset="0.236" stop-color="#0d00ff"/><stop offset="0.624" stop-color="#6a00ff"/><stop offset="1" stop-color="#c900ff"/></linearGradient><linearGradient id="u226" gradientUnits="userSpaceOnUse" x1="1536" x2="1881" y1="0" y2="0"><stop offset="0" stop-color="#000fff"/><stop offset="0.18" stop-color="#0103ff"/><stop offset="0.229" stop-color="#0c00ff"/><stop offset="0.597" stop-color="#6200ff"/><stop offset="1" stop-color="#c700ff"/></linearGradient><linearGradient id="u227" gradientUnits="userSpaceOnUse" x1="1538" x2="1879" y1="0" y2="0"><stop offset="0" stop-color="#000eff"/><stop offset="0.176" stop-color="#0003ff"/><stop offset="0.595" stop-color="#6100ff"/><stop offset="1" stop-color="#c400ff"/></linearGradient><linearGradient id="u228" gradientUnits="userSpaceOnUse" x1="1539" x2="1877" y1="0" y2="0"><stop offset="0" stop-color="#000dff"/><stop offset="0.175" stop-color="#0002ff"/><stop offset="0.595" stop-color="#5f00ff"/><stop offset="1" stop-color="#c100ff"/></linearGradient><linearGradient id="u229" gradientUnits="userSpaceOnUse" x1="1541" x2="1875" y1="0" y2="0"><stop offset="0" stop-color="#000cff"/><stop offset="0.174" stop-color="#0102ff"/><stop offset="0.593" stop-color="#5e00ff"/><stop offset="1" stop-color="#be00ff"/></linearGradient><linearGradient id="u230" gradientUnits="userSpaceOnUse" x1="1542" x2="1873" y1="0" y2="0"><stop offset="0" stop-color="#000cff"/><stop offset="0.172" stop-color="#0001ff"/><stop offset="0.592" stop-color="#5d00ff"/><stop offset="1" stop-color="#bc00ff"/></linearGradient><linearGradient id="u231" gradientUnits="userSpaceOnUse" x1="1544" x2="1871" y1="0" y2="0"><stop offset="0" stop-color="#000bff"/><stop offset="0.168" stop-color="#0001ff"/><stop offset="0.59" stop-color="#5b00ff"/><stop offset="1" stop-color="#b900ff"/></linearGradient><linearGradient id="u232" gradientUnits="userSpaceOnUse" x1="1545" x2="1869" y1="0" y2="0"><stop offset="0" stop-color="#000aff"/><stop offset="0.17" stop-color="#0100ff"/><stop offset="0.593" stop-color="#5b00ff"/><stop offset="1" stop-color="#b700ff"/></linearGradient><linearGradient id="u233" gradientUnits="userSpaceOnUse" x1="1547" x2="1867" y1="0" y2="0"><stop offset="0" stop-color="#000aff"/><stop offset="0.166" stop-color="#00f"/><stop offset="0.588" stop-color="#5900ff"/><stop offset="1" stop-color="#b400ff"/></linearGradient><linearGradient id="u234" gradientUnits="userSpaceOnUse" x1="1548" x2="1865" y1="0" y2="0"><stop offset="0" stop-color="#0009ff"/><stop offset="0.164" stop-color="#00f"/><stop offset="0.587" stop-color="#5700ff"/><stop offset="1" stop-color="#b200ff"/></linearGradient><linearGradient id="u235" gradientUnits="userSpaceOnUse" x1="1550" x2="1863" y1="0" y2="0"><stop offset="0" stop-color="#0008ff"/><stop offset="0.16" stop-color="#00f"/><stop offset="0.585" stop-color="#5600ff"/><stop offset="1" stop-color="#af00ff"/></linearGradient><linearGradient id="u236" gradientUnits="userSpaceOnUse" x1="1551" x2="1862" y1="0" y2="0"><stop offset="0" stop-color="#0008ff"/><stop offset="0.161" stop-color="#00f"/><stop offset="1" stop-color="#ad00ff"/></linearGradient><linearGradient id="u237" gradientUnits="userSpaceOnUse" x1="1553" x2="1860" y1="0" y2="0"><stop offset="0" stop-color="#0007ff"/><stop offset="0.156" stop-color="#00f"/><stop offset="1" stop-color="#ab00ff"/></linearGradient><linearGradient id="u238" gradientUnits="userSpaceOnUse" x1="1554" x2="1858" y1="0" y2="0"><stop offset="0" stop-color="#0007ff"/><stop offset="0.155" stop-color="#00f"/><stop offset="1" stop-color="#a900ff"/></linearGradient><linearGradient id="u239" gradientUnits="userSpaceOnUse" x1="1556" x2="1856" y1="0" y2="0"><stop offset="0" stop-color="#0006ff"/><stop offset="0.153" stop-color="#00f"/><stop offset="1" stop-color="#a600ff"/></linearGradient><linearGradient id="u240" gradientUnits="userSpaceOnUse" x1="1557" x2="1854" y1="0" y2="0"><stop offset="0" stop-color="#0005ff"/><stop offset="0.152" stop-color="#00f"/><stop offset="1" stop-color="#a400ff"/></linearGradient><linearGradient id="u241" gradientUnits="userSpaceOnUse" x1="1559" x2="1852" y1="0" y2="0"><stop offset="0" stop-color="#0005ff"/><stop offset="0.147" stop-color="#00f"/><stop offset="1" stop-color="#a100ff"/></linearGradient><linearGradient id="u242" gradientUnits="userSpaceOnUse" x1="1560" x2="1850" y1="0" y2="0"><stop offset="0" stop-color="#0004ff"/><stop offset="0.148" stop-color="#00f"/><stop offset="1" stop-color="#9f00ff"/></linearGradient><linearGradient id="u243" gradientUnits="userSpaceOnUse" x1="1562" x2="1848" y1="0" y2="0"><stop offset="0" stop-color="#0003ff"/><stop offset="0.143" stop-color="#00f"/><stop offset="1" stop-color="#9d00ff"/></linearGradient><linearGradient id="u244" gradientUnits="userSpaceOnUse" x1="1564" x2="1846" y1="0" y2="0"><stop offset="0" stop-color="#0003ff"/><stop offset="0.138" stop-color="#00f"/><stop offset="1" stop-color="#9b00ff"/></linearGradient><linearGradient id="u245" gradientUnits="userSpaceOnUse" x1="1565" x2="1844" y1="0" y2="0"><stop offset="0" stop-color="#0002ff"/><stop offset="0.14" stop-color="#00f"/><stop offset="1" stop-color="#9800ff"/></linearGradient><linearGradient id="u246" gradientUnits="userSpaceOnUse" x1="1567" x2="1842" y1="0" y2="0"><stop offset="0" stop-color="#0001ff"/><stop offset="0.135" stop-color="#00f"/><stop offset="1" stop-color="#9600ff"/></linearGradient><linearGradient id="u247" gradientUnits="userSpaceOnUse" x1="1568" x2="1840" y1="0" y2="0"><stop offset="0" stop-color="#0001ff"/><stop offset="0.132" stop-color="#00f"/><stop offset="1" stop-color="#9400ff"/></linearGradient><linearGradient id="u248" gradientUnits="userSpaceOnUse" x1="1570" x2="1838" y1="0" y2="0"><stop offset="0" stop-color="#00f"/><stop offset="0.131" stop-color="#00f"/><stop offset="1" stop-color="#9200ff"/></linearGradient><linearGradient id="u249" gradientUnits="userSpaceOnUse" x1="1572" x2="1836" y1="0" y2="0"><stop offset="0" stop-color="#00f"/><stop offset="0.125" stop-color="#00f"/><stop offset="1" stop-color="#8f00ff"/></linearGradient><linearGradient id="u250" gradientUnits="userSpaceOnUse" x1="1573" x2="1834" y1="0" y2="0"><stop offset="0" stop-color="#00f"/><stop offset="0.123" stop-color="#00f"/><stop offset="1" stop-color="#8d00ff"/></linearGradient><linearGradient id="u251" gradientUnits="userSpaceOnUse" x1="1575" x2="1832" y1="0" y2="0"><stop offset="0" stop-color="#00f"/><stop offset="0.121" stop-color="#00f"/><stop offset="1" stop-color="#8b00ff"/></linearGradient><linearGradient id="u252" gradientUnits="userSpaceOnUse" x1="1577" x2="1830" y1="0" y2="0"><stop offset="0" stop-color="#00f"/><stop offset="0.115" stop-color="#00f"/><stop offset="1" stop-color="#8900ff"/></linearGradient><linearGradient id="u253" gradientUnits="userSpaceOnUse" x1="1578" x2="1829" y1="0" y2="0"><stop offset="0" stop-color="#00f"/><stop offset="0.112" stop-color="#00f"/><stop offset="1" stop-color="#80f"/></linearGradient><linearGradient id="u254" gradientUnits="userSpaceOnUse" x1="1580" x2="1827" y1="0" y2="0"><stop offset="0" stop-color="#00f"/><stop offset="0.109" stop-color="#00f"/><stop offset="1" stop-color="#8600ff"/></linearGradient><linearGradient id="u255" gradientUnits="userSpaceOnUse" x1="1582" x2="1825" y1="0" y2="0"><stop offset="0" stop-color="#00f"/><stop offset="0.103" stop-color="#00f"/><stop offset="1" stop-color="#8400ff"/></linearGradient><linearGradient id="u256" gradientUnits="userSpaceOnUse" x1="1584" x2="1823" y1="0" y2="0"><stop offset="0" stop-color="#00f"/><stop offset="0.096" stop-color="#00f"/><stop offset="1" stop-color="#8200ff"/></linearGradient><linearGradient id="u257" gradientUnits="userSpaceOnUse" x1="1585" x2="1821" y1="0" y2="0"><stop offset="0" stop-color="#00f"/><stop offset="0.097" stop-color="#00f"/><stop offset="1" stop-color="#8000ff"/></linearGradient><linearGradient id="u258" gradientUnits="userSpaceOnUse" x1="1587" x2="1819" y1="0" y2="0"><stop offset="0" stop-color="#00f"/><stop offset="0.091" stop-color="#00f"/><stop offset="1" stop-color="#7e00ff"/></linearGradient><linearGradient id="u259" gradientUnits="userSpaceOnUse" x1="1589" x2="1817" y1="0" y2="0"><stop offset="0" stop-color="#00f"/><stop offset="0.083" stop-color="#00f"/><stop offset="1" stop-color="#7c00ff"/></linearGradient><linearGradient id="u260" gradientUnits="userSpaceOnUse" x1="1591" x2="1815" y1="0" y2="0"><stop offset="0" stop-color="#00f"/><stop offset="0.08" stop-color="#00f"/><stop offset="1" stop-color="#7a00ff"/></linearGradient><linearGradient id="u261" gradientUnits="userSpaceOnUse" x1="1593" x2="1813" y1="0" y2="0"><stop offset="0" stop-color="#00f"/><stop offset="0.073" stop-color="#00f"/><stop offset="1" stop-color="#7800ff"/></linearGradient><linearGradient id="u262" gradientUnits="userSpaceOnUse" x1="1594" x2="1811" y1="0" y2="0"><stop offset="0" stop-color="#00f"/><stop offset="0.069" stop-color="#00f"/><stop offset="1" stop-color="#7600ff"/></linearGradient><linearGradient id="u263" gradientUnits="userSpaceOnUse" x1="1596" x2="1809" y1="0" y2="0"><stop offset="0" stop-color="#00f"/><stop offset="0.066" stop-color="#00f"/><stop offset="1" stop-color="#7400ff"/></linearGradient><linearGradient id="u264" gradientUnits="userSpaceOnUse" x1="1598" x2="1807" y1="0" y2="0"><stop offset="0" stop-color="#00f"/><stop offset="0.057" stop-color="#00f"/><stop offset="1" stop-color="#7200ff"/></linearGradient><linearGradient id="u265" gradientUnits="userSpaceOnUse" x1="1600" x2="1805" y1="0" y2="0"><stop offset="0" stop-color="#00f"/><stop offset="0.049" stop-color="#00f"/><stop offset="1" stop-color="#7000ff"/></linearGradient><linearGradient id="u266" gradientUnits="userSpaceOnUse" x1="1602" x2="1803" y1="0" y2="0"><stop offset="0" stop-color="#00f"/><stop offset="0.045" stop-color="#00f"/><stop offset="1" stop-color="#6e00ff"/></linearGradient><linearGradient id="u267" gradientUnits="userSpaceOnUse" x1="1604" x2="1801" y1="0" y2="0"><stop offset="0" stop-color="#00f"/><stop offset="0.076" stop-color="#0500ff"/><stop offset="1" stop-color="#6d00ff"/></linearGradient><linearGradient id="u268" gradientUnits="userSpaceOnUse" x1="1606" x2="1799" y1="0" y2="0"><stop offset="0" stop-color="#00f"/><stop offset="0.176" stop-color="#1000ff"/><stop offset="1" stop-color="#6b00ff"/></linearGradient><linearGradient id="u269" gradientUnits="userSpaceOnUse" x1="1608" x2="1797" y1="0" y2="0"><stop offset="0" stop-color="#00f"/><stop offset="1" stop-color="#6900ff"/></linearGradient><linearGradient id="u270" gradientUnits="userSpaceOnUse" x1="1610" x2="1796" y1="0" y2="0"><stop offset="0" stop-color="#00f"/><stop offset="1" stop-color="#6800ff"/></linearGradient><linearGradient id="u271" gradientUnits="userSpaceOnUse" x1="1612" x2="1794" y1="0" y2="0"><stop offset="0" stop-color="#00f"/><stop offset="1" stop-color="#60f"/></linearGradient><linearGradient id="u272" gradientUnits="userSpaceOnUse" x1="1614" x2="1792" y1="0" y2="0"><stop offset="0" stop-color="#0100ff"/><stop offset="1" stop-color="#6400ff"/></linearGradient><linearGradient id="u273" gradientUnits="userSpaceOnUse" x1="1616" x2="1790" y1="0" y2="0"><stop offset="0" stop-color="#0200ff"/><stop offset="1" stop-color="#6300ff"/></linearGradient><linearGradient id="u274" gradientUnits="userSpaceOnUse" x1="1619" x2="1788" y1="0" y2="0"><stop offset="0" stop-color="#0300ff"/><stop offset="1" stop-color="#6100ff"/></linearGradient><linearGradient id="u275" gradientUnits="userSpaceOnUse" x1="1621" x2="1786" y1="0" y2="0"><stop offset="0" stop-color="#0400ff"/><stop offset="1" stop-color="#5f00ff"/></linearGradient><linearGradient id="u276" gradientUnits="userSpaceOnUse" x1="1623" x2="1784" y1="0" y2="0"><stop offset="0" stop-color="#0500ff"/><stop offset="1" stop-color="#5d00ff"/></linearGradient><linearGradient id="u277" gradientUnits="userSpaceOnUse" x1="1625" x2="1782" y1="0" y2="0"><stop offset="0" stop-color="#0600ff"/><stop offset="1" stop-color="#5c00ff"/></linearGradient><linearGradient id="u278" gradientUnits="userSpaceOnUse" x1="1627" x2="1780" y1="0" y2="0"><stop offset="0" stop-color="#0700ff"/><stop offset="1" stop-color="#5a00ff"/></linearGradient><linearGradient id="u279" gradientUnits="userSpaceOnUse" x1="1629" x2="1778" y1="0" y2="0"><stop offset="0" stop-color="#0800ff"/><stop offset="1" stop-color="#5800ff"/></linearGradient><linearGradient id="u280" gradientUnits="userSpaceOnUse" x1="1632" x2="1776" y1="0" y2="0"><stop offset="0" stop-color="#0900ff"/><stop offset="1" stop-color="#5700ff"/></linearGradient><linearGradient id="u281" gradientUnits="userSpaceOnUse" x1="1634" x2="1774" y1="0" y2="0"><stop offset="0" stop-color="#0a00ff"/><stop offset="1" stop-color="#50f"/></linearGradient><linearGradient id="u282" gradientUnits="userSpaceOnUse" x1="1636" x2="1772" y1="0" y2="0"><stop offset="0" stop-color="#0b00ff"/><stop offset="1" stop-color="#5400ff"/></linearGradient><linearGradient id="u283" gradientUnits="userSpaceOnUse" x1="1639" x2="1770" y1="0" y2="0"><stop offset="0" stop-color="#0c00ff"/><stop offset="1" stop-color="#5200ff"/></linearGradient><linearGradient id="u284" gradientUnits="userSpaceOnUse" x1="1641" x2="1768" y1="0" y2="0"><stop offset="0" stop-color="#0d00ff"/><stop offset="1" stop-color="#5000ff"/></linearGradient><linearGradient id="u285" gradientUnits="userSpaceOnUse" x1="1643" x2="1766" y1="0" y2="0"><stop offset="0" stop-color="#0e00ff"/><stop offset="1" stop-color="#4f00ff"/></linearGradient><linearGradient id="u286" gradientUnits="userSpaceOnUse" x1="1646" x2="1764" y1="0" y2="0"><stop offset="0" stop-color="#0f00ff"/><stop offset="1" stop-color="#4d00ff"/></linearGradient><linearGradient id="u287" gradientUnits="userSpaceOnUse" x1="1648" x2="1763" y1="0" y2="0"><stop offset="0" stop-color="#1000ff"/><stop offset="1" stop-color="#4c00ff"/></linearGradient><linearGradient id="u288" gradientUnits="userSpaceOnUse" x1="1650" x2="1761" y1="0" y2="0"><stop offset="0" stop-color="#10f"/><stop offset="1" stop-color="#4b00ff"/></linearGradient><linearGradient id="u289" gradientUnits="userSpaceOnUse" x1="1653" x2="1759" y1="0" y2="0"><stop offset="0" stop-color="#1200ff"/><stop offset="1" stop-color="#4900ff"/></linearGradient><linearGradient id="u290" gradientUnits="userSpaceOnUse" x1="1655" x2="1757" y1="0" y2="0"><stop offset="0" stop-color="#1300ff"/><stop offset="1" stop-color="#4800ff"/></linearGradient><linearGradient id="u291" gradientUnits="userSpaceOnUse" x1="1658" x2="1755" y1="0" y2="0"><stop offset="0" stop-color="#1400ff"/><stop offset="1" stop-color="#4600ff"/></linearGradient><linearGradient id="u292" gradientUnits="userSpaceOnUse" x1="1660" x2="1753" y1="0" y2="0"><stop offset="0" stop-color="#1500ff"/><stop offset="1" stop-color="#4500ff"/></linearGradient><linearGradient id="u293" gradientUnits="userSpaceOnUse" x1="1663" x2="1751" y1="0" y2="0"><stop offset="0" stop-color="#1600ff"/><stop offset="1" stop-color="#4300ff"/></linearGradient><linearGradient id="u294" gradientUnits="userSpaceOnUse" x1="1665" x2="1749" y1="0" y2="0"><stop offset="0" stop-color="#1700ff"/><stop offset="1" stop-color="#4200ff"/></linearGradient><linearGradient id="u295" gradientUnits="userSpaceOnUse" x1="1667" x2="1747" y1="0" y2="0"><stop offset="0" stop-color="#1800ff"/><stop offset="1" stop-color="#4000ff"/></linearGradient><linearGradient id="u296" gradientUnits="userSpaceOnUse" x1="1670" x2="1745" y1="0" y2="0"><stop offset="0" stop-color="#1900ff"/><stop offset="1" stop-color="#3f00ff"/></linearGradient><linearGradient id="u297" gradientUnits="userSpaceOnUse" x1="1672" x2="1743" y1="0" y2="0"><stop offset="0" stop-color="#1a00ff"/><stop offset="1" stop-color="#3e00ff"/></linearGradient><linearGradient id="u298" gradientUnits="userSpaceOnUse" x1="1675" x2="1741" y1="0" y2="0"><stop offset="0" stop-color="#1b00ff"/><stop offset="1" stop-color="#3c00ff"/></linearGradient><linearGradient id="u299" gradientUnits="userSpaceOnUse" x1="1677" x2="1739" y1="0" y2="0"><stop offset="0" stop-color="#1c00ff"/><stop offset="1" stop-color="#3b00ff"/></linearGradient><linearGradient id="u300" gradientUnits="userSpaceOnUse" x1="1680" x2="1737" y1="0" y2="0"><stop offset="0" stop-color="#1d00ff"/><stop offset="1" stop-color="#3900ff"/></linearGradient><linearGradient id="u301" gradientUnits="userSpaceOnUse" x1="1682" x2="1735" y1="0" y2="0"><stop offset="0" stop-color="#1e00ff"/><stop offset="1" stop-color="#3800ff"/></linearGradient><linearGradient id="u302" gradientUnits="userSpaceOnUse" x1="1684" x2="1733" y1="0" y2="0"><stop offset="0" stop-color="#1e00ff"/><stop offset="1" stop-color="#3700ff"/></linearGradient><linearGradient id="u303" gradientUnits="userSpaceOnUse" x1="1687" x2="1731" y1="0" y2="0"><stop offset="0" stop-color="#2000ff"/><stop offset="1" stop-color="#3500ff"/></linearGradient><linearGradient id="u304" gradientUnits="userSpaceOnUse" x1="1689" x2="1730" y1="0" y2="0"><stop offset="0" stop-color="#2000ff"/><stop offset="1" stop-color="#3500ff"/></linearGradient><linearGradient id="u305" gradientUnits="userSpaceOnUse" x1="1691" x2="1728" y1="0" y2="0"><stop offset="0" stop-color="#2100ff"/><stop offset="1" stop-color="#30f"/></linearGradient><linearGradient id="u306" gradientUnits="userSpaceOnUse" x1="1694" x2="1726" y1="0" y2="0"><stop offset="0" stop-color="#20f"/><stop offset="1" stop-color="#3200ff"/></linearGradient><linearGradient id="u307" gradientUnits="userSpaceOnUse" x1="1696" x2="1724" y1="0" y2="0"><stop offset="0" stop-color="#2300ff"/><stop offset="1" stop-color="#3100ff"/></linearGradient><linearGradient id="u308" gradientUnits="userSpaceOnUse" x1="1699" x2="1722" y1="0" y2="0"><stop offset="0" stop-color="#2400ff"/><stop offset="1" stop-color="#2f00ff"/></linearGradient><linearGradient id="u309" gradientUnits="userSpaceOnUse" x1="1701" x2="1720" y1="0" y2="0"><stop offset="0" stop-color="#2500ff"/><stop offset="1" stop-color="#2e00ff"/></linearGradient><linearGradient id="u310" gradientUnits="userSpaceOnUse" x1="1704" x2="1718" y1="0" y2="0"><stop offset="0" stop-color="#2600ff"/><stop offset="1" stop-color="#2d00ff"/></linearGradient><linearGradient id="u311" gradientUnits="userSpaceOnUse" x1="1707" x2="1716" y1="0" y2="0"><stop offset="0" stop-color="#2700ff"/><stop offset="1" stop-color="#2b00ff"/></linearGradient></defs><g clip-path="url(#uvl)"><rect x="1396" y="50" width="68" height="2.6" fill="url(#u0)"/><rect x="1384" y="52" width="107" height="2.6" fill="url(#u1)"/><rect x="1378" y="54" width="135" height="2.6" fill="url(#u2)"/><rect x="1373" y="56" width="160" height="2.6" fill="url(#u3)"/><rect x="1370" y="58" width="182" height="2.6" fill="url(#u4)"/><rect x="1367" y="60" width="203" height="2.6" fill="url(#u5)"/><rect x="1365" y="62" width="223" height="2.6" fill="url(#u6)"/><rect x="1363" y="64" width="243" height="2.6" fill="url(#u7)"/><rect x="1361" y="66" width="263" height="2.6" fill="url(#u8)"/><rect x="1360" y="68" width="281" height="2.6" fill="url(#u9)"/><rect x="1359" y="70" width="300" height="2.6" fill="url(#u10)"/><rect x="1358" y="72" width="318" height="2.6" fill="url(#u11)"/><rect x="1357" y="74" width="336" height="2.6" fill="url(#u12)"/><rect x="1356" y="76" width="355" height="2.6" fill="url(#u13)"/><rect x="1355" y="78" width="373" height="2.6" fill="url(#u14)"/><rect x="1355" y="80" width="390" height="2.6" fill="url(#u15)"/><rect x="1354" y="82" width="409" height="2.6" fill="url(#u16)"/><rect x="1354" y="84" width="426" height="2.6" fill="url(#u17)"/><rect x="1353" y="86" width="445" height="2.6" fill="url(#u18)"/><rect x="1353" y="88" width="462" height="2.6" fill="url(#u19)"/><rect x="1353" y="90" width="479" height="2.6" fill="url(#u20)"/><rect x="1353" y="92" width="497" height="2.6" fill="url(#u21)"/><rect x="1353" y="94" width="514" height="2.6" fill="url(#u22)"/><rect x="1353" y="96" width="531" height="2.6" fill="url(#u23)"/><rect x="1353" y="98" width="548" height="2.6" fill="url(#u24)"/><rect x="1353" y="100" width="566" height="2.6" fill="url(#u25)"/><rect x="1353" y="102" width="583" height="2.6" fill="url(#u26)"/><rect x="1353" y="104" width="601" height="2.6" fill="url(#u27)"/><rect x="1353" y="106" width="618" height="2.6" fill="url(#u28)"/><rect x="1353" y="108" width="635" height="2.6" fill="url(#u29)"/><rect x="1353" y="110" width="653" height="2.6" fill="url(#u30)"/><rect x="1353" y="112" width="670" height="2.6" fill="url(#u31)"/><rect x="1353" y="114" width="688" height="2.6" fill="url(#u32)"/><rect x="1353" y="116" width="705" height="2.6" fill="url(#u33)"/><rect x="1353" y="118" width="722" height="2.6" fill="url(#u34)"/><rect x="1354" y="120" width="739" height="2.6" fill="url(#u35)"/><rect x="1354" y="122" width="756" height="2.6" fill="url(#u36)"/><rect x="1354" y="124" width="773" height="2.6" fill="url(#u37)"/><rect x="1354" y="126" width="791" height="2.6" fill="url(#u38)"/><rect x="1355" y="128" width="807" height="2.6" fill="url(#u39)"/><rect x="1355" y="130" width="824" height="2.6" fill="url(#u40)"/><rect x="1355" y="132" width="842" height="2.6" fill="url(#u41)"/><rect x="1356" y="134" width="843" height="2.6" fill="url(#u42)"/><rect x="1356" y="136" width="843" height="2.6" fill="url(#u43)"/><rect x="1357" y="138" width="842" height="2.6" fill="url(#u44)"/><rect x="1357" y="140" width="842" height="2.6" fill="url(#u45)"/><rect x="1357" y="142" width="842" height="2.6" fill="url(#u46)"/><rect x="1358" y="144" width="841" height="2.6" fill="url(#u47)"/><rect x="1358" y="146" width="841" height="2.6" fill="url(#u48)"/><rect x="1359" y="148" width="840" height="2.6" fill="url(#u49)"/><rect x="1359" y="150" width="840" height="2.6" fill="url(#u50)"/><rect x="1360" y="152" width="839" height="2.6" fill="url(#u51)"/><rect x="1360" y="154" width="839" height="2.6" fill="url(#u52)"/><rect x="1361" y="156" width="838" height="2.6" fill="url(#u53)"/><rect x="1361" y="158" width="838" height="2.6" fill="url(#u54)"/><rect x="1362" y="160" width="837" height="2.6" fill="url(#u55)"/><rect x="1362" y="162" width="837" height="2.6" fill="url(#u56)"/><rect x="1363" y="164" width="836" height="2.6" fill="url(#u57)"/><rect x="1363" y="166" width="836" height="2.6" fill="url(#u58)"/><rect x="1364" y="168" width="835" height="2.6" fill="url(#u59)"/><rect x="1365" y="170" width="834" height="2.6" fill="url(#u60)"/><rect x="1365" y="172" width="834" height="2.6" fill="url(#u61)"/><rect x="1366" y="174" width="833" height="2.6" fill="url(#u62)"/><rect x="1366" y="176" width="831" height="2.6" fill="url(#u63)"/><rect x="1367" y="178" width="828" height="2.6" fill="url(#u64)"/><rect x="1368" y="180" width="825" height="2.6" fill="url(#u65)"/><rect x="1368" y="182" width="823" height="2.6" fill="url(#u66)"/><rect x="1369" y="184" width="820" height="2.6" fill="url(#u67)"/><rect x="1370" y="186" width="818" height="2.6" fill="url(#u68)"/><rect x="1370" y="188" width="816" height="2.6" fill="url(#u69)"/><rect x="1371" y="190" width="813" height="2.6" fill="url(#u70)"/><rect x="1372" y="192" width="810" height="2.6" fill="url(#u71)"/><rect x="1372" y="194" width="808" height="2.6" fill="url(#u72)"/><rect x="1373" y="196" width="805" height="2.6" fill="url(#u73)"/><rect x="1374" y="198" width="802" height="2.6" fill="url(#u74)"/><rect x="1374" y="200" width="800" height="2.6" fill="url(#u75)"/><rect x="1375" y="202" width="797" height="2.6" fill="url(#u76)"/><rect x="1376" y="204" width="794" height="2.6" fill="url(#u77)"/><rect x="1376" y="206" width="792" height="2.6" fill="url(#u78)"/><rect x="1377" y="208" width="789" height="2.6" fill="url(#u79)"/><rect x="1378" y="210" width="786" height="2.6" fill="url(#u80)"/><rect x="1379" y="212" width="783" height="2.6" fill="url(#u81)"/><rect x="1379" y="214" width="781" height="2.6" fill="url(#u82)"/><rect x="1380" y="216" width="778" height="2.6" fill="url(#u83)"/><rect x="1381" y="218" width="775" height="2.6" fill="url(#u84)"/><rect x="1382" y="220" width="773" height="2.6" fill="url(#u85)"/><rect x="1382" y="222" width="771" height="2.6" fill="url(#u86)"/><rect x="1383" y="224" width="768" height="2.6" fill="url(#u87)"/><rect x="1384" y="226" width="765" height="2.6" fill="url(#u88)"/><rect x="1385" y="228" width="762" height="2.6" fill="url(#u89)"/><rect x="1386" y="230" width="759" height="2.6" fill="url(#u90)"/><rect x="1386" y="232" width="757" height="2.6" fill="url(#u91)"/><rect x="1387" y="234" width="754" height="2.6" fill="url(#u92)"/><rect x="1388" y="236" width="751" height="2.6" fill="url(#u93)"/><rect x="1389" y="238" width="748" height="2.6" fill="url(#u94)"/><rect x="1389" y="240" width="746" height="2.6" fill="url(#u95)"/><rect x="1390" y="242" width="743" height="2.6" fill="url(#u96)"/><rect x="1391" y="244" width="740" height="2.6" fill="url(#u97)"/><rect x="1392" y="246" width="737" height="2.6" fill="url(#u98)"/><rect x="1393" y="248" width="734" height="2.6" fill="url(#u99)"/><rect x="1394" y="250" width="731" height="2.6" fill="url(#u100)"/><rect x="1394" y="252" width="729" height="2.6" fill="url(#u101)"/><rect x="1395" y="254" width="727" height="2.6" fill="url(#u102)"/><rect x="1396" y="256" width="724" height="2.6" fill="url(#u103)"/><rect x="1397" y="258" width="721" height="2.6" fill="url(#u104)"/><rect x="1398" y="260" width="718" height="2.6" fill="url(#u105)"/><rect x="1399" y="262" width="715" height="2.6" fill="url(#u106)"/><rect x="1399" y="264" width="713" height="2.6" fill="url(#u107)"/><rect x="1400" y="266" width="710" height="2.6" fill="url(#u108)"/><rect x="1401" y="268" width="707" height="2.6" fill="url(#u109)"/><rect x="1402" y="270" width="704" height="2.6" fill="url(#u110)"/><rect x="1403" y="272" width="701" height="2.6" fill="url(#u111)"/><rect x="1404" y="274" width="698" height="2.6" fill="url(#u112)"/><rect x="1405" y="276" width="695" height="2.6" fill="url(#u113)"/><rect x="1406" y="278" width="692" height="2.6" fill="url(#u114)"/><rect x="1406" y="280" width="690" height="2.6" fill="url(#u115)"/><rect x="1407" y="282" width="687" height="2.6" fill="url(#u116)"/><rect x="1408" y="284" width="684" height="2.6" fill="url(#u117)"/><rect x="1409" y="286" width="682" height="2.6" fill="url(#u118)"/><rect x="1410" y="288" width="679" height="2.6" fill="url(#u119)"/><rect x="1411" y="290" width="676" height="2.6" fill="url(#u120)"/><rect x="1412" y="292" width="673" height="2.6" fill="url(#u121)"/><rect x="1413" y="294" width="670" height="2.6" fill="url(#u122)"/><rect x="1414" y="296" width="667" height="2.6" fill="url(#u123)"/><rect x="1415" y="298" width="664" height="2.6" fill="url(#u124)"/><rect x="1416" y="300" width="661" height="2.6" fill="url(#u125)"/><rect x="1417" y="302" width="658" height="2.6" fill="url(#u126)"/><rect x="1418" y="304" width="655" height="2.6" fill="url(#u127)"/><rect x="1419" y="306" width="652" height="2.6" fill="url(#u128)"/><rect x="1420" y="308" width="649" height="2.6" fill="url(#u129)"/><rect x="1421" y="310" width="646" height="2.6" fill="url(#u130)"/><rect x="1422" y="312" width="643" height="2.6" fill="url(#u131)"/><rect x="1423" y="314" width="640" height="2.6" fill="url(#u132)"/><rect x="1424" y="316" width="637" height="2.6" fill="url(#u133)"/><rect x="1425" y="318" width="634" height="2.6" fill="url(#u134)"/><rect x="1426" y="320" width="632" height="2.6" fill="url(#u135)"/><rect x="1427" y="322" width="629" height="2.6" fill="url(#u136)"/><rect x="1428" y="324" width="626" height="2.6" fill="url(#u137)"/><rect x="1429" y="326" width="623" height="2.6" fill="url(#u138)"/><rect x="1430" y="328" width="620" height="2.6" fill="url(#u139)"/><rect x="1431" y="330" width="617" height="2.6" fill="url(#u140)"/><rect x="1432" y="332" width="614" height="2.6" fill="url(#u141)"/><rect x="1433" y="334" width="611" height="2.6" fill="url(#u142)"/><rect x="1434" y="336" width="608" height="2.6" fill="url(#u143)"/><rect x="1435" y="338" width="605" height="2.6" fill="url(#u144)"/><rect x="1436" y="340" width="602" height="2.6" fill="url(#u145)"/><rect x="1437" y="342" width="599" height="2.6" fill="url(#u146)"/><rect x="1438" y="344" width="596" height="2.6" fill="url(#u147)"/><rect x="1439" y="346" width="593" height="2.6" fill="url(#u148)"/><rect x="1440" y="348" width="590" height="2.6" fill="url(#u149)"/><rect x="1442" y="350" width="586" height="2.6" fill="url(#u150)"/><rect x="1443" y="352" width="583" height="2.6" fill="url(#u151)"/><rect x="1444" y="354" width="581" height="2.6" fill="url(#u152)"/><rect x="1445" y="356" width="578" height="2.6" fill="url(#u153)"/><rect x="1446" y="358" width="575" height="2.6" fill="url(#u154)"/><rect x="1447" y="360" width="572" height="2.6" fill="url(#u155)"/><rect x="1448" y="362" width="569" height="2.6" fill="url(#u156)"/><rect x="1449" y="364" width="566" height="2.6" fill="url(#u157)"/><rect x="1450" y="366" width="563" height="2.6" fill="url(#u158)"/><rect x="1452" y="368" width="559" height="2.6" fill="url(#u159)"/><rect x="1453" y="370" width="556" height="2.6" fill="url(#u160)"/><rect x="1454" y="372" width="553" height="2.6" fill="url(#u161)"/><rect x="1455" y="374" width="550" height="2.6" fill="url(#u162)"/><rect x="1456" y="376" width="547" height="2.6" fill="url(#u163)"/><rect x="1457" y="378" width="544" height="2.6" fill="url(#u164)"/><rect x="1459" y="380" width="540" height="2.6" fill="url(#u165)"/><rect x="1460" y="382" width="537" height="2.6" fill="url(#u166)"/><rect x="1461" y="384" width="534" height="2.6" fill="url(#u167)"/><rect x="1462" y="386" width="531" height="2.6" fill="url(#u168)"/><rect x="1463" y="388" width="529" height="2.6" fill="url(#u169)"/><rect x="1464" y="390" width="526" height="2.6" fill="url(#u170)"/><rect x="1466" y="392" width="522" height="2.6" fill="url(#u171)"/><rect x="1467" y="394" width="519" height="2.6" fill="url(#u172)"/><rect x="1468" y="396" width="516" height="2.6" fill="url(#u173)"/><rect x="1469" y="398" width="513" height="2.6" fill="url(#u174)"/><rect x="1470" y="400" width="510" height="2.6" fill="url(#u175)"/><rect x="1471" y="402" width="507" height="2.6" fill="url(#u176)"/><rect x="1473" y="404" width="503" height="2.6" fill="url(#u177)"/><rect x="1474" y="406" width="500" height="2.6" fill="url(#u178)"/><rect x="1475" y="408" width="497" height="2.6" fill="url(#u179)"/><rect x="1476" y="410" width="494" height="2.6" fill="url(#u180)"/><rect x="1477" y="412" width="491" height="2.6" fill="url(#u181)"/><rect x="1479" y="414" width="487" height="2.6" fill="url(#u182)"/><rect x="1480" y="416" width="484" height="2.6" fill="url(#u183)"/><rect x="1481" y="418" width="481" height="2.6" fill="url(#u184)"/><rect x="1482" y="420" width="478" height="2.6" fill="url(#u185)"/><rect x="1484" y="422" width="475" height="2.6" fill="url(#u186)"/><rect x="1485" y="424" width="472" height="2.6" fill="url(#u187)"/><rect x="1486" y="426" width="469" height="2.6" fill="url(#u188)"/><rect x="1487" y="428" width="466" height="2.6" fill="url(#u189)"/><rect x="1488" y="430" width="463" height="2.6" fill="url(#u190)"/><rect x="1490" y="432" width="459" height="2.6" fill="url(#u191)"/><rect x="1491" y="434" width="456" height="2.6" fill="url(#u192)"/><rect x="1492" y="436" width="453" height="2.6" fill="url(#u193)"/><rect x="1493" y="438" width="450" height="2.6" fill="url(#u194)"/><rect x="1495" y="440" width="446" height="2.6" fill="url(#u195)"/><rect x="1496" y="442" width="443" height="2.6" fill="url(#u196)"/><rect x="1497" y="444" width="440" height="2.6" fill="url(#u197)"/><rect x="1498" y="446" width="437" height="2.6" fill="url(#u198)"/><rect x="1500" y="448" width="433" height="2.6" fill="url(#u199)"/><rect x="1501" y="450" width="430" height="2.6" fill="url(#u200)"/><rect x="1502" y="452" width="427" height="2.6" fill="url(#u201)"/><rect x="1504" y="454" width="423" height="2.6" fill="url(#u202)"/><rect x="1505" y="456" width="421" height="2.6" fill="url(#u203)"/><rect x="1506" y="458" width="418" height="2.6" fill="url(#u204)"/><rect x="1507" y="460" width="415" height="2.6" fill="url(#u205)"/><rect x="1509" y="462" width="411" height="2.6" fill="url(#u206)"/><rect x="1510" y="464" width="408" height="2.6" fill="url(#u207)"/><rect x="1511" y="466" width="405" height="2.6" fill="url(#u208)"/><rect x="1513" y="468" width="401" height="2.6" fill="url(#u209)"/><rect x="1514" y="470" width="398" height="2.6" fill="url(#u210)"/><rect x="1515" y="472" width="395" height="2.6" fill="url(#u211)"/><rect x="1517" y="474" width="391" height="2.6" fill="url(#u212)"/><rect x="1518" y="476" width="388" height="2.6" fill="url(#u213)"/><rect x="1519" y="478" width="385" height="2.6" fill="url(#u214)"/><rect x="1521" y="480" width="381" height="2.6" fill="url(#u215)"/><rect x="1522" y="482" width="378" height="2.6" fill="url(#u216)"/><rect x="1524" y="484" width="374" height="2.6" fill="url(#u217)"/><rect x="1525" y="486" width="371" height="2.6" fill="url(#u218)"/><rect x="1526" y="488" width="369" height="2.6" fill="url(#u219)"/><rect x="1528" y="490" width="365" height="2.6" fill="url(#u220)"/><rect x="1529" y="492" width="362" height="2.6" fill="url(#u221)"/><rect x="1531" y="494" width="358" height="2.6" fill="url(#u222)"/><rect x="1532" y="496" width="355" height="2.6" fill="url(#u223)"/><rect x="1533" y="498" width="352" height="2.6" fill="url(#u224)"/><rect x="1535" y="500" width="348" height="2.6" fill="url(#u225)"/><rect x="1536" y="502" width="345" height="2.6" fill="url(#u226)"/><rect x="1538" y="504" width="341" height="2.6" fill="url(#u227)"/><rect x="1539" y="506" width="338" height="2.6" fill="url(#u228)"/><rect x="1541" y="508" width="334" height="2.6" fill="url(#u229)"/><rect x="1542" y="510" width="331" height="2.6" fill="url(#u230)"/><rect x="1544" y="512" width="327" height="2.6" fill="url(#u231)"/><rect x="1545" y="514" width="324" height="2.6" fill="url(#u232)"/><rect x="1547" y="516" width="320" height="2.6" fill="url(#u233)"/><rect x="1548" y="518" width="317" height="2.6" fill="url(#u234)"/><rect x="1550" y="520" width="313" height="2.6" fill="url(#u235)"/><rect x="1551" y="522" width="311" height="2.6" fill="url(#u236)"/><rect x="1553" y="524" width="307" height="2.6" fill="url(#u237)"/><rect x="1554" y="526" width="304" height="2.6" fill="url(#u238)"/><rect x="1556" y="528" width="300" height="2.6" fill="url(#u239)"/><rect x="1557" y="530" width="297" height="2.6" fill="url(#u240)"/><rect x="1559" y="532" width="293" height="2.6" fill="url(#u241)"/><rect x="1560" y="534" width="290" height="2.6" fill="url(#u242)"/><rect x="1562" y="536" width="286" height="2.6" fill="url(#u243)"/><rect x="1564" y="538" width="282" height="2.6" fill="url(#u244)"/><rect x="1565" y="540" width="279" height="2.6" fill="url(#u245)"/><rect x="1567" y="542" width="275" height="2.6" fill="url(#u246)"/><rect x="1568" y="544" width="272" height="2.6" fill="url(#u247)"/><rect x="1570" y="546" width="268" height="2.6" fill="url(#u248)"/><rect x="1572" y="548" width="264" height="2.6" fill="url(#u249)"/><rect x="1573" y="550" width="261" height="2.6" fill="url(#u250)"/><rect x="1575" y="552" width="257" height="2.6" fill="url(#u251)"/><rect x="1577" y="554" width="253" height="2.6" fill="url(#u252)"/><rect x="1578" y="556" width="251" height="2.6" fill="url(#u253)"/><rect x="1580" y="558" width="247" height="2.6" fill="url(#u254)"/><rect x="1582" y="560" width="243" height="2.6" fill="url(#u255)"/><rect x="1584" y="562" width="239" height="2.6" fill="url(#u256)"/><rect x="1585" y="564" width="236" height="2.6" fill="url(#u257)"/><rect x="1587" y="566" width="232" height="2.6" fill="url(#u258)"/><rect x="1589" y="568" width="228" height="2.6" fill="url(#u259)"/><rect x="1591" y="570" width="224" height="2.6" fill="url(#u260)"/><rect x="1593" y="572" width="220" height="2.6" fill="url(#u261)"/><rect x="1594" y="574" width="217" height="2.6" fill="url(#u262)"/><rect x="1596" y="576" width="213" height="2.6" fill="url(#u263)"/><rect x="1598" y="578" width="209" height="2.6" fill="url(#u264)"/><rect x="1600" y="580" width="205" height="2.6" fill="url(#u265)"/><rect x="1602" y="582" width="201" height="2.6" fill="url(#u266)"/><rect x="1604" y="584" width="197" height="2.6" fill="url(#u267)"/><rect x="1606" y="586" width="193" height="2.6" fill="url(#u268)"/><rect x="1608" y="588" width="189" height="2.6" fill="url(#u269)"/><rect x="1610" y="590" width="186" height="2.6" fill="url(#u270)"/><rect x="1612" y="592" width="182" height="2.6" fill="url(#u271)"/><rect x="1614" y="594" width="178" height="2.6" fill="url(#u272)"/><rect x="1616" y="596" width="174" height="2.6" fill="url(#u273)"/><rect x="1619" y="598" width="169" height="2.6" fill="url(#u274)"/><rect x="1621" y="600" width="165" height="2.6" fill="url(#u275)"/><rect x="1623" y="602" width="161" height="2.6" fill="url(#u276)"/><rect x="1625" y="604" width="157" height="2.6" fill="url(#u277)"/><rect x="1627" y="606" width="153" height="2.6" fill="url(#u278)"/><rect x="1629" y="608" width="149" height="2.6" fill="url(#u279)"/><rect x="1632" y="610" width="144" height="2.6" fill="url(#u280)"/><rect x="1634" y="612" width="140" height="2.6" fill="url(#u281)"/><rect x="1636" y="614" width="136" height="2.6" fill="url(#u282)"/><rect x="1639" y="616" width="131" height="2.6" fill="url(#u283)"/><rect x="1641" y="618" width="127" height="2.6" fill="url(#u284)"/><rect x="1643" y="620" width="123" height="2.6" fill="url(#u285)"/><rect x="1646" y="622" width="118" height="2.6" fill="url(#u286)"/><rect x="1648" y="624" width="115" height="2.6" fill="url(#u287)"/><rect x="1650" y="626" width="111" height="2.6" fill="url(#u288)"/><rect x="1653" y="628" width="106" height="2.6" fill="url(#u289)"/><rect x="1655" y="630" width="102" height="2.6" fill="url(#u290)"/><rect x="1658" y="632" width="97" height="2.6" fill="url(#u291)"/><rect x="1660" y="634" width="93" height="2.6" fill="url(#u292)"/><rect x="1663" y="636" width="88" height="2.6" fill="url(#u293)"/><rect x="1665" y="638" width="84" height="2.6" fill="url(#u294)"/><rect x="1667" y="640" width="80" height="2.6" fill="url(#u295)"/><rect x="1670" y="642" width="75" height="2.6" fill="url(#u296)"/><rect x="1672" y="644" width="71" height="2.6" fill="url(#u297)"/><rect x="1675" y="646" width="66" height="2.6" fill="url(#u298)"/><rect x="1677" y="648" width="62" height="2.6" fill="url(#u299)"/><rect x="1680" y="650" width="57" height="2.6" fill="url(#u300)"/><rect x="1682" y="652" width="53" height="2.6" fill="url(#u301)"/><rect x="1684" y="654" width="49" height="2.6" fill="url(#u302)"/><rect x="1687" y="656" width="44" height="2.6" fill="url(#u303)"/><rect x="1689" y="658" width="41" height="2.6" fill="url(#u304)"/><rect x="1691" y="660" width="37" height="2.6" fill="url(#u305)"/><rect x="1694" y="662" width="32" height="2.6" fill="url(#u306)"/><rect x="1696" y="664" width="28" height="2.6" fill="url(#u307)"/><rect x="1699" y="666" width="23" height="2.6" fill="url(#u308)"/><rect x="1701" y="668" width="19" height="2.6" fill="url(#u309)"/><rect x="1704" y="670" width="14" height="2.6" fill="url(#u310)"/><rect x="1707" y="672" width="9" height="2.6" fill="url(#u311)"/><path d="M1714.5 671.9 L1714.5 671.8 L1714.4 671.8 L1714.4 671.8 L1714.3 671.9 L1714.3 672.0 L1714.2 672.0 L1714.2 672.1 L1714.1 672.2 L1714.0 672.3 L1713.9 672.3 L1713.8 672.3 L1713.7 672.3 L1713.6 672.3 L1713.5 672.3 L1713.4 672.3 L1713.3 672.4 L1713.2 672.5 L1713.1 672.6 L1712.9 672.7 L1712.8 672.7 L1712.7 672.7 L1712.5 672.7 L1712.3 672.7 L1712.2 672.6 L1712.0 672.6 L1711.8 672.6 L1711.6 672.6 L1711.3 672.7 L1711.1 672.7 L1710.9 672.7 L1710.6 672.7 L1710.4 672.7 L1710.1 672.6 L1709.7 672.5 L1709.3 672.3 L1708.8 672.1 L1708.3 671.7 L1707.6 671.4 L1706.9 670.9 L1706.1 670.4 L1705.3 669.8 L1704.4 669.2 L1703.5 668.5 L1702.5 667.8 L1701.5 667.0 L1700.3 666.1 L1699.1 665.1 L1697.7 664.0 L1696.2 662.8 L1694.6 661.5 L1693.0 660.1 L1691.2 658.6 L1689.4 657.1 L1687.5 655.5 L1685.5 653.7 L1683.4 652.0 L1681.3 650.1 L1679.0 648.2 L1676.5 646.2 L1673.9 644.1 L1671.2 641.8 L1668.2 639.4 L1665.1 636.8 L1661.8 634.1 L1658.4 631.3 L1654.9 628.4 L1651.2 625.4 L1647.5 622.3 L1643.5 618.9 L1639.4 615.4 L1635.0 611.6 L1630.4 607.5 L1625.7 603.2 L1620.7 598.7 L1615.7 593.9 L1610.5 588.9 L1605.0 583.5 L1599.3 577.6 L1593.2 571.0 L1586.6 563.7 L1579.5 555.6 L1572.1 546.6 L1564.2 536.9 L1556.1 526.5 L1547.7 515.5 L1539.0 503.7 L1530.1 491.2 L1520.9 478.0 L1511.6 464.0 L1502.1 449.4 L1492.5 434.1 L1482.8 418.3 L1473.0 402.2 L1463.3 385.7 L1453.7 369.0 L1444.2 352.2 L1435.1 335.3 L1426.4 318.5 L1418.1 301.9 L1410.4 285.4 L1403.2 269.3 L1396.5 253.5 L1390.3 238.3 L1384.5 223.6 L1379.3 209.6 L1374.5 196.3 L1370.3 183.7 L1366.7 171.8 L1363.5 160.8 L1360.8 150.5 L1358.7 141.0 L1356.9 132.2 L1355.5 124.0 L1354.6 116.5 L1354.0 109.5 L1353.8 103.1 L1353.9 97.2 L1354.3 91.7 L1355.1 86.6 L1356.2 81.9 L1357.6 77.7 L1359.3 73.8 L1361.3 70.3 L1363.5 67.1 L1366.0 64.3 L1368.8 61.8 L1371.7 59.7 L1374.8 57.9 L1378.1 56.3 L1381.5 55.1 L1385.1 54.0 L1388.9 53.2 L1392.7 52.6 L1396.6 52.0 L1400.7 51.7 L1404.8 51.4 L1409.0 51.2 L1413.3 51.0 L1417.5 50.9 L1421.8 50.9 L1426.1 50.8 L1430.4 50.9 L1434.7 50.9 L1439.1 51.0 L1443.4 51.1 L1447.8 51.3 L1452.3 51.5 L1456.8 51.7 L1461.4 51.9 L1466.0 52.2 L1470.8 52.5 L1475.6 52.9 L1480.5 53.3 L1485.5 53.7 L1490.6 54.1 L1495.7 54.5 L1501.0 55.0 L1506.4 55.5 L1511.9 56.0 L1517.4 56.6 L1523.1 57.2 L1529.0 57.8 L1534.9 58.4 L1541.0 59.0 L1547.3 59.7 L1553.6 60.3 L1560.1 61.1 L1566.8 61.8 L1573.6 62.5 L1580.5 63.3 L1587.6 64.1 L1594.9 64.9 L1602.3 65.8 L1609.9 66.6 L1617.6 67.5 L1625.5 68.4 L1633.6 69.3 L1641.9 70.2 L1650.3 71.2 L1658.8 72.2 L1667.6 73.2 L1676.5 74.2 L1685.6 75.3 L1694.8 76.3 L1704.3 77.4 L1713.8 78.5 L1723.6 79.7 L1733.5 80.8 L1743.6 82.0 L1753.8 83.1 L1764.1 84.3 L1774.6 85.5 L1785.2 86.8 L1795.9 88.0 L1806.7 89.2 L1817.7 90.5 L1828.7 91.8 L1839.8 93.0 L1850.9 94.3 L1861.9 95.6 L1872.9 96.9 L1883.7 98.1 L1894.4 99.4 L1905.1 100.6 L1915.7 101.8 L1926.4 103.0 L1936.9 104.3 L1947.5 105.5 L1957.8 106.7 L1968.0 107.8 L1978.0 109.0 L1987.7 110.1 L1997.1 111.2 L2006.3 112.2 L2015.3 113.2 L2024.1 114.3 L2032.6 115.2 L2040.9 116.2 L2049.0 117.1 L2056.7 118.0 L2064.2 118.9 L2071.4 119.7 L2078.3 120.5 L2085.0 121.3 L2091.5 122.1 L2097.7 122.8 L2103.6 123.4 L2109.3 124.1 L2114.9 124.7 L2120.2 125.3 L2125.3 125.9 L2130.3 126.5 L2135.1 127.1 L2139.7 127.6 L2144.3 128.1 L2148.7 128.6 L2153.0 129.1 L2157.1 129.6 L2161.1 130.1 L2164.9 130.5 L2168.6 131.0 L2172.2 131.4 L2175.5 131.7 L2178.8 132.1 L2181.9 132.5 L2184.8 132.8 L2187.6 133.1 L2190.2 133.4 L2192.7 133.7 L2195.1 134.0 L2197.3 134.2 L2199.4 134.5 L2201.4 134.7 L2203.3 134.9 L2205.1 135.1 L2206.8 135.3 L2208.5 135.5 L2210.0 135.7 L2211.4 135.9 L2212.8 136.0 L2214.0 136.2 L2215.1 136.3 L2216.0 136.4 L2216.9 136.5 L2217.7 136.6 L2218.5 136.7 L2219.3 136.8 L2220.1 136.9 L2220.8 136.9 L2221.5 137.0 L2222.1 137.1 L2222.8 137.2 L2223.3 137.2 L2223.9 137.3 L2224.4 137.4 L2225.0 137.4 L2225.5 137.5 L2226.1 137.6 L2226.7 137.6 L2227.2 137.7 L2227.8 137.8 L2228.3 137.8 L2228.8 137.9 L2229.3 137.9 L2229.7 138.0 L2230.1 138.0 L2230.4 138.1 L2230.8 138.1 L2231.0 138.1 L2231.3 138.2 L2231.5 138.2 L2231.7 138.2 L2231.8 138.2 L2231.9 138.2 L2232.0 138.2 L2232.1 138.3 L2232.2 138.3 L2232.3 138.3 L2232.3 138.3Z M2052.9 117.5 L1491.1 60.7 L1599.6 518.0Z" fill="#000" fill-opacity="0.40" fill-rule="evenodd"/></g><polygon points="1714.5,671.9 1714.5,671.8 1714.4,671.8 1714.4,671.8 1714.3,671.9 1714.3,672.0 1714.2,672.0 1714.2,672.1 1714.1,672.2 1714.0,672.3 1713.9,672.3 1713.8,672.3 1713.7,672.3 1713.6,672.3 1713.5,672.3 1713.4,672.3 1713.3,672.4 1713.2,672.5 1713.1,672.6 1712.9,672.7 1712.8,672.7 1712.7,672.7 1712.5,672.7 1712.3,672.7 1712.2,672.6 1712.0,672.6 1711.8,672.6 1711.6,672.6 1711.3,672.7 1711.1,672.7 1710.9,672.7 1710.6,672.7 1710.4,672.7 1710.1,672.6 1709.7,672.5 1709.3,672.3 1708.8,672.1 1708.3,671.7 1707.6,671.4 1706.9,670.9 1706.1,670.4 1705.3,669.8 1704.4,669.2 1703.5,668.5 1702.5,667.8 1701.5,667.0 1700.3,666.1 1699.1,665.1 1697.7,664.0 1696.2,662.8 1694.6,661.5 1693.0,660.1 1691.2,658.6 1689.4,657.1 1687.5,655.5 1685.5,653.7 1683.4,652.0 1681.3,650.1 1679.0,648.2 1676.5,646.2 1673.9,644.1 1671.2,641.8 1668.2,639.4 1665.1,636.8 1661.8,634.1 1658.4,631.3 1654.9,628.4 1651.2,625.4 1647.5,622.3 1643.5,618.9 1639.4,615.4 1635.0,611.6 1630.4,607.5 1625.7,603.2 1620.7,598.7 1615.7,593.9 1610.5,588.9 1605.0,583.5 1599.3,577.6 1593.2,571.0 1586.6,563.7 1579.5,555.6 1572.1,546.6 1564.2,536.9 1556.1,526.5 1547.7,515.5 1539.0,503.7 1530.1,491.2 1520.9,478.0 1511.6,464.0 1502.1,449.4 1492.5,434.1 1482.8,418.3 1473.0,402.2 1463.3,385.7 1453.7,369.0 1444.2,352.2 1435.1,335.3 1426.4,318.5 1418.1,301.9 1410.4,285.4 1403.2,269.3 1396.5,253.5 1390.3,238.3 1384.5,223.6 1379.3,209.6 1374.5,196.3 1370.3,183.7 1366.7,171.8 1363.5,160.8 1360.8,150.5 1358.7,141.0 1356.9,132.2 1355.5,124.0 1354.6,116.5 1354.0,109.5 1353.8,103.1 1353.9,97.2 1354.3,91.7 1355.1,86.6 1356.2,81.9 1357.6,77.7 1359.3,73.8 1361.3,70.3 1363.5,67.1 1366.0,64.3 1368.8,61.8 1371.7,59.7 1374.8,57.9 1378.1,56.3 1381.5,55.1 1385.1,54.0 1388.9,53.2 1392.7,52.6 1396.6,52.0 1400.7,51.7 1404.8,51.4 1409.0,51.2 1413.3,51.0 1417.5,50.9 1421.8,50.9 1426.1,50.8 1430.4,50.9 1434.7,50.9 1439.1,51.0 1443.4,51.1 1447.8,51.3 1452.3,51.5 1456.8,51.7 1461.4,51.9 1466.0,52.2 1470.8,52.5 1475.6,52.9 1480.5,53.3 1485.5,53.7 1490.6,54.1 1495.7,54.5 1501.0,55.0 1506.4,55.5 1511.9,56.0 1517.4,56.6 1523.1,57.2 1529.0,57.8 1534.9,58.4 1541.0,59.0 1547.3,59.7 1553.6,60.3 1560.1,61.1 1566.8,61.8 1573.6,62.5 1580.5,63.3 1587.6,64.1 1594.9,64.9 1602.3,65.8 1609.9,66.6 1617.6,67.5 1625.5,68.4 1633.6,69.3 1641.9,70.2 1650.3,71.2 1658.8,72.2 1667.6,73.2 1676.5,74.2 1685.6,75.3 1694.8,76.3 1704.3,77.4 1713.8,78.5 1723.6,79.7 1733.5,80.8 1743.6,82.0 1753.8,83.1 1764.1,84.3 1774.6,85.5 1785.2,86.8 1795.9,88.0 1806.7,89.2 1817.7,90.5 1828.7,91.8 1839.8,93.0 1850.9,94.3 1861.9,95.6 1872.9,96.9 1883.7,98.1 1894.4,99.4 1905.1,100.6 1915.7,101.8 1926.4,103.0 1936.9,104.3 1947.5,105.5 1957.8,106.7 1968.0,107.8 1978.0,109.0 1987.7,110.1 1997.1,111.2 2006.3,112.2 2015.3,113.2 2024.1,114.3 2032.6,115.2 2040.9,116.2 2049.0,117.1 2056.7,118.0 2064.2,118.9 2071.4,119.7 2078.3,120.5 2085.0,121.3 2091.5,122.1 2097.7,122.8 2103.6,123.4 2109.3,124.1 2114.9,124.7 2120.2,125.3 2125.3,125.9 2130.3,126.5 2135.1,127.1 2139.7,127.6 2144.3,128.1 2148.7,128.6 2153.0,129.1 2157.1,129.6 2161.1,130.1 2164.9,130.5 2168.6,131.0 2172.2,131.4 2175.5,131.7 2178.8,132.1 2181.9,132.5 2184.8,132.8 2187.6,133.1 2190.2,133.4 2192.7,133.7 2195.1,134.0 2197.3,134.2 2199.4,134.5 2201.4,134.7 2203.3,134.9 2205.1,135.1 2206.8,135.3 2208.5,135.5 2210.0,135.7 2211.4,135.9 2212.8,136.0 2214.0,136.2 2215.1,136.3 2216.0,136.4 2216.9,136.5 2217.7,136.6 2218.5,136.7 2219.3,136.8 2220.1,136.9 2220.8,136.9 2221.5,137.0 2222.1,137.1 2222.8,137.2 2223.3,137.2 2223.9,137.3 2224.4,137.4 2225.0,137.4 2225.5,137.5 2226.1,137.6 2226.7,137.6 2227.2,137.7 2227.8,137.8 2228.3,137.8 2228.8,137.9 2229.3,137.9 2229.7,138.0 2230.1,138.0 2230.4,138.1 2230.8,138.1 2231.0,138.1 2231.3,138.2 2231.5,138.2 2231.7,138.2 2231.8,138.2 2231.9,138.2 2232.0,138.2 2232.1,138.3 2232.2,138.3 2232.3,138.3 2232.3,138.3" fill="none" stroke="#242424" stroke-width="3.6" stroke-linejoin="round" clip-path="url(#uvc)"/><rect x="1862" y="647" width="334" height="36.5" fill="#323232"/><rect x="1352" y="37" width="848" height="653.5" fill="none" stroke="#999" stroke-width="2"/><rect x="1351.3" y="691" width="2" height="8" fill="#ddd"/><rect x="1344" y="689.1" width="8" height="2" fill="#ddd"/><rect x="1421.9" y="691" width="2" height="8" fill="#ddd"/><rect x="1344" y="636.3" width="8" height="2" fill="#ddd"/><rect x="1492.5" y="691" width="2" height="8" fill="#ddd"/><rect x="1344" y="581.9" width="8" height="2" fill="#ddd"/><rect x="1563.1" y="691" width="2" height="8" fill="#ddd"/><rect x="1344" y="527.4" width="8" height="2" fill="#ddd"/><rect x="1633.7" y="691" width="2" height="8" fill="#ddd"/><rect x="1344" y="473.0" width="8" height="2" fill="#ddd"/><rect x="1704.3" y="691" width="2" height="8" fill="#ddd"/><rect x="1344" y="418.5" width="8" height="2" fill="#ddd"/><rect x="1774.9" y="691" width="2" height="8" fill="#ddd"/><rect x="1344" y="364.0" width="8" height="2" fill="#ddd"/><rect x="1845.5" y="691" width="2" height="8" fill="#ddd"/><rect x="1344" y="309.6" width="8" height="2" fill="#ddd"/><rect x="1916.1" y="691" width="2" height="8" fill="#ddd"/><rect x="1344" y="255.1" width="8" height="2" fill="#ddd"/><rect x="1986.7" y="691" width="2" height="8" fill="#ddd"/><rect x="1344" y="200.7" width="8" height="2" fill="#ddd"/><rect x="2057.3" y="691" width="2" height="8" fill="#ddd"/><rect x="1344" y="146.2" width="8" height="2" fill="#ddd"/><rect x="2127.9" y="691" width="2" height="8" fill="#ddd"/><rect x="1344" y="91.7" width="8" height="2" fill="#ddd"/><rect x="2043.9" y="108.5" width="18" height="18" fill="none" stroke="#fff" stroke-width="2"/><rect x="1482.1" y="51.7" width="18" height="18" fill="none" stroke="#fff" stroke-width="2"/><rect x="1590.6" y="509.0" width="18" height="18" fill="none" stroke="#fff" stroke-width="2"/><rect x="1514.1" y="186.8" width="18" height="18" fill="none" stroke="#fff" stroke-width="2"/><rect x="1801.2" y="323.0" width="18" height="18" fill="none" stroke="#fff" stroke-width="2"/><rect x="1632.0" y="66.9" width="18" height="18" fill="none" stroke="#fff" stroke-width="2"/><rect x="1621.6" y="171.1" width="17.6" height="17.6" fill="none" stroke="#000" stroke-width="2.6"/><circle cx="1985.3" cy="120.1" r="5.4" fill="#be0000" stroke="#000" stroke-width="1.6"/><circle cx="1509.1" cy="68.2" r="5.4" fill="#00b400" stroke="#000" stroke-width="1.6"/><circle cx="1596.6" cy="517.3" r="5.4" fill="#0000c3" stroke="#000" stroke-width="1.6"/><circle cx="1526.3" cy="196.1" r="5.4" fill="#00b9b9" stroke="#000" stroke-width="1.6"/><circle cx="1779.8" cy="331.2" r="5.4" fill="#b900b9" stroke="#000" stroke-width="1.6"/><circle cx="1635.8" cy="81.7" r="5.4" fill="#c3c300" stroke="#000" stroke-width="1.6"/><circle cx="1625.1" cy="182.2" r="5.4" fill="#fff" stroke="#000" stroke-width="1.6"/><defs><linearGradient id="ddg" x1="0" y1="0" x2="0" y2="1"><stop offset="0" stop-color="#6e6e6e"/><stop offset="1" stop-color="#555"/></linearGradient></defs><rect x="2117" y="44" width="77" height="33" fill="url(#ddg)"/><path d="M2175 58h13l-6.5 7z" fill="#000"/></svg>
<div class="t" style="left:1696.0px;top:15px;font-size:19.6px;color:#c8c8c8;transform:scaleX(0.988);">CIE 1976 u'v'</div>
<div class="t" style="left:1951.5px;top:56px;font-size:20.5px;color:#f0f0f0;transform:scaleX(0.988);">Gamut coverage:</div>
<div class="t" style="left:2120.4px;top:52px;font-size:24.0px;color:#f0f0f0;transform:scaleX(1.008);">u'v'</div>
<div class="t" style="left:1861.2px;top:654px;font-size:26.0px;color:#f0f0f0;transform:scaleX(1.010);white-space:pre;">Gamut Coverage:  84.9%</div>
<div class="t" style="left:1346.8px;top:703px;font-size:19.7px;color:#c8c8c8;">0</div>
<div class="t" style="left:1333.2px;top:681px;font-size:19.7px;color:#c8c8c8;">0</div>
<div class="t" style="left:1403.7px;top:703px;font-size:19.7px;color:#c8c8c8;">0.05</div>
<div class="t" style="left:1305.9px;top:628px;font-size:19.7px;color:#c8c8c8;">0.05</div>
<div class="t" style="left:1479.9px;top:703px;font-size:19.7px;color:#c8c8c8;">0.1</div>
<div class="t" style="left:1316.9px;top:574px;font-size:19.7px;color:#c8c8c8;">0.1</div>
<div class="t" style="left:1544.9px;top:703px;font-size:19.7px;color:#c8c8c8;">0.15</div>
<div class="t" style="left:1305.9px;top:519px;font-size:19.7px;color:#c8c8c8;">0.15</div>
<div class="t" style="left:1621.1px;top:703px;font-size:19.7px;color:#c8c8c8;">0.2</div>
<div class="t" style="left:1317.0px;top:465px;font-size:19.7px;color:#c8c8c8;">0.2</div>
<div class="t" style="left:1686.1px;top:703px;font-size:19.7px;color:#c8c8c8;">0.25</div>
<div class="t" style="left:1305.9px;top:410px;font-size:19.7px;color:#c8c8c8;">0.25</div>
<div class="t" style="left:1762.2px;top:703px;font-size:19.7px;color:#c8c8c8;">0.3</div>
<div class="t" style="left:1316.8px;top:356px;font-size:19.7px;color:#c8c8c8;">0.3</div>
<div class="t" style="left:1827.3px;top:703px;font-size:19.7px;color:#c8c8c8;">0.35</div>
<div class="t" style="left:1305.9px;top:302px;font-size:19.7px;color:#c8c8c8;">0.35</div>
<div class="t" style="left:1903.3px;top:703px;font-size:19.7px;color:#c8c8c8;">0.4</div>
<div class="t" style="left:1316.6px;top:247px;font-size:19.7px;color:#c8c8c8;">0.4</div>
<div class="t" style="left:1968.5px;top:703px;font-size:19.7px;color:#c8c8c8;">0.45</div>
<div class="t" style="left:1305.9px;top:193px;font-size:19.7px;color:#c8c8c8;">0.45</div>
<div class="t" style="left:2044.6px;top:703px;font-size:19.7px;color:#c8c8c8;">0.5</div>
<div class="t" style="left:1316.8px;top:138px;font-size:19.7px;color:#c8c8c8;">0.5</div>
<div class="t" style="left:2109.7px;top:703px;font-size:19.7px;color:#c8c8c8;">0.55</div>
<div class="t" style="left:1305.9px;top:84px;font-size:19.7px;color:#c8c8c8;">0.55</div>
<div class="t" style="left:19.0px;top:792px;font-size:38.0px;color:#f0f0f0;transform:scaleX(1.056);">Current Reading</div>
<div class="t" style="left:20.3px;top:890px;font-size:32.0px;color:#f0f0f0;transform:scaleX(1.044);">x: 0.3066</div>
<div class="t" style="left:228.3px;top:890px;font-size:32.0px;color:#f0f0f0;transform:scaleX(1.044);">y: 0.3271</div>
<div class="t" style="left:20.5px;top:944px;font-size:32.0px;color:#f0f0f0;transform:scaleX(1.040);">fL: 363.82</div>
<div class="t" style="left:19.6px;top:999px;font-size:32.0px;color:#f0f0f0;transform:scaleX(1.086);">cd/m²: 1246.54</div>
<svg width="2216" height="1286"><rect x="474.2" y="788.3" width="333.4" height="241.0" fill="#242424"/><rect x="474.2" y="1004.8" width="333.4" height="2" fill="#8c8c8c"/><rect x="467.2" y="1004.8" width="8" height="2" fill="#ddd"/><rect x="474.2" y="956.8" width="333.4" height="2" fill="#8c8c8c"/><rect x="467.2" y="956.8" width="8" height="2" fill="#ddd"/><rect x="474.2" y="908.8" width="333.4" height="2" fill="#8c8c8c"/><rect x="467.2" y="908.8" width="8" height="2" fill="#ddd"/><rect x="474.2" y="860.8" width="333.4" height="2" fill="#8c8c8c"/><rect x="467.2" y="860.8" width="8" height="2" fill="#ddd"/><rect x="474.2" y="812.8" width="333.4" height="2" fill="#8c8c8c"/><rect x="467.2" y="812.8" width="8" height="2" fill="#ddd"/><defs><linearGradient id="rb0" x1="0" y1="0" x2="0" y2="1"><stop offset="0" stop-color="#ff5a5a"/><stop offset="1" stop-color="#ff4a4a"/></linearGradient><linearGradient id="rb1" x1="0" y1="0" x2="0" y2="1"><stop offset="0" stop-color="#5cb05c"/><stop offset="1" stop-color="#3c9e3c"/></linearGradient><linearGradient id="rb2" x1="0" y1="0" x2="0" y2="1"><stop offset="0" stop-color="#5c5cff"/><stop offset="1" stop-color="#3a3aff"/></linearGradient></defs><rect x="507.3" y="953.6" width="87.1" height="74.9" fill="url(#rb0)" stroke="#000" stroke-width="2"/><rect x="595.6" y="899.4" width="87.2" height="129.1" fill="url(#rb1)" stroke="#000" stroke-width="2"/><rect x="684.0" y="882.5" width="86.9" height="146.0" fill="url(#rb2)" stroke="#000" stroke-width="2"/><path d="M475.3 1035.8V789.4H806.5V1035.8" fill="none" stroke="#999" stroke-width="2.2"/><rect x="474.2" y="1026.9" width="333.4" height="2.4" fill="#999"/></svg>
<div class="t" style="left:564.3px;top:766px;font-size:19.7px;color:#c8c8c8;transform:scaleX(0.939);">RGB Balance</div>
<div class="t" style="left:614.2px;top:1034px;font-size:19.5px;color:#c8c8c8;transform:scaleX(1.024);">100W</div>
<div class="t" style="left:444.8px;top:997px;font-size:19.8px;color:#c8c8c8;">96</div>
<div class="t" style="left:444.8px;top:949px;font-size:19.8px;color:#c8c8c8;">98</div>
<div class="t" style="left:433.7px;top:901px;font-size:19.8px;color:#c8c8c8;">100</div>
<div class="t" style="left:434.0px;top:853px;font-size:19.8px;color:#c8c8c8;">102</div>
<div class="t" style="left:433.6px;top:805px;font-size:19.8px;color:#c8c8c8;">104</div>
<svg width="2216" height="1286"><defs><linearGradient id="x0" gradientUnits="userSpaceOnUse" x1="847" x2="1297" y1="0" y2="0"><stop offset="0" stop-color="#86ffce"/><stop offset="0.407" stop-color="#c1ffcc"/><stop offset="0.793" stop-color="#ffffc9"/><stop offset="1" stop-color="#ffe0af"/></linearGradient><linearGradient id="x1" gradientUnits="userSpaceOnUse" x1="847" x2="1297" y1="0" y2="0"><stop offset="0" stop-color="#87ffcf"/><stop offset="0.404" stop-color="#c2ffcd"/><stop offset="0.787" stop-color="#ffffca"/><stop offset="1" stop-color="#ffdfaf"/></linearGradient><linearGradient id="x2" gradientUnits="userSpaceOnUse" x1="847" x2="1297" y1="0" y2="0"><stop offset="0" stop-color="#88ffd0"/><stop offset="0.4" stop-color="#c2ffce"/><stop offset="0.78" stop-color="#ffc"/><stop offset="1" stop-color="#ffdeb0"/></linearGradient><linearGradient id="x3" gradientUnits="userSpaceOnUse" x1="847" x2="1297" y1="0" y2="0"><stop offset="0" stop-color="#89ffd1"/><stop offset="0.398" stop-color="#c2ffcf"/><stop offset="0.773" stop-color="#ffffcd"/><stop offset="1" stop-color="#ffddb0"/></linearGradient><linearGradient id="x4" gradientUnits="userSpaceOnUse" x1="847" x2="1297" y1="0" y2="0"><stop offset="0" stop-color="#89ffd2"/><stop offset="0.391" stop-color="#c2ffd0"/><stop offset="0.767" stop-color="#ffffce"/><stop offset="1" stop-color="#ffdcb0"/></linearGradient><linearGradient id="x5" gradientUnits="userSpaceOnUse" x1="847" x2="1297" y1="0" y2="0"><stop offset="0" stop-color="#8affd3"/><stop offset="0.387" stop-color="#c3ffd1"/><stop offset="0.76" stop-color="#ffffcf"/><stop offset="1" stop-color="#ffdbb0"/></linearGradient><linearGradient id="x6" gradientUnits="userSpaceOnUse" x1="847" x2="1297" y1="0" y2="0"><stop offset="0" stop-color="#8bffd5"/><stop offset="0.384" stop-color="#c3ffd2"/><stop offset="0.751" stop-color="#ffffd0"/><stop offset="1" stop-color="#ffdab0"/></linearGradient><linearGradient id="x7" gradientUnits="userSpaceOnUse" x1="847" x2="1297" y1="0" y2="0"><stop offset="0" stop-color="#8cffd6"/><stop offset="0.382" stop-color="#c4ffd4"/><stop offset="0.744" stop-color="#ffffd1"/><stop offset="1" stop-color="#ffd9b1"/></linearGradient><linearGradient id="x8" gradientUnits="userSpaceOnUse" x1="847" x2="1297" y1="0" y2="0"><stop offset="0" stop-color="#8cffd7"/><stop offset="0.378" stop-color="#c4ffd5"/><stop offset="0.738" stop-color="#ffffd3"/><stop offset="1" stop-color="#ffd8b1"/></linearGradient><linearGradient id="x9" gradientUnits="userSpaceOnUse" x1="847" x2="1297" y1="0" y2="0"><stop offset="0" stop-color="#8dffd8"/><stop offset="0.376" stop-color="#c5ffd6"/><stop offset="0.731" stop-color="#ffffd4"/><stop offset="1" stop-color="#ffd7b1"/></linearGradient><linearGradient id="x10" gradientUnits="userSpaceOnUse" x1="847" x2="1297" y1="0" y2="0"><stop offset="0" stop-color="#8effd9"/><stop offset="0.371" stop-color="#c5ffd7"/><stop offset="0.724" stop-color="#ffffd5"/><stop offset="1" stop-color="#ffd6b1"/></linearGradient><linearGradient id="x11" gradientUnits="userSpaceOnUse" x1="847" x2="1297" y1="0" y2="0"><stop offset="0" stop-color="#8fffda"/><stop offset="0.367" stop-color="#c5ffd8"/><stop offset="0.718" stop-color="#ffffd6"/><stop offset="1" stop-color="#ffd5b1"/></linearGradient><linearGradient id="x12" gradientUnits="userSpaceOnUse" x1="847" x2="1297" y1="0" y2="0"><stop offset="0" stop-color="#90ffdb"/><stop offset="0.362" stop-color="#c6ffd9"/><stop offset="0.711" stop-color="#ffffd7"/><stop offset="1" stop-color="#ffd4b2"/></linearGradient><linearGradient id="x13" gradientUnits="userSpaceOnUse" x1="847" x2="1297" y1="0" y2="0"><stop offset="0" stop-color="#90ffdc"/><stop offset="0.356" stop-color="#c6ffda"/><stop offset="0.704" stop-color="#ffffd9"/><stop offset="1" stop-color="#ffd3b2"/></linearGradient><linearGradient id="x14" gradientUnits="userSpaceOnUse" x1="847" x2="1297" y1="0" y2="0"><stop offset="0" stop-color="#91ffdd"/><stop offset="0.356" stop-color="#c7ffdc"/><stop offset="0.696" stop-color="#ffffda"/><stop offset="1" stop-color="#ffd2b2"/></linearGradient><linearGradient id="x15" gradientUnits="userSpaceOnUse" x1="847" x2="1297" y1="0" y2="0"><stop offset="0" stop-color="#92ffde"/><stop offset="0.353" stop-color="#c7ffdd"/><stop offset="0.689" stop-color="#ffffdb"/><stop offset="1" stop-color="#ffd1b2"/></linearGradient><linearGradient id="x16" gradientUnits="userSpaceOnUse" x1="847" x2="1297" y1="0" y2="0"><stop offset="0" stop-color="#93ffdf"/><stop offset="0.349" stop-color="#c8ffde"/><stop offset="0.682" stop-color="#ffffdc"/><stop offset="1" stop-color="#ffd0b2"/></linearGradient><linearGradient id="x17" gradientUnits="userSpaceOnUse" x1="847" x2="1297" y1="0" y2="0"><stop offset="0" stop-color="#94ffe0"/><stop offset="0.347" stop-color="#c8ffdf"/><stop offset="0.676" stop-color="#ffffde"/><stop offset="1" stop-color="#ffcfb2"/></linearGradient><linearGradient id="x18" gradientUnits="userSpaceOnUse" x1="847" x2="1297" y1="0" y2="0"><stop offset="0" stop-color="#94ffe1"/><stop offset="0.342" stop-color="#c8ffe0"/><stop offset="0.669" stop-color="#ffffdf"/><stop offset="0.827" stop-color="#ffe6c8"/><stop offset="1" stop-color="#ffceb3"/></linearGradient><linearGradient id="x19" gradientUnits="userSpaceOnUse" x1="847" x2="1297" y1="0" y2="0"><stop offset="0" stop-color="#95ffe3"/><stop offset="0.336" stop-color="#c8ffe1"/><stop offset="0.662" stop-color="#ffffe0"/><stop offset="0.824" stop-color="#ffe5c8"/><stop offset="1" stop-color="#ffcdb3"/></linearGradient><linearGradient id="x20" gradientUnits="userSpaceOnUse" x1="847" x2="1297" y1="0" y2="0"><stop offset="0" stop-color="#96ffe4"/><stop offset="0.331" stop-color="#c9ffe3"/><stop offset="0.656" stop-color="#ffffe1"/><stop offset="0.82" stop-color="#ffe4c9"/><stop offset="1" stop-color="#ffccb3"/></linearGradient><linearGradient id="x21" gradientUnits="userSpaceOnUse" x1="847" x2="1297" y1="0" y2="0"><stop offset="0" stop-color="#97ffe5"/><stop offset="0.331" stop-color="#caffe4"/><stop offset="0.647" stop-color="#ffffe3"/><stop offset="0.82" stop-color="#ffe3c9"/><stop offset="1" stop-color="#ffcbb3"/></linearGradient><linearGradient id="x22" gradientUnits="userSpaceOnUse" x1="847" x2="1297" y1="0" y2="0"><stop offset="0" stop-color="#98ffe6"/><stop offset="0.327" stop-color="#caffe5"/><stop offset="0.64" stop-color="#ffffe4"/><stop offset="0.816" stop-color="#ffe3ca"/><stop offset="1" stop-color="#ffcab3"/></linearGradient><linearGradient id="x23" gradientUnits="userSpaceOnUse" x1="847" x2="1297" y1="0" y2="0"><stop offset="0" stop-color="#99ffe7"/><stop offset="0.324" stop-color="#cbffe6"/><stop offset="0.633" stop-color="#ffffe5"/><stop offset="0.811" stop-color="#ffe2cb"/><stop offset="1" stop-color="#ffc9b4"/></linearGradient><linearGradient id="x24" gradientUnits="userSpaceOnUse" x1="847" x2="1297" y1="0" y2="0"><stop offset="0" stop-color="#99ffe8"/><stop offset="0.32" stop-color="#cbffe7"/><stop offset="0.627" stop-color="#ffffe6"/><stop offset="0.804" stop-color="#ffe2cc"/><stop offset="1" stop-color="#ffc8b4"/></linearGradient><linearGradient id="x25" gradientUnits="userSpaceOnUse" x1="847" x2="1297" y1="0" y2="0"><stop offset="0" stop-color="#9affe9"/><stop offset="0.316" stop-color="#cbffe9"/><stop offset="0.62" stop-color="#ffffe8"/><stop offset="0.8" stop-color="#ffe2cd"/><stop offset="1" stop-color="#ffc7b4"/></linearGradient><linearGradient id="x26" gradientUnits="userSpaceOnUse" x1="847" x2="1297" y1="0" y2="0"><stop offset="0" stop-color="#9bffeb"/><stop offset="0.311" stop-color="#ccffea"/><stop offset="0.613" stop-color="#ffffe9"/><stop offset="0.798" stop-color="#ffe1cd"/><stop offset="1" stop-color="#ffc6b4"/></linearGradient><linearGradient id="x27" gradientUnits="userSpaceOnUse" x1="847" x2="1297" y1="0" y2="0"><stop offset="0" stop-color="#9cffec"/><stop offset="0.304" stop-color="#ccffeb"/><stop offset="0.607" stop-color="#ffffea"/><stop offset="0.793" stop-color="#ffe1ce"/><stop offset="1" stop-color="#ffc5b4"/></linearGradient><linearGradient id="x28" gradientUnits="userSpaceOnUse" x1="847" x2="1297" y1="0" y2="0"><stop offset="0" stop-color="#9dffed"/><stop offset="0.304" stop-color="#cdffec"/><stop offset="0.598" stop-color="#ffffec"/><stop offset="0.793" stop-color="#ffe0ce"/><stop offset="1" stop-color="#ffc4b5"/></linearGradient><linearGradient id="x29" gradientUnits="userSpaceOnUse" x1="847" x2="1297" y1="0" y2="0"><stop offset="0" stop-color="#9effee"/><stop offset="0.302" stop-color="#cdffee"/><stop offset="0.591" stop-color="#ffffed"/><stop offset="0.789" stop-color="#ffdfcf"/><stop offset="1" stop-color="#ffc3b5"/></linearGradient><linearGradient id="x30" gradientUnits="userSpaceOnUse" x1="847" x2="1297" y1="0" y2="0"><stop offset="0" stop-color="#9fffef"/><stop offset="0.298" stop-color="#ceffef"/><stop offset="0.584" stop-color="#ffe"/><stop offset="0.782" stop-color="#ffdfd0"/><stop offset="1" stop-color="#ffc2b5"/></linearGradient><linearGradient id="x31" gradientUnits="userSpaceOnUse" x1="847" x2="1297" y1="0" y2="0"><stop offset="0" stop-color="#9ffff1"/><stop offset="0.578" stop-color="#ffffef"/><stop offset="0.778" stop-color="#ffdfd1"/><stop offset="1" stop-color="#ffc2b5"/></linearGradient><linearGradient id="x32" gradientUnits="userSpaceOnUse" x1="847" x2="1297" y1="0" y2="0"><stop offset="0" stop-color="#a0fff2"/><stop offset="0.571" stop-color="#fffff1"/><stop offset="0.773" stop-color="#ffded2"/><stop offset="1" stop-color="#ffc1b5"/></linearGradient><linearGradient id="x33" gradientUnits="userSpaceOnUse" x1="847" x2="1297" y1="0" y2="0"><stop offset="0" stop-color="#a1fff3"/><stop offset="0.564" stop-color="#fffff2"/><stop offset="0.771" stop-color="#ffded2"/><stop offset="1" stop-color="#ffc0b5"/></linearGradient><linearGradient id="x34" gradientUnits="userSpaceOnUse" x1="847" x2="1297" y1="0" y2="0"><stop offset="0" stop-color="#a2fff4"/><stop offset="0.558" stop-color="#fffff3"/><stop offset="0.767" stop-color="#ffddd3"/><stop offset="1" stop-color="#ffbfb6"/></linearGradient><linearGradient id="x35" gradientUnits="userSpaceOnUse" x1="847" x2="1297" y1="0" y2="0"><stop offset="0" stop-color="#a3fff5"/><stop offset="0.551" stop-color="#fffff5"/><stop offset="0.762" stop-color="#ffddd4"/><stop offset="1" stop-color="#ffbeb6"/></linearGradient><linearGradient id="x36" gradientUnits="userSpaceOnUse" x1="847" x2="1297" y1="0" y2="0"><stop offset="0" stop-color="#a4fff7"/><stop offset="0.542" stop-color="#fffff6"/><stop offset="0.76" stop-color="#ffdcd4"/><stop offset="1" stop-color="#ffbdb6"/></linearGradient><linearGradient id="x37" gradientUnits="userSpaceOnUse" x1="847" x2="1297" y1="0" y2="0"><stop offset="0" stop-color="#a5fff8"/><stop offset="0.536" stop-color="#fffff7"/><stop offset="0.756" stop-color="#ffdbd5"/><stop offset="1" stop-color="#ffbcb6"/></linearGradient><linearGradient id="x38" gradientUnits="userSpaceOnUse" x1="847" x2="1297" y1="0" y2="0"><stop offset="0" stop-color="#a6fff9"/><stop offset="0.529" stop-color="#fffff9"/><stop offset="0.751" stop-color="#ffdbd6"/><stop offset="1" stop-color="#ffbbb6"/></linearGradient><linearGradient id="x39" gradientUnits="userSpaceOnUse" x1="847" x2="1297" y1="0" y2="0"><stop offset="0" stop-color="#a7fffa"/><stop offset="0.522" stop-color="#fffffa"/><stop offset="0.747" stop-color="#ffdbd6"/><stop offset="1" stop-color="#ffbab7"/></linearGradient><linearGradient id="x40" gradientUnits="userSpaceOnUse" x1="847" x2="1297" y1="0" y2="0"><stop offset="0" stop-color="#a8fffc"/><stop offset="0.516" stop-color="#fffffc"/><stop offset="0.742" stop-color="#ffdad7"/><stop offset="1" stop-color="#ffb9b7"/></linearGradient><linearGradient id="x41" gradientUnits="userSpaceOnUse" x1="847" x2="1297" y1="0" y2="0"><stop offset="0" stop-color="#a8fffd"/><stop offset="0.509" stop-color="#fffffd"/><stop offset="0.74" stop-color="#ffd9d8"/><stop offset="1" stop-color="#ffb8b7"/></linearGradient><linearGradient id="x42" gradientUnits="userSpaceOnUse" x1="847" x2="1297" y1="0" y2="0"><stop offset="0" stop-color="#a9fffe"/><stop offset="0.502" stop-color="#fffffe"/><stop offset="0.736" stop-color="#ffd9d8"/><stop offset="1" stop-color="#ffb8b7"/></linearGradient><linearGradient id="x43" gradientUnits="userSpaceOnUse" x1="847" x2="1297" y1="0" y2="0"><stop offset="0" stop-color="#aff"/><stop offset="0.498" stop-color="#fffeff"/><stop offset="0.733" stop-color="#ffd8d9"/><stop offset="1" stop-color="#ffb7b7"/></linearGradient><linearGradient id="x44" gradientUnits="userSpaceOnUse" x1="847" x2="1297" y1="0" y2="0"><stop offset="0" stop-color="#aafdff"/><stop offset="0.498" stop-color="#fffdff"/><stop offset="0.736" stop-color="#ffd7d9"/><stop offset="1" stop-color="#ffb6b7"/></linearGradient><linearGradient id="x45" gradientUnits="userSpaceOnUse" x1="847" x2="1297" y1="0" y2="0"><stop offset="0" stop-color="#aafcff"/><stop offset="0.5" stop-color="#fffbff"/><stop offset="0.736" stop-color="#ffd6d9"/><stop offset="1" stop-color="#ffb5b8"/></linearGradient><linearGradient id="x46" gradientUnits="userSpaceOnUse" x1="847" x2="1297" y1="0" y2="0"><stop offset="0" stop-color="#aafbff"/><stop offset="0.5" stop-color="#fffaff"/><stop offset="0.736" stop-color="#ffd5d9"/><stop offset="1" stop-color="#ffb4b8"/></linearGradient><linearGradient id="x47" gradientUnits="userSpaceOnUse" x1="847" x2="1297" y1="0" y2="0"><stop offset="0" stop-color="#aaf9ff"/><stop offset="0.5" stop-color="#fff9ff"/><stop offset="0.736" stop-color="#ffd4d9"/><stop offset="1" stop-color="#ffb3b8"/></linearGradient><linearGradient id="x48" gradientUnits="userSpaceOnUse" x1="847" x2="1297" y1="0" y2="0"><stop offset="0" stop-color="#aaf8ff"/><stop offset="0.5" stop-color="#fff7ff"/><stop offset="0.736" stop-color="#ffd3d9"/><stop offset="1" stop-color="#ffb2b8"/></linearGradient><linearGradient id="x49" gradientUnits="userSpaceOnUse" x1="847" x2="1297" y1="0" y2="0"><stop offset="0" stop-color="#abf7ff"/><stop offset="0.502" stop-color="#fff6ff"/><stop offset="0.736" stop-color="#ffd2d9"/><stop offset="1" stop-color="#ffb1b8"/></linearGradient><linearGradient id="x50" gradientUnits="userSpaceOnUse" x1="847" x2="1297" y1="0" y2="0"><stop offset="0" stop-color="#abf6ff"/><stop offset="0.502" stop-color="#fff5ff"/><stop offset="0.736" stop-color="#ffd1da"/><stop offset="1" stop-color="#ffb0b9"/></linearGradient><linearGradient id="x51" gradientUnits="userSpaceOnUse" x1="847" x2="1297" y1="0" y2="0"><stop offset="0" stop-color="#abf4ff"/><stop offset="0.502" stop-color="#fff3ff"/><stop offset="0.736" stop-color="#ffcfda"/><stop offset="1" stop-color="#ffb0b9"/></linearGradient><linearGradient id="x52" gradientUnits="userSpaceOnUse" x1="847" x2="1297" y1="0" y2="0"><stop offset="0" stop-color="#abf3ff"/><stop offset="0.502" stop-color="#fff2ff"/><stop offset="0.738" stop-color="#ffceda"/><stop offset="1" stop-color="#ffafb9"/></linearGradient><linearGradient id="x53" gradientUnits="userSpaceOnUse" x1="847" x2="1297" y1="0" y2="0"><stop offset="0" stop-color="#abf2ff"/><stop offset="0.504" stop-color="#fff1ff"/><stop offset="0.738" stop-color="#ffcdda"/><stop offset="1" stop-color="#ffaeb9"/></linearGradient><linearGradient id="x54" gradientUnits="userSpaceOnUse" x1="847" x2="1297" y1="0" y2="0"><stop offset="0" stop-color="#abf1ff"/><stop offset="0.504" stop-color="#ffefff"/><stop offset="0.738" stop-color="#ffccda"/><stop offset="1" stop-color="#ffadb9"/></linearGradient><linearGradient id="x55" gradientUnits="userSpaceOnUse" x1="847" x2="1297" y1="0" y2="0"><stop offset="0" stop-color="#abefff"/><stop offset="0.504" stop-color="#fef"/><stop offset="0.738" stop-color="#ffcbda"/><stop offset="1" stop-color="#ffacb9"/></linearGradient><linearGradient id="x56" gradientUnits="userSpaceOnUse" x1="847" x2="1297" y1="0" y2="0"><stop offset="0" stop-color="#abeeff"/><stop offset="0.504" stop-color="#ffedff"/><stop offset="0.74" stop-color="#ffcada"/><stop offset="1" stop-color="#ffabba"/></linearGradient><linearGradient id="x57" gradientUnits="userSpaceOnUse" x1="847" x2="1297" y1="0" y2="0"><stop offset="0" stop-color="#abedff"/><stop offset="0.507" stop-color="#ffebff"/><stop offset="0.738" stop-color="#ffc9da"/><stop offset="1" stop-color="#ffaaba"/></linearGradient><linearGradient id="x58" gradientUnits="userSpaceOnUse" x1="847" x2="1297" y1="0" y2="0"><stop offset="0" stop-color="#abecff"/><stop offset="0.507" stop-color="#ffeaff"/><stop offset="0.738" stop-color="#ffc8da"/><stop offset="1" stop-color="#ffa9ba"/></linearGradient><linearGradient id="x59" gradientUnits="userSpaceOnUse" x1="847" x2="1297" y1="0" y2="0"><stop offset="0" stop-color="#abebff"/><stop offset="0.507" stop-color="#ffe9ff"/><stop offset="0.738" stop-color="#ffc7db"/><stop offset="1" stop-color="#ffa9ba"/></linearGradient><linearGradient id="x60" gradientUnits="userSpaceOnUse" x1="847" x2="1297" y1="0" y2="0"><stop offset="0" stop-color="#abe9ff"/><stop offset="0.507" stop-color="#ffe8ff"/><stop offset="0.74" stop-color="#ffc6da"/><stop offset="1" stop-color="#ffa8ba"/></linearGradient><linearGradient id="x61" gradientUnits="userSpaceOnUse" x1="847" x2="1297" y1="0" y2="0"><stop offset="0" stop-color="#abe8ff"/><stop offset="0.509" stop-color="#ffe6ff"/><stop offset="0.74" stop-color="#ffc5db"/><stop offset="1" stop-color="#ffa7ba"/></linearGradient><linearGradient id="x62" gradientUnits="userSpaceOnUse" x1="847" x2="1297" y1="0" y2="0"><stop offset="0" stop-color="#ace7ff"/><stop offset="0.509" stop-color="#ffe5ff"/><stop offset="0.74" stop-color="#ffc4db"/><stop offset="1" stop-color="#ffa6bb"/></linearGradient><linearGradient id="x63" gradientUnits="userSpaceOnUse" x1="847" x2="1297" y1="0" y2="0"><stop offset="0" stop-color="#ace6ff"/><stop offset="0.509" stop-color="#ffe4ff"/><stop offset="0.74" stop-color="#ffc3db"/><stop offset="1" stop-color="#ffa5bb"/></linearGradient><linearGradient id="x64" gradientUnits="userSpaceOnUse" x1="847" x2="1297" y1="0" y2="0"><stop offset="0" stop-color="#ace5ff"/><stop offset="0.509" stop-color="#ffe3ff"/><stop offset="0.742" stop-color="#ffc1db"/><stop offset="1" stop-color="#ffa4bb"/></linearGradient><linearGradient id="x65" gradientUnits="userSpaceOnUse" x1="847" x2="1297" y1="0" y2="0"><stop offset="0" stop-color="#ace3ff"/><stop offset="0.511" stop-color="#ffe1ff"/><stop offset="0.742" stop-color="#ffc0db"/><stop offset="1" stop-color="#ffa4bb"/></linearGradient><linearGradient id="x66" gradientUnits="userSpaceOnUse" x1="847" x2="1297" y1="0" y2="0"><stop offset="0" stop-color="#ace2ff"/><stop offset="0.511" stop-color="#ffe0ff"/><stop offset="0.742" stop-color="#ffbfdb"/><stop offset="1" stop-color="#ffa3bb"/></linearGradient><linearGradient id="x67" gradientUnits="userSpaceOnUse" x1="847" x2="1297" y1="0" y2="0"><stop offset="0" stop-color="#ace1ff"/><stop offset="0.511" stop-color="#ffdfff"/><stop offset="0.742" stop-color="#ffbedb"/><stop offset="1" stop-color="#ffa2bb"/></linearGradient><linearGradient id="x68" gradientUnits="userSpaceOnUse" x1="847" x2="1297" y1="0" y2="0"><stop offset="0" stop-color="#ace0ff"/><stop offset="0.511" stop-color="#ffdeff"/><stop offset="0.742" stop-color="#ffbddb"/><stop offset="1" stop-color="#ffa1bc"/></linearGradient><linearGradient id="x69" gradientUnits="userSpaceOnUse" x1="847" x2="1297" y1="0" y2="0"><stop offset="0" stop-color="#acdfff"/><stop offset="0.511" stop-color="#ffdcff"/><stop offset="0.744" stop-color="#ffbcdb"/><stop offset="1" stop-color="#ffa0bc"/></linearGradient><linearGradient id="x70" gradientUnits="userSpaceOnUse" x1="847" x2="1297" y1="0" y2="0"><stop offset="0" stop-color="#acdeff"/><stop offset="0.513" stop-color="#ffdbff"/><stop offset="0.742" stop-color="#ffbbdc"/><stop offset="1" stop-color="#ff9fbc"/></linearGradient><linearGradient id="x71" gradientUnits="userSpaceOnUse" x1="847" x2="1297" y1="0" y2="0"><stop offset="0" stop-color="#acddff"/><stop offset="0.513" stop-color="#ffdaff"/><stop offset="0.742" stop-color="#ffbadc"/><stop offset="1" stop-color="#ff9ebc"/></linearGradient><linearGradient id="x72" gradientUnits="userSpaceOnUse" x1="847" x2="1297" y1="0" y2="0"><stop offset="0" stop-color="#acdbff"/><stop offset="0.513" stop-color="#ffd9ff"/><stop offset="0.744" stop-color="#ffb9db"/><stop offset="1" stop-color="#ff9ebc"/></linearGradient><linearGradient id="x73" gradientUnits="userSpaceOnUse" x1="847" x2="1297" y1="0" y2="0"><stop offset="0" stop-color="#acdaff"/><stop offset="0.513" stop-color="#ffd7ff"/><stop offset="0.744" stop-color="#ffb8dc"/><stop offset="1" stop-color="#ff9dbc"/></linearGradient><linearGradient id="x74" gradientUnits="userSpaceOnUse" x1="847" x2="1297" y1="0" y2="0"><stop offset="0" stop-color="#acd9ff"/><stop offset="0.516" stop-color="#ffd6ff"/><stop offset="0.744" stop-color="#ffb7dc"/><stop offset="1" stop-color="#ff9cbd"/></linearGradient><linearGradient id="x75" gradientUnits="userSpaceOnUse" x1="847" x2="1297" y1="0" y2="0"><stop offset="0" stop-color="#acd8ff"/><stop offset="0.516" stop-color="#ffd5ff"/><stop offset="0.744" stop-color="#ffb6dc"/><stop offset="1" stop-color="#ff9bbd"/></linearGradient><linearGradient id="x76" gradientUnits="userSpaceOnUse" x1="847" x2="1297" y1="0" y2="0"><stop offset="0" stop-color="#add7ff"/><stop offset="0.516" stop-color="#ffd4ff"/><stop offset="0.744" stop-color="#ffb5dc"/><stop offset="1" stop-color="#ff9abd"/></linearGradient><linearGradient id="x77" gradientUnits="userSpaceOnUse" x1="847" x2="1297" y1="0" y2="0"><stop offset="0" stop-color="#add6ff"/><stop offset="0.516" stop-color="#ffd3ff"/><stop offset="0.747" stop-color="#ffb4dc"/><stop offset="1" stop-color="#ff9abd"/></linearGradient><linearGradient id="x78" gradientUnits="userSpaceOnUse" x1="847" x2="1297" y1="0" y2="0"><stop offset="0" stop-color="#add5ff"/><stop offset="0.518" stop-color="#ffd1ff"/><stop offset="0.744" stop-color="#ffb3dc"/><stop offset="1" stop-color="#ff99bd"/></linearGradient><linearGradient id="x79" gradientUnits="userSpaceOnUse" x1="847" x2="1297" y1="0" y2="0"><stop offset="0" stop-color="#add3ff"/><stop offset="0.518" stop-color="#ffd0ff"/><stop offset="0.744" stop-color="#ffb3dc"/><stop offset="1" stop-color="#ff98bd"/></linearGradient><linearGradient id="x80" gradientUnits="userSpaceOnUse" x1="847" x2="1297" y1="0" y2="0"><stop offset="0" stop-color="#add2ff"/><stop offset="0.518" stop-color="#ffcfff"/><stop offset="0.747" stop-color="#ffb1dc"/><stop offset="1" stop-color="#ff97be"/></linearGradient><linearGradient id="x81" gradientUnits="userSpaceOnUse" x1="847" x2="1297" y1="0" y2="0"><stop offset="0" stop-color="#add1ff"/><stop offset="0.518" stop-color="#ffceff"/><stop offset="0.747" stop-color="#ffb0dc"/><stop offset="1" stop-color="#ff96be"/></linearGradient><linearGradient id="x82" gradientUnits="userSpaceOnUse" x1="847" x2="1297" y1="0" y2="0"><stop offset="0" stop-color="#add0ff"/><stop offset="0.52" stop-color="#fcf"/><stop offset="0.747" stop-color="#ffafdd"/><stop offset="1" stop-color="#ff95be"/></linearGradient><linearGradient id="x83" gradientUnits="userSpaceOnUse" x1="847" x2="1297" y1="0" y2="0"><stop offset="0" stop-color="#adcfff"/><stop offset="0.52" stop-color="#ffcbff"/><stop offset="0.747" stop-color="#ffaedd"/><stop offset="1" stop-color="#ff95be"/></linearGradient><linearGradient id="x84" gradientUnits="userSpaceOnUse" x1="847" x2="1297" y1="0" y2="0"><stop offset="0" stop-color="#adceff"/><stop offset="0.52" stop-color="#ffcaff"/><stop offset="0.747" stop-color="#ffaedd"/><stop offset="1" stop-color="#ff94be"/></linearGradient><linearGradient id="x85" gradientUnits="userSpaceOnUse" x1="847" x2="1297" y1="0" y2="0"><stop offset="0" stop-color="#adcdff"/><stop offset="0.52" stop-color="#ffc9ff"/><stop offset="0.749" stop-color="#ffacdd"/><stop offset="1" stop-color="#ff93be"/></linearGradient><linearGradient id="x86" gradientUnits="userSpaceOnUse" x1="847" x2="1297" y1="0" y2="0"><stop offset="0" stop-color="#adccff"/><stop offset="0.522" stop-color="#ffc8ff"/><stop offset="0.749" stop-color="#ffacdd"/><stop offset="1" stop-color="#ff92bf"/></linearGradient></defs><rect x="847" y="779" width="450" height="3.6" fill="url(#x0)"/><rect x="847" y="782" width="450" height="3.6" fill="url(#x1)"/><rect x="847" y="785" width="450" height="3.6" fill="url(#x2)"/><rect x="847" y="788" width="450" height="3.6" fill="url(#x3)"/><rect x="847" y="791" width="450" height="3.6" fill="url(#x4)"/><rect x="847" y="794" width="450" height="3.6" fill="url(#x5)"/><rect x="847" y="797" width="450" height="3.6" fill="url(#x6)"/><rect x="847" y="800" width="450" height="3.6" fill="url(#x7)"/><rect x="847" y="803" width="450" height="3.6" fill="url(#x8)"/><rect x="847" y="806" width="450" height="3.6" fill="url(#x9)"/><rect x="847" y="809" width="450" height="3.6" fill="url(#x10)"/><rect x="847" y="812" width="450" height="3.6" fill="url(#x11)"/><rect x="847" y="815" width="450" height="3.6" fill="url(#x12)"/><rect x="847" y="818" width="450" height="3.6" fill="url(#x13)"/><rect x="847" y="821" width="450" height="3.6" fill="url(#x14)"/><rect x="847" y="824" width="450" height="3.6" fill="url(#x15)"/><rect x="847" y="827" width="450" height="3.6" fill="url(#x16)"/><rect x="847" y="830" width="450" height="3.6" fill="url(#x17)"/><rect x="847" y="833" width="450" height="3.6" fill="url(#x18)"/><rect x="847" y="836" width="450" height="3.6" fill="url(#x19)"/><rect x="847" y="839" width="450" height="3.6" fill="url(#x20)"/><rect x="847" y="842" width="450" height="3.6" fill="url(#x21)"/><rect x="847" y="845" width="450" height="3.6" fill="url(#x22)"/><rect x="847" y="848" width="450" height="3.6" fill="url(#x23)"/><rect x="847" y="851" width="450" height="3.6" fill="url(#x24)"/><rect x="847" y="854" width="450" height="3.6" fill="url(#x25)"/><rect x="847" y="857" width="450" height="3.6" fill="url(#x26)"/><rect x="847" y="860" width="450" height="3.6" fill="url(#x27)"/><rect x="847" y="863" width="450" height="3.6" fill="url(#x28)"/><rect x="847" y="866" width="450" height="3.6" fill="url(#x29)"/><rect x="847" y="869" width="450" height="3.6" fill="url(#x30)"/><rect x="847" y="872" width="450" height="3.6" fill="url(#x31)"/><rect x="847" y="875" width="450" height="3.6" fill="url(#x32)"/><rect x="847" y="878" width="450" height="3.6" fill="url(#x33)"/><rect x="847" y="881" width="450" height="3.6" fill="url(#x34)"/><rect x="847" y="884" width="450" height="3.6" fill="url(#x35)"/><rect x="847" y="887" width="450" height="3.6" fill="url(#x36)"/><rect x="847" y="890" width="450" height="3.6" fill="url(#x37)"/><rect x="847" y="893" width="450" height="3.6" fill="url(#x38)"/><rect x="847" y="896" width="450" height="3.6" fill="url(#x39)"/><rect x="847" y="899" width="450" height="3.6" fill="url(#x40)"/><rect x="847" y="902" width="450" height="3.6" fill="url(#x41)"/><rect x="847" y="905" width="450" height="3.6" fill="url(#x42)"/><rect x="847" y="908" width="450" height="3.6" fill="url(#x43)"/><rect x="847" y="911" width="450" height="3.6" fill="url(#x44)"/><rect x="847" y="914" width="450" height="3.6" fill="url(#x45)"/><rect x="847" y="917" width="450" height="3.6" fill="url(#x46)"/><rect x="847" y="920" width="450" height="3.6" fill="url(#x47)"/><rect x="847" y="923" width="450" height="3.6" fill="url(#x48)"/><rect x="847" y="926" width="450" height="3.6" fill="url(#x49)"/><rect x="847" y="929" width="450" height="3.6" fill="url(#x50)"/><rect x="847" y="932" width="450" height="3.6" fill="url(#x51)"/><rect x="847" y="935" width="450" height="3.6" fill="url(#x52)"/><rect x="847" y="938" width="450" height="3.6" fill="url(#x53)"/><rect x="847" y="941" width="450" height="3.6" fill="url(#x54)"/><rect x="847" y="944" width="450" height="3.6" fill="url(#x55)"/><rect x="847" y="947" width="450" height="3.6" fill="url(#x56)"/><rect x="847" y="950" width="450" height="3.6" fill="url(#x57)"/><rect x="847" y="953" width="450" height="3.6" fill="url(#x58)"/><rect x="847" y="956" width="450" height="3.6" fill="url(#x59)"/><rect x="847" y="959" width="450" height="3.6" fill="url(#x60)"/><rect x="847" y="962" width="450" height="3.6" fill="url(#x61)"/><rect x="847" y="965" width="450" height="3.6" fill="url(#x62)"/><rect x="847" y="968" width="450" height="3.6" fill="url(#x63)"/><rect x="847" y="971" width="450" height="3.6" fill="url(#x64)"/><rect x="847" y="974" width="450" height="3.6" fill="url(#x65)"/><rect x="847" y="977" width="450" height="3.6" fill="url(#x66)"/><rect x="847" y="980" width="450" height="3.6" fill="url(#x67)"/><rect x="847" y="983" width="450" height="3.6" fill="url(#x68)"/><rect x="847" y="986" width="450" height="3.6" fill="url(#x69)"/><rect x="847" y="989" width="450" height="3.6" fill="url(#x70)"/><rect x="847" y="992" width="450" height="3.6" fill="url(#x71)"/><rect x="847" y="995" width="450" height="3.6" fill="url(#x72)"/><rect x="847" y="998" width="450" height="3.6" fill="url(#x73)"/><rect x="847" y="1001" width="450" height="3.6" fill="url(#x74)"/><rect x="847" y="1004" width="450" height="3.6" fill="url(#x75)"/><rect x="847" y="1007" width="450" height="3.6" fill="url(#x76)"/><rect x="847" y="1010" width="450" height="3.6" fill="url(#x77)"/><rect x="847" y="1013" width="450" height="3.6" fill="url(#x78)"/><rect x="847" y="1016" width="450" height="3.6" fill="url(#x79)"/><rect x="847" y="1019" width="450" height="3.6" fill="url(#x80)"/><rect x="847" y="1022" width="450" height="3.6" fill="url(#x81)"/><rect x="847" y="1025" width="450" height="3.6" fill="url(#x82)"/><rect x="847" y="1028" width="450" height="3.6" fill="url(#x83)"/><rect x="847" y="1031" width="450" height="3.6" fill="url(#x84)"/><rect x="847" y="1034" width="450" height="3.6" fill="url(#x85)"/><rect x="847" y="1037" width="450" height="2.0" fill="url(#x86)"/><rect x="846" y="778" width="452" height="262" fill="none" stroke="#999" stroke-width="2"/><rect x="1061.4" y="899.4" width="19.4" height="17.4" fill="#fff" stroke="#000" stroke-width="2.8"/><circle cx="1008.5" cy="915.3" r="5.4" fill="#bebebe" stroke="#000" stroke-width="1.6"/><circle cx="1016.2" cy="918.2" r="5.2" fill="#fff" stroke="#000" stroke-width="1.6"/></svg>
<div class="t" style="left:1020.8px;top:754px;font-size:19.7px;color:#c8c8c8;transform:scaleX(0.941);">CIE 1931 xy</div>
<div class="b" style="left:1320px;top:756px;width:867px;height:297px;background:#000;"></div>
<div class="b" style="left:1322px;top:758px;width:840px;height:44.7px;background:linear-gradient(#2e2e2e 0,#2e2e2e 48%,#111 50%,#1b1b1b 100%);"></div>
<div class="b" style="left:2162px;top:758px;width:23px;height:44.7px;background:#333;"></div>
<div class="t" style="left:1469.2px;top:770px;font-size:21.8px;color:#f4f4f4;transform:scaleX(1.018);">White</div>
<div class="t" style="left:1582.0px;top:770px;font-size:21.8px;color:#f4f4f4;transform:scaleX(0.913);">Red</div>
<div class="t" style="left:1673.9px;top:770px;font-size:21.8px;color:#f4f4f4;transform:scaleX(0.968);">Green</div>
<div class="t" style="left:1778.3px;top:770px;font-size:21.8px;color:#f4f4f4;transform:scaleX(0.983);">Blue</div>
<div class="t" style="left:1874.0px;top:770px;font-size:21.8px;color:#f4f4f4;transform:scaleX(0.914);">Cyan</div>
<div class="t" style="left:1957.6px;top:770px;font-size:21.8px;color:#f4f4f4;transform:scaleX(0.984);">Magenta</div>
<div class="t" style="left:2073.2px;top:770px;font-size:21.8px;color:#f4f4f4;transform:scaleX(0.954);">Yellow</div>
<div class="b" style="left:1322px;top:803px;width:840px;height:225.4px;overflow:hidden;">
<div class="b" style="left:0;top:-0.3px;width:840px;height:41.2px;background:#404040;"></div>
<div class="b" style="left:0;top:40.8px;width:840px;height:41.2px;background:#808080;"></div>
<div class="b" style="left:0;top:81.9px;width:840px;height:41.2px;background:#404040;"></div>
<div class="b" style="left:0;top:123.0px;width:840px;height:41.2px;background:#808080;"></div>
<div class="b" style="left:0;top:164.1px;width:840px;height:41.2px;background:#404040;"></div>
<div class="b" style="left:0;top:205.2px;width:840px;height:41.2px;background:#808080;"></div>
<div class="t" style="left:17.2px;top:9px;font-size:24.9px;color:#f0f0f0;font-weight:bold;transform:scaleX(0.865);">x: CIE31</div>
<div class="t" style="left:128.4px;top:9px;font-size:25.0px;color:#f0f0f0;transform:scaleX(0.873);">0.3058</div>
<div class="t" style="left:231.8px;top:9px;font-size:25.0px;color:#f0f0f0;transform:scaleX(0.873);">0.6394</div>
<div class="t" style="left:334.8px;top:9px;font-size:25.0px;color:#f0f0f0;transform:scaleX(0.873);">0.2842</div>
<div class="t" style="left:437.8px;top:9px;font-size:25.0px;color:#f0f0f0;transform:scaleX(0.873);">0.1486</div>
<div class="t" style="left:528.8px;top:9px;font-size:25.0px;color:#f0f0f0;transform:scaleX(0.873);">0.2029</div>
<div class="t" style="left:631.8px;top:9px;font-size:25.0px;color:#f0f0f0;transform:scaleX(0.873);">0.3193</div>
<div class="t" style="left:735.1px;top:9px;font-size:25.0px;color:#f0f0f0;transform:scaleX(0.873);">0.4244</div>
<div class="t" style="left:17.2px;top:50px;font-size:24.9px;color:#f0f0f0;font-weight:bold;transform:scaleX(0.865);">y: CIE31</div>
<div class="t" style="left:128.4px;top:50px;font-size:25.0px;color:#f0f0f0;transform:scaleX(0.873);">0.3278</div>
<div class="t" style="left:231.8px;top:50px;font-size:25.0px;color:#f0f0f0;transform:scaleX(0.873);">0.3318</div>
<div class="t" style="left:334.8px;top:50px;font-size:25.0px;color:#f0f0f0;transform:scaleX(0.873);">0.6478</div>
<div class="t" style="left:437.8px;top:50px;font-size:25.0px;color:#f0f0f0;transform:scaleX(0.873);">0.0606</div>
<div class="t" style="left:528.8px;top:50px;font-size:25.0px;color:#f0f0f0;transform:scaleX(0.873);">0.3314</div>
<div class="t" style="left:631.8px;top:50px;font-size:25.0px;color:#f0f0f0;transform:scaleX(0.873);">0.1545</div>
<div class="t" style="left:735.1px;top:50px;font-size:25.0px;color:#f0f0f0;transform:scaleX(0.873);">0.5243</div>
<div class="t" style="left:17.0px;top:91px;font-size:24.9px;color:#f0f0f0;font-weight:bold;transform:scaleX(0.861);">Y</div>
<div class="t" style="left:128.2px;top:91px;font-size:25.0px;color:#f0f0f0;transform:scaleX(0.873);">660.0941</div>
<div class="t" style="left:231.1px;top:91px;font-size:25.0px;color:#f0f0f0;transform:scaleX(0.873);">138.1192</div>
<div class="t" style="left:335.3px;top:91px;font-size:25.0px;color:#f0f0f0;transform:scaleX(0.873);">473.5433</div>
<div class="t" style="left:438.3px;top:91px;font-size:25.0px;color:#f0f0f0;transform:scaleX(0.873);">49.3147</div>
<div class="t" style="left:528.8px;top:91px;font-size:25.0px;color:#f0f0f0;transform:scaleX(0.873);">553.5652</div>
<div class="t" style="left:631.1px;top:91px;font-size:25.0px;color:#f0f0f0;transform:scaleX(0.873);">192.3509</div>
<div class="t" style="left:734.9px;top:91px;font-size:25.0px;color:#f0f0f0;transform:scaleX(0.873);">618.9759</div>
<div class="t" style="left:17.2px;top:132px;font-size:24.9px;color:#f0f0f0;font-weight:bold;transform:scaleX(0.914);">Target Y</div>
<div class="t" style="left:128.2px;top:132px;font-size:25.0px;color:#f0f0f0;transform:scaleX(0.873);">623.0019</div>
<div class="t" style="left:231.1px;top:132px;font-size:25.0px;color:#f0f0f0;transform:scaleX(0.873);">142.6606</div>
<div class="t" style="left:335.3px;top:132px;font-size:25.0px;color:#f0f0f0;transform:scaleX(0.873);">430.9496</div>
<div class="t" style="left:438.3px;top:132px;font-size:25.0px;color:#f0f0f0;transform:scaleX(0.873);">49.3917</div>
<div class="t" style="left:529.3px;top:132px;font-size:25.0px;color:#f0f0f0;transform:scaleX(0.873);">480.3413</div>
<div class="t" style="left:631.1px;top:132px;font-size:25.0px;color:#f0f0f0;transform:scaleX(0.873);">192.0523</div>
<div class="t" style="left:735.1px;top:132px;font-size:25.0px;color:#f0f0f0;transform:scaleX(0.873);">573.6102</div>
<div class="t" style="left:16.5px;top:173px;font-size:24.9px;color:#f0f0f0;font-weight:bold;transform:scaleX(0.923);">ΔE 2000</div>
<div class="t" style="left:128.4px;top:173px;font-size:25.0px;color:#f0f0f0;transform:scaleX(0.873);">3.8839</div>
<div class="t" style="left:231.8px;top:173px;font-size:25.0px;color:#f0f0f0;transform:scaleX(0.873);">3.9993</div>
<div class="t" style="left:334.6px;top:173px;font-size:25.0px;color:#f0f0f0;transform:scaleX(0.873);">2.7886</div>
<div class="t" style="left:437.8px;top:173px;font-size:25.0px;color:#f0f0f0;transform:scaleX(0.873);">0.4862</div>
<div class="t" style="left:528.8px;top:173px;font-size:25.0px;color:#f0f0f0;transform:scaleX(0.873);">3.1533</div>
<div class="t" style="left:631.6px;top:173px;font-size:25.0px;color:#f0f0f0;transform:scaleX(0.873);">2.0788</div>
<div class="t" style="left:735.1px;top:173px;font-size:25.0px;color:#f0f0f0;transform:scaleX(0.873);">3.3913</div>
<div class="t" style="left:16.5px;top:214px;font-size:24.9px;color:#f0f0f0;font-weight:bold;transform:scaleX(0.893);">ΔE ITP</div>
<div class="t" style="left:128.2px;top:214px;font-size:25.0px;color:#f0f0f0;transform:scaleX(0.873);">6.2982</div>
<div class="t" style="left:232.3px;top:214px;font-size:25.0px;color:#f0f0f0;transform:scaleX(0.873);">46.2746</div>
<div class="t" style="left:334.1px;top:214px;font-size:25.0px;color:#f0f0f0;transform:scaleX(0.873);">18.7879</div>
<div class="t" style="left:437.6px;top:214px;font-size:25.0px;color:#f0f0f0;transform:scaleX(0.873);">2.6861</div>
<div class="t" style="left:528.1px;top:214px;font-size:25.0px;color:#f0f0f0;transform:scaleX(0.873);">11.2137</div>
<div class="t" style="left:631.6px;top:214px;font-size:25.0px;color:#f0f0f0;transform:scaleX(0.873);">25.2706</div>
<div class="t" style="left:734.4px;top:214px;font-size:25.0px;color:#f0f0f0;transform:scaleX(0.873);">18.4091</div>
</div>
<div class="b" style="left:2162px;top:802.7px;width:23px;height:225.7px;background:#5a5a5a;"></div>
<div class="b" style="left:2164.5px;top:806px;width:18px;height:19.5px;background:#6a6a6a;border-radius:4px;"></div>
<div class="b" style="left:2164.5px;top:831px;width:18px;height:139.5px;background:#444;border-radius:8px;"></div>
<div class="b" style="left:2164.5px;top:1004.5px;width:18px;height:20.5px;background:#6a6a6a;border-radius:4px;"></div>
<div class="b" style="left:1322px;top:1028.4px;width:863px;height:24.6px;background:#5a5a5a;"></div>
<div class="b" style="left:2162px;top:1028.4px;width:23px;height:24.6px;background:#333;"></div>
<div class="b" style="left:1324px;top:1031.5px;width:19.5px;height:18.5px;background:#6a6a6a;border-radius:4px;"></div>
<div class="b" style="left:1347px;top:1031.5px;width:698.5px;height:18.5px;background:#444;border-radius:9px;"></div>
<div class="b" style="left:2141.3px;top:1031.5px;width:19.5px;height:18.5px;background:#6a6a6a;border-radius:4px;"></div>
<svg width="2216" height="1286"><g fill="#2a2a2a"><path d="M2167.5 820h12l-6-8.5z"/><path d="M2167.5 1010.5h12l-6 8.5z"/><path d="M1338 1034.5v12l-8.5-6z"/><path d="M2147.5 1034.5v12l8.5-6z"/></g></svg>
<div class="b" style="left:1.5px;top:1223px;width:2213px;height:62px;background:linear-gradient(#4b4b4b,#222);"></div>
<div class="b" style="left:0px;top:1284.6px;width:2216px;height:1.4px;background:#8a4f46;"></div>
<div class="b" style="left:2.2px;top:1223px;width:150.4px;height:61px;background:linear-gradient(#ababab,#5e5e5e);border-radius:5px;box-shadow:inset -1px -1px 0 rgba(0,0,0,.3);"></div>
<div class="b" style="left:7.5px;top:1228px;width:139.8px;height:36.3px;background:#c0c0c0;border-radius:4.5px;box-shadow:inset 0 1.5px 1px rgba(0,0,0,.3);"></div>
<div class="t" style="left:62.4px;top:1270px;font-size:11.8px;color:#2a2a2a;font-weight:bold;transform:scaleX(0.930);">White</div>
<div class="b" style="left:154.2px;top:1223px;width:150.4px;height:61px;background:linear-gradient(#ababab,#5e5e5e);border-radius:5px;box-shadow:inset -1px -1px 0 rgba(0,0,0,.3);"></div>
<div class="b" style="left:159.5px;top:1228px;width:139.8px;height:36.3px;background:#c00000;border-radius:4.5px;box-shadow:inset 0 1.5px 1px rgba(0,0,0,.3);"></div>
<div class="t" style="left:218.8px;top:1270px;font-size:11.8px;color:#2a2a2a;font-weight:bold;transform:scaleX(0.930);">Red</div>
<div class="b" style="left:306.3px;top:1223px;width:150.4px;height:61px;background:linear-gradient(#ababab,#5e5e5e);border-radius:5px;box-shadow:inset -1px -1px 0 rgba(0,0,0,.3);"></div>
<div class="b" style="left:311.6px;top:1228px;width:139.8px;height:36.3px;background:#00c000;border-radius:4.5px;box-shadow:inset 0 1.5px 1px rgba(0,0,0,.3);"></div>
<div class="t" style="left:365.4px;top:1270px;font-size:11.8px;color:#2a2a2a;font-weight:bold;transform:scaleX(0.930);">Green</div>
<div class="b" style="left:458.3px;top:1223px;width:150.4px;height:61px;background:linear-gradient(#ababab,#5e5e5e);border-radius:5px;box-shadow:inset -1px -1px 0 rgba(0,0,0,.3);"></div>
<div class="b" style="left:463.6px;top:1228px;width:139.8px;height:36.3px;background:#0000c0;border-radius:4.5px;box-shadow:inset 0 1.5px 1px rgba(0,0,0,.3);"></div>
<div class="t" style="left:521.1px;top:1270px;font-size:11.8px;color:#2a2a2a;font-weight:bold;transform:scaleX(0.930);">Blue</div>
<div class="b" style="left:610.3px;top:1223px;width:150.4px;height:61px;background:linear-gradient(#ababab,#5e5e5e);border-radius:5px;box-shadow:inset -1px -1px 0 rgba(0,0,0,.3);"></div>
<div class="b" style="left:615.6px;top:1228px;width:139.8px;height:36.3px;background:#00c0c0;border-radius:4.5px;box-shadow:inset 0 1.5px 1px rgba(0,0,0,.3);"></div>
<div class="t" style="left:671.9px;top:1270px;font-size:11.8px;color:#2a2a2a;font-weight:bold;transform:scaleX(0.930);">Cyan</div>
<div class="b" style="left:762.4px;top:1223px;width:150.4px;height:61px;background:linear-gradient(#ababab,#5e5e5e);border-radius:5px;box-shadow:inset -1px -1px 0 rgba(0,0,0,.3);"></div>
<div class="b" style="left:767.6px;top:1228px;width:139.8px;height:36.3px;background:#c000c0;border-radius:4.5px;box-shadow:inset 0 1.5px 1px rgba(0,0,0,.3);"></div>
<div class="t" style="left:814.6px;top:1270px;font-size:11.8px;color:#2a2a2a;font-weight:bold;transform:scaleX(0.930);">Magenta</div>
<div class="b" style="left:914.4px;top:1223px;width:150.4px;height:61px;background:linear-gradient(#ababab,#5e5e5e);border-radius:5px;box-shadow:inset -1px -1px 0 rgba(0,0,0,.3);"></div>
<div class="b" style="left:919.7px;top:1228px;width:139.8px;height:36.3px;background:#c0c000;border-radius:4.5px;box-shadow:inset 0 1.5px 1px rgba(0,0,0,.3);"></div>
<div class="t" style="left:972.1px;top:1270px;font-size:11.8px;color:#2a2a2a;font-weight:bold;transform:scaleX(0.930);">Yellow</div>
<div class="b" style="left:1066.4px;top:1223px;width:150.4px;height:61px;background:linear-gradient(#1c1c1c,#3a3a3a);border-radius:5px;box-shadow:inset -1px -1px 0 rgba(0,0,0,.3);"></div>
<div class="b" style="left:1071.7px;top:1228px;width:139.8px;height:36.3px;background:#ffffff;border-radius:4.5px;box-shadow:inset 0 1.5px 1px rgba(0,0,0,.3);"></div>
<div class="t" style="left:1126.6px;top:1270px;font-size:11.8px;color:#fff;font-weight:bold;transform:scaleX(0.930);">100W</div>
<div class="b" style="left:1892px;top:1245px;width:48px;height:39px;background:linear-gradient(#8c8c8c,#6a6a6a);border-radius:3px;"></div>
<div class="b" style="left:1900.7px;top:1248.6px;width:30.5px;height:28.5px;background:#9a9a9a;border:3px solid #222;border-radius:5px;"></div>
<div class="b" style="left:1909px;top:1258.5px;width:14px;height:10.5px;background:#000;"></div>
<div class="b" style="left:1941.5px;top:1224px;width:225.7px;height:28.7px;background:linear-gradient(#8e8e8e,#6a6a6a);"></div>
<div class="b" style="left:1953.8px;top:1226.5px;width:22px;height:22px;background:linear-gradient(#888,#a6a6a6);border-radius:11px;box-shadow:0 0 0 1px rgba(0,0,0,.18);"></div>
<div class="b" style="left:1960.8px;top:1233.5px;width:8px;height:8px;background:#3a3a3a;border-radius:1px;"></div>
<div class="b" style="left:1986.7px;top:1224px;width:1.2px;height:28.7px;background:#3c3c3c;"></div>
<div class="b" style="left:1998.8px;top:1226.5px;width:22px;height:22px;background:linear-gradient(#888,#a6a6a6);border-radius:11px;box-shadow:0 0 0 1px rgba(0,0,0,.18);"></div>
<div class="b" style="left:2005.8px;top:1233.5px;width:8px;height:8px;background:#3a3a3a;border-radius:4px;"></div>
<div class="b" style="left:2031.7px;top:1224px;width:1.2px;height:28.7px;background:#3c3c3c;"></div>
<div class="b" style="left:2043.8px;top:1226.5px;width:22px;height:22px;background:linear-gradient(#888,#a6a6a6);border-radius:11px;box-shadow:0 0 0 1px rgba(0,0,0,.18);"></div>
<div class="b" style="left:2050.8px;top:1233.5px;width:8px;height:8px;background:#3a3a3a;border-radius:1px;"></div>
<div class="b" style="left:2076.7px;top:1224px;width:1.2px;height:28.7px;background:#3c3c3c;"></div>
<div class="b" style="left:2088.8px;top:1226.5px;width:22px;height:22px;background:linear-gradient(#888,#a6a6a6);border-radius:11px;box-shadow:0 0 0 1px rgba(0,0,0,.18);"></div>
<div class="b" style="left:2095.8px;top:1233.5px;width:8px;height:8px;background:#3a3a3a;border-radius:4px;"></div>
<div class="b" style="left:2121.7px;top:1224px;width:1.2px;height:28.7px;background:#3c3c3c;"></div>
<div class="b" style="left:2133.8px;top:1226.5px;width:22px;height:22px;background:linear-gradient(#888,#a6a6a6);border-radius:11px;box-shadow:0 0 0 1px rgba(0,0,0,.18);"></div>
<div class="b" style="left:2140.8px;top:1233.5px;width:8px;height:8px;background:#3a3a3a;border-radius:4px;"></div>
<div class="b" style="left:1941px;top:1254.4px;width:273px;height:29.8px;background:linear-gradient(#b4b4b4,#787878);border-radius:5px;box-shadow:inset 0 1px 0 #c8c8c8;"></div>
<div class="b" style="left:2076.6px;top:1254.4px;width:1.2px;height:29.8px;background:#3c3c3c;"></div>
<div class="b" style="left:2077.8px;top:1254.4px;width:1px;height:29.8px;background:rgba(255,255,255,.25);"></div>
<div class="b" style="left:1961.9px;top:1258.6px;width:20px;height:20px;background:linear-gradient(#8c8c8c,#b4b4b4);border-radius:10px;"></div>
<div class="b" style="left:2174.9px;top:1258.6px;width:20px;height:20px;background:linear-gradient(#8c8c8c,#b4b4b4);border-radius:10px;"></div>
<div class="t" style="left:1966.3px;top:1258px;font-size:20.0px;color:#333;">«</div>
<div class="t" style="left:2179.3px;top:1258px;font-size:20.0px;color:#333;">»</div>
<div class="t" style="left:1997.1px;top:1259px;font-size:21.8px;color:#2c2c2c;transform:scaleX(1.064);-webkit-text-stroke:.35px #2c2c2c;">Back</div>
<div class="t" style="left:2103.7px;top:1259px;font-size:21.8px;color:#2c2c2c;transform:scaleX(1.181);-webkit-text-stroke:.35px #2c2c2c;">Next</div>
<svg width="2216" height="1286"><g stroke="#e01010" stroke-width="3.6" stroke-linecap="round"><path d="M2188.8 1228.6V1249.2M2178.8 1233.2L2198.8 1244.6M2178.8 1244.6L2198.8 1233.2"/></g></svg>
<svg width="2216" height="1286"><path d="M1828.8 1202.1 L1880.9 1213.5 L1885.5 1243.7 L1920.1 1251.5 L1863.9 1272.5 L1831.7 1254.1Z M1837.0 1210.9 L1878.9 1219.9 L1882.1 1242.3 L1843.0 1247.4 L1843.4 1249.1 L1884.0 1246.1 L1910.6 1251.8 L1864.9 1265.8 L1839.0 1250.6Z" fill="rgba(200,25,35,.46)" fill-rule="evenodd" stroke="rgba(255,255,255,.5)" stroke-width="1.3" stroke-linejoin="round"/><path d="M1844.4 1221.5 L1852.6 1217.6 L1862.5 1228.3 L1886.5 1202.1 L1889.7 1202.8 L1875.9 1223.3 L1860.7 1241.4 L1851.1 1224.0Z" fill="rgba(40,30,32,.8)" stroke="rgba(255,255,255,.55)" stroke-width="1.3" stroke-linejoin="round"/><defs><mask id="nbm" maskUnits="userSpaceOnUse" x="1880" y="1200" width="220" height="60"><rect x="1880" y="1200" width="220" height="60" fill="#fff"/><text x="1890.6" y="1240.4" font-family="Liberation Sans, sans-serif" font-weight="bold" font-size="33.3" textLength="196" lengthAdjust="spacingAndGlyphs" fill="#000" stroke="#000" stroke-width="1">NOTEBOOK</text></mask></defs><g opacity=".48"><text x="1890.6" y="1240.4" font-family="Liberation Sans, sans-serif" font-weight="bold" font-size="33.3" textLength="196" lengthAdjust="spacingAndGlyphs" fill="#c81923" stroke="#c81923" stroke-width="1">NOTEBOOK</text></g><text x="1890.6" y="1240.4" font-family="Liberation Sans, sans-serif" font-weight="bold" font-size="33.3" textLength="196" lengthAdjust="spacingAndGlyphs" fill="none" stroke="rgba(255,255,255,.68)" stroke-width="4.2" mask="url(#nbm)">NOTEBOOK</text><text x="2085.5" y="1240.4" font-family="Liberation Sans, sans-serif" font-size="33.3" textLength="121" lengthAdjust="spacingAndGlyphs" fill="rgba(48,48,48,.82)" stroke="rgba(255,255,255,.62)" stroke-width="1.4">CHECK</text></svg>
</body></html>
